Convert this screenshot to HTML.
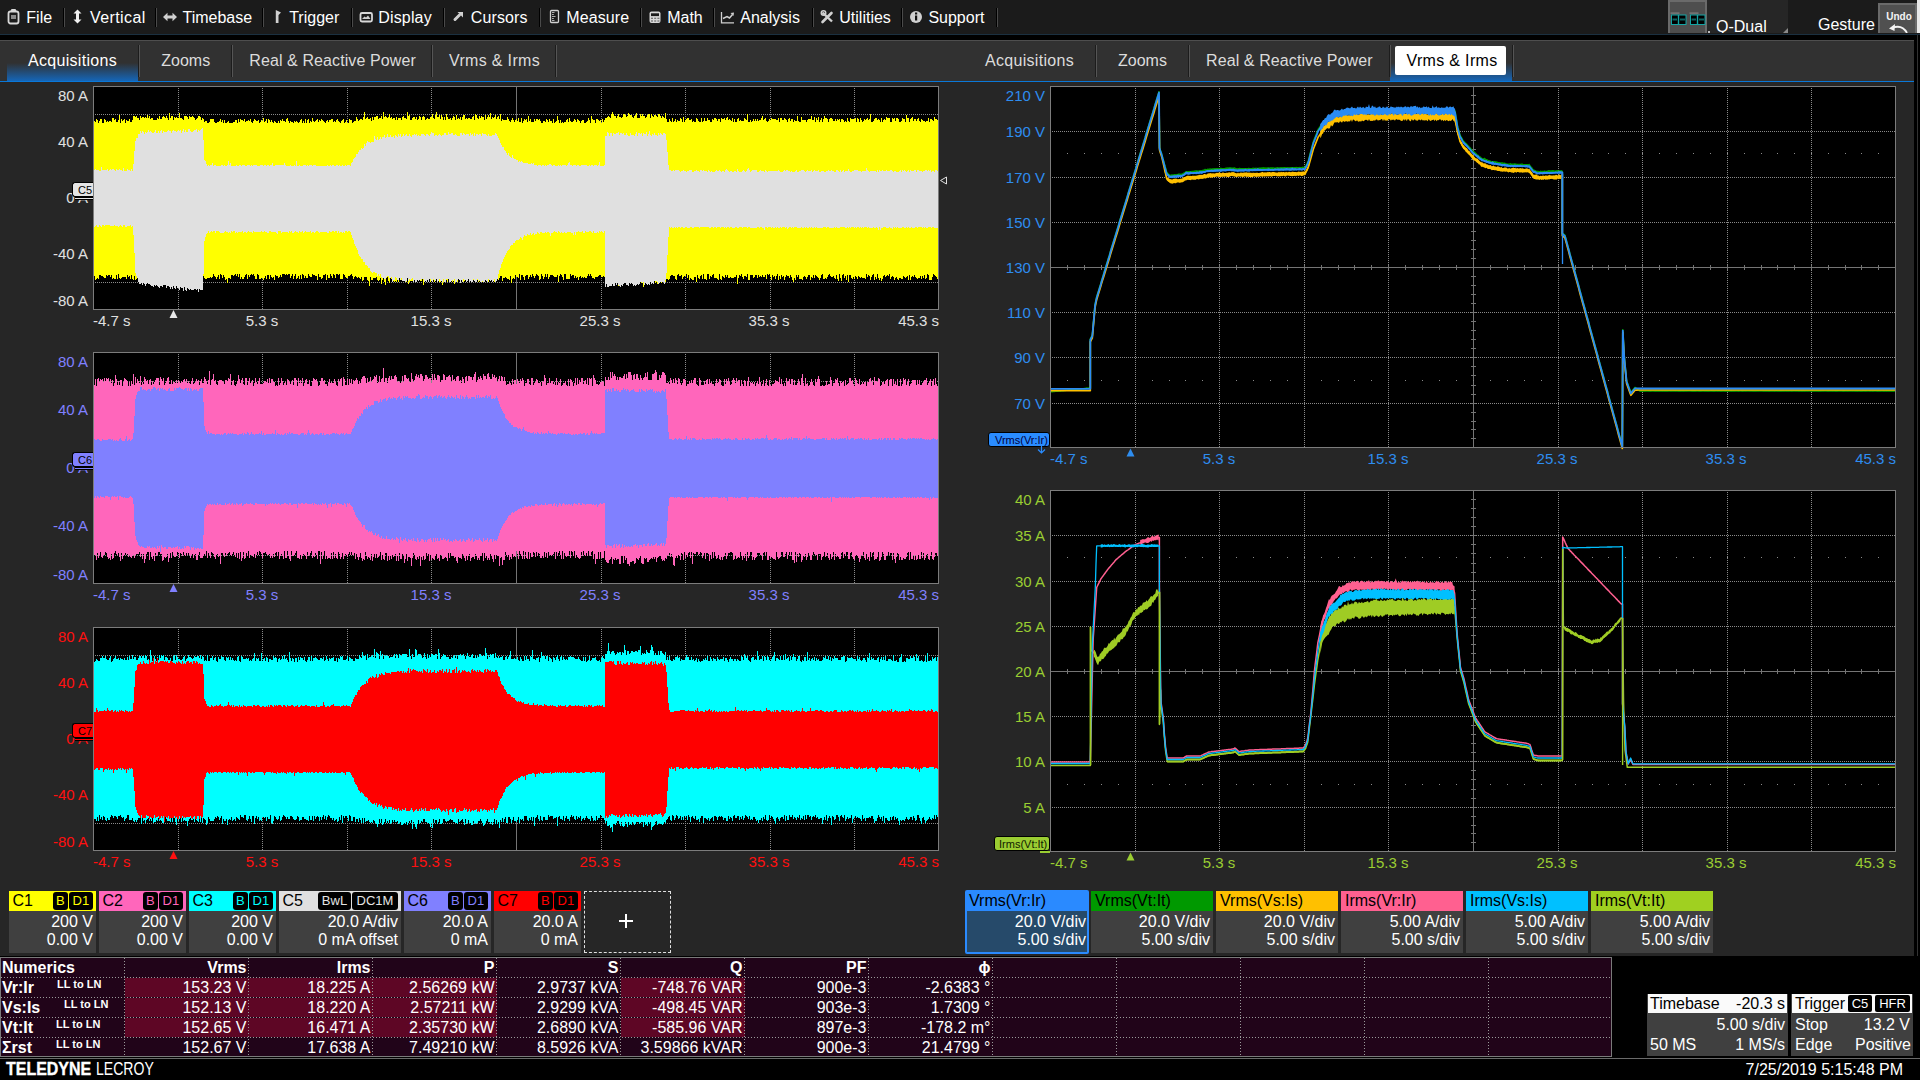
<!DOCTYPE html><html><head><meta charset="utf-8"><style>
html,body{margin:0;padding:0;width:1920px;height:1080px;overflow:hidden;background:#262626;}
body{position:relative;font-family:"Liberation Sans", sans-serif;}
.t{position:absolute;white-space:nowrap;}
</style></head><body>
<div style="position:absolute;left:0px;top:0px;width:1920px;height:34px;background:#1b1b1b;"></div><div style="position:absolute;left:0px;top:34px;width:1920px;height:1px;background:#1b3040;"></div><div style="position:absolute;left:0px;top:35px;width:1920px;height:5px;background:#000;"></div><div class="t" style="left:26.3px;top:9px;font-size:16px;line-height:18px;color:#fff;">File</div><div class="t" style="left:90px;top:9px;font-size:16px;line-height:18px;color:#fff;letter-spacing:0.4px;">Vertical</div><div class="t" style="left:182.5px;top:9px;font-size:16px;line-height:18px;color:#fff;">Timebase</div><div class="t" style="left:289.2px;top:9px;font-size:16px;line-height:18px;color:#fff;">Trigger</div><div class="t" style="left:378.3px;top:9px;font-size:16px;line-height:18px;color:#fff;letter-spacing:0.15px;">Display</div><div class="t" style="left:470.8px;top:9px;font-size:16px;line-height:18px;color:#fff;letter-spacing:0.1px;">Cursors</div><div class="t" style="left:566.3px;top:9px;font-size:16px;line-height:18px;color:#fff;letter-spacing:0.1px;">Measure</div><div class="t" style="left:667.2px;top:9px;font-size:16px;line-height:18px;color:#fff;">Math</div><div class="t" style="left:740.3px;top:9px;font-size:16px;line-height:18px;color:#fff;">Analysis</div><div class="t" style="left:839.3px;top:9px;font-size:16px;line-height:18px;color:#fff;">Utilities</div><div class="t" style="left:928.4px;top:9px;font-size:16px;line-height:18px;color:#fff;">Support</div><div style="position:absolute;left:63px;top:8px;width:1px;height:19px;background:#000;"></div><div style="position:absolute;left:64px;top:8px;width:1px;height:19px;background:#4a4a4a;"></div><div style="position:absolute;left:155px;top:8px;width:1px;height:19px;background:#000;"></div><div style="position:absolute;left:156px;top:8px;width:1px;height:19px;background:#4a4a4a;"></div><div style="position:absolute;left:262px;top:8px;width:1px;height:19px;background:#000;"></div><div style="position:absolute;left:263px;top:8px;width:1px;height:19px;background:#4a4a4a;"></div><div style="position:absolute;left:351px;top:8px;width:1px;height:19px;background:#000;"></div><div style="position:absolute;left:352px;top:8px;width:1px;height:19px;background:#4a4a4a;"></div><div style="position:absolute;left:443px;top:8px;width:1px;height:19px;background:#000;"></div><div style="position:absolute;left:444px;top:8px;width:1px;height:19px;background:#4a4a4a;"></div><div style="position:absolute;left:539px;top:8px;width:1px;height:19px;background:#000;"></div><div style="position:absolute;left:540px;top:8px;width:1px;height:19px;background:#4a4a4a;"></div><div style="position:absolute;left:640px;top:8px;width:1px;height:19px;background:#000;"></div><div style="position:absolute;left:641px;top:8px;width:1px;height:19px;background:#4a4a4a;"></div><div style="position:absolute;left:713px;top:8px;width:1px;height:19px;background:#000;"></div><div style="position:absolute;left:714px;top:8px;width:1px;height:19px;background:#4a4a4a;"></div><div style="position:absolute;left:812px;top:8px;width:1px;height:19px;background:#000;"></div><div style="position:absolute;left:813px;top:8px;width:1px;height:19px;background:#4a4a4a;"></div><div style="position:absolute;left:901px;top:8px;width:1px;height:19px;background:#000;"></div><div style="position:absolute;left:902px;top:8px;width:1px;height:19px;background:#4a4a4a;"></div><div style="position:absolute;left:996px;top:8px;width:1px;height:19px;background:#000;"></div><div style="position:absolute;left:997px;top:8px;width:1px;height:19px;background:#4a4a4a;"></div><svg style="position:absolute;left:0;top:0" width="1000" height="33">
<rect x="8.5" y="11.5" width="10" height="12" rx="2" fill="none" stroke="#d8d8d8" stroke-width="1.8"/>
<path d="M10 12 L11.5 9 L15.5 9 L17 12 Z" fill="#d8d8d8"/>
<rect x="11" y="15" width="5" height="4" fill="#8a8a8a"/>
<path d="M77.5 9.5 L81.5 13.5 L79 13.5 L79 19.5 L81.5 19.5 L77.5 23.5 L73.5 19.5 L76 19.5 L76 13.5 L73.5 13.5 Z" fill="#f2f2f2"/>
<path d="M163 17 L167.5 12.8 L167.5 15.5 L172.5 15.5 L172.5 12.8 L177 17 L172.5 21.2 L172.5 18.5 L167.5 18.5 L167.5 21.2 Z" fill="#d0d0d0"/>
<path d="M275.8 10 L281 12.5 L278.5 15 L278.5 23 L275.8 23 Z" fill="#d0d0d0"/>
<rect x="360.5" y="13" width="11.5" height="8.5" rx="1.5" fill="none" stroke="#d8d8d8" stroke-width="1.8"/>
<path d="M362 19 L364.5 16.5 L366 17.5 L368 15.5 L370.5 19 Z" fill="#d0d0d0"/>
<path d="M455 19.5 L459.5 15" stroke="#d0d0d0" stroke-width="3" stroke-linecap="round"/>
<path d="M457.5 12 L463 12 L463 17.5 Z" fill="#d0d0d0"/>
<rect x="550.5" y="10.5" width="8" height="12" rx="1" fill="none" stroke="#d0d0d0" stroke-width="1.3"/>
<path d="M552 12.5h2.5M552 14.5h1.8M552 16.5h3.5M552 18.5h1.8M552 20.5h2.5" stroke="#c0c0c0" stroke-width="0.9"/>
<rect x="649.5" y="11.5" width="11" height="11.5" rx="2" fill="#d8d8d8"/>
<rect x="651" y="13.3" width="8" height="2.8" fill="#1b1b1b"/>
<path d="M651 18.2h2M654.2 18.2h2M657.4 18.2h2M651 21h2M654.2 21h2M657.4 21h2" stroke="#555" stroke-width="1.1"/>
<path d="M721.5 12 V22.8 H734" fill="none" stroke="#d0d0d0" stroke-width="1.3"/>
<path d="M723 18.5 L727 16.5 L729.5 18 L732.5 14.5" fill="none" stroke="#d0d0d0" stroke-width="1.5"/>
<path d="M730.5 13 L734 12.5 L733.5 16 Z" fill="#d0d0d0"/>
<path d="M822.5 22 L831.5 13" stroke="#d0d0d0" stroke-width="2.6" stroke-linecap="round"/>
<path d="M822.5 12.5 L832 21.5" stroke="#d0d0d0" stroke-width="2.4"/>
<circle cx="823.5" cy="13" r="2.2" fill="none" stroke="#d0d0d0" stroke-width="1.6"/>
<circle cx="916" cy="17" r="6" fill="#d0d0d0"/><rect x="915" y="15.5" width="2.2" height="5" fill="#111"/><rect x="915" y="12.5" width="2.2" height="2" fill="#111"/>
</svg><div style="position:absolute;left:1668px;top:0px;width:39px;height:33px;background:#6a6a6a;"></div><div style="position:absolute;left:1670px;top:2px;width:35px;height:31px;background:#4e4e4e;"></div><div style="position:absolute;left:1707px;top:0px;width:81px;height:33px;background:#262626;"></div><svg style="position:absolute;left:1668px;top:0" width="40" height="33">
<g><rect x="3.5" y="15" width="14.5" height="9.5" fill="#000" stroke="#13a5a5" stroke-width="1"/>
<rect x="9.8" y="15" width="1.4" height="9.5" fill="#13a5a5"/><rect x="4.5" y="18.5" width="4.5" height="2" fill="#13a5a5" opacity=".6"/><rect x="12" y="18.5" width="5" height="2" fill="#13a5a5" opacity=".6"/>
<rect x="2.5" y="12.5" width="9" height="1.2" fill="#9a9a9a" opacity=".7"/></g>
<g transform="translate(19,0)"><rect x="3.5" y="15" width="14.5" height="9.5" fill="#000" stroke="#13a5a5" stroke-width="1"/>
<rect x="9.8" y="15" width="1.4" height="9.5" fill="#13a5a5"/><rect x="4.5" y="18.5" width="4.5" height="2" fill="#13a5a5" opacity=".6"/><rect x="12" y="18.5" width="5" height="2" fill="#13a5a5" opacity=".6"/>
<rect x="2.5" y="12.5" width="9" height="1.2" fill="#9a9a9a" opacity=".7"/></g>
</svg><div style="position:absolute;left:1707px;top:0;width:81px;height:33px;overflow:hidden;"><div class="t" style="left:9px;top:18px;font-size:16px;line-height:18px;color:#fff;">Q-Dual</div></div><svg style="position:absolute;left:1780px;top:27px" width="10" height="7"><path d="M8 1 L8 6 L3 6 Z" fill="#8a8a8a"/></svg><div style="position:absolute;left:1708px;top:31px;width:2px;height:2px;background:#bbb;"></div><div class="t" style="left:1818px;top:16px;font-size:16px;line-height:18px;color:#fff;">Gesture</div><div style="position:absolute;left:1878px;top:3px;width:39px;height:30px;background:#6a6a6a;"></div><div style="position:absolute;left:1880px;top:5px;width:35px;height:28px;background:#505050;"></div><div class="t" style="left:1599px;width:600px;text-align:center;top:11px;font-size:10px;line-height:12px;color:#f4f4f4;font-weight:bold;">Undo</div><svg style="position:absolute;left:1878px;top:20px" width="39" height="13"><path d="M14 8 Q24 4 29 13" fill="none" stroke="#f4f4f4" stroke-width="1.8"/><path d="M11 8.5 L17 4 L16.5 11 Z" fill="#f4f4f4"/></svg><div style="position:absolute;left:1917px;top:0px;width:3px;height:33px;background:#e8e8e8;"></div><div style="position:absolute;left:0px;top:40px;width:1914px;height:1px;background:#4e4e4e;"></div><div style="position:absolute;left:0px;top:41px;width:1914px;height:40px;background:#313131;"></div><div style="position:absolute;left:0px;top:81px;width:1914px;height:1px;background:#0a78d8;"></div><div style="position:absolute;left:0px;top:82px;width:1914px;height:1px;background:#2a2522;"></div><div style="position:absolute;left:1914px;top:35px;width:6px;height:1045px;background:#000;"></div><div style="position:absolute;left:1917px;top:35px;width:1px;height:1022px;background:#333;"></div><div style="position:absolute;left:7px;top:63px;width:131px;height:18px;background:linear-gradient(#313131,#1566b8);"></div><div class="t" style="left:28px;top:52px;font-size:16px;line-height:18px;color:#fff;letter-spacing:0.3px;">Acquisitions</div><div class="t" style="left:161.25px;top:52px;font-size:16px;line-height:18px;color:#dcdcdc;">Zooms</div><div class="t" style="left:249.25px;top:52px;font-size:16px;line-height:18px;color:#dcdcdc;letter-spacing:0.1px;">Real &amp; Reactive Power</div><div class="t" style="left:449px;top:52px;font-size:16px;line-height:18px;color:#dcdcdc;letter-spacing:0.33px;">Vrms &amp; Irms</div><div style="position:absolute;left:138px;top:45px;width:1px;height:32px;background:#1c1c1c;"></div><div style="position:absolute;left:139px;top:45px;width:1px;height:32px;background:#555;"></div><div style="position:absolute;left:231px;top:45px;width:1px;height:32px;background:#1c1c1c;"></div><div style="position:absolute;left:232px;top:45px;width:1px;height:32px;background:#555;"></div><div style="position:absolute;left:431px;top:45px;width:1px;height:32px;background:#1c1c1c;"></div><div style="position:absolute;left:432px;top:45px;width:1px;height:32px;background:#555;"></div><div style="position:absolute;left:555px;top:45px;width:1px;height:32px;background:#1c1c1c;"></div><div style="position:absolute;left:556px;top:45px;width:1px;height:32px;background:#555;"></div><div style="position:absolute;left:1390px;top:63px;width:122px;height:18px;background:linear-gradient(#313131,#1566b8);"></div><div style="position:absolute;left:1395px;top:46px;width:111px;height:29px;background:#ffffff;border-radius:2px;"></div><div class="t" style="left:985px;top:52px;font-size:16px;line-height:18px;color:#dcdcdc;letter-spacing:0.3px;">Acquisitions</div><div class="t" style="left:1118px;top:52px;font-size:16px;line-height:18px;color:#dcdcdc;">Zooms</div><div class="t" style="left:1206px;top:52px;font-size:16px;line-height:18px;color:#dcdcdc;letter-spacing:0.1px;">Real &amp; Reactive Power</div><div class="t" style="left:1406.5px;top:52px;font-size:16px;line-height:18px;color:#000;letter-spacing:0.33px;">Vrms &amp; Irms</div><div style="position:absolute;left:1095px;top:45px;width:1px;height:32px;background:#1c1c1c;"></div><div style="position:absolute;left:1096px;top:45px;width:1px;height:32px;background:#555;"></div><div style="position:absolute;left:1188px;top:45px;width:1px;height:32px;background:#1c1c1c;"></div><div style="position:absolute;left:1189px;top:45px;width:1px;height:32px;background:#555;"></div><div style="position:absolute;left:1389px;top:45px;width:1px;height:32px;background:#1c1c1c;"></div><div style="position:absolute;left:1390px;top:45px;width:1px;height:32px;background:#555;"></div><div style="position:absolute;left:1512px;top:45px;width:1px;height:32px;background:#1c1c1c;"></div><div style="position:absolute;left:1513px;top:45px;width:1px;height:32px;background:#555;"></div>
<svg style="position:absolute;left:0;top:0" width="1920" height="1080"><rect x="93" y="86" width="846" height="224" fill="#000"/><path d="M178.5 88V309M262.5 88V309M347.5 88V309M431.5 88V309M601.5 88V309M685.5 88V309M770.5 88V309M854.5 88V309M95 114.5H938M95 142.5H938M95 170.5H938M95 226.5H938M95 254.5H938M95 282.5H938" stroke="#8a8a8a" stroke-width="1" stroke-dasharray="1 1" fill="none" shape-rendering="crispEdges"/><path d="M516.5 87V309M94 198.5H938" stroke="#747474" stroke-width="1" fill="none" shape-rendering="crispEdges"/><rect x="93" y="352" width="846" height="232" fill="#000"/><path d="M178.5 354V583M262.5 354V583M347.5 354V583M431.5 354V583M601.5 354V583M685.5 354V583M770.5 354V583M854.5 354V583M95 381.5H938M95 410.5H938M95 439.5H938M95 497.5H938M95 526.5H938M95 555.5H938" stroke="#8a8a8a" stroke-width="1" stroke-dasharray="1 1" fill="none" shape-rendering="crispEdges"/><path d="M516.5 353V583M94 468.5H938" stroke="#747474" stroke-width="1" fill="none" shape-rendering="crispEdges"/><rect x="93" y="627" width="846" height="224" fill="#000"/><path d="M178.5 629V850M262.5 629V850M347.5 629V850M431.5 629V850M601.5 629V850M685.5 629V850M770.5 629V850M854.5 629V850M95 655.5H938M95 683.5H938M95 711.5H938M95 767.5H938M95 795.5H938M95 823.5H938" stroke="#8a8a8a" stroke-width="1" stroke-dasharray="1 1" fill="none" shape-rendering="crispEdges"/><path d="M516.5 628V850M94 739.5H938" stroke="#747474" stroke-width="1" fill="none" shape-rendering="crispEdges"/><path d="M94 121V121h1V122h1V119h1V120h1V123h1V121h1V119h1V119h1V123h1V123h1V119h1V120h1V122h1V121h1V122h1V121h1V121h1V122h1V118h1V118h1V120h1V119h1V122h1V122h1V120h1V115h1V123h1V119h1V121h1V120h1V119h1V123h1V120h1V121h1V121h1V119h1V122h1V122h1V120h1V116h1V116h1V117h1V116h1V118h1V118h1V120h1V116h1V118h1V117h1V117h1V118h1V117h1V118h1V115h1V118h1V116h1V119h1V118h1V118h1V120h1V120h1V120h1V120h1V118h1V119h1V116h1V119h1V119h1V117h1V116h1V117h1V118h1V116h1V118h1V120h1V113h1V118h1V116h1V116h1V120h1V117h1V118h1V117h1V118h1V118h1V113h1V118h1V118h1V119h1V120h1V116h1V116h1V116h1V117h1V119h1V116h1V117h1V117h1V116h1V117h1V118h1V120h1V119h1V118h1V116h1V116h1V117h1V120h1V118h1V119h1V122h1V121h1V121h1V123h1V123h1V122h1V119h1V119h1V119h1V119h1V122h1V123h1V123h1V122h1V122h1V121h1V119h1V122h1V120h1V123h1V120h1V123h1V123h1V122h1V121h1V123h1V123h1V123h1V123h1V122h1V122h1V120h1V120h1V123h1V119h1V122h1V119h1V120h1V120h1V121h1V119h1V122h1V121h1V121h1V120h1V121h1V119h1V122h1V123h1V121h1V119h1V120h1V121h1V121h1V120h1V123h1V122h1V120h1V121h1V118h1V122h1V121h1V119h1V123h1V119h1V120h1V122h1V120h1V122h1V123h1V121h1V122h1V123h1V123h1V121h1V123h1V120h1V121h1V119h1V121h1V121h1V122h1V119h1V118h1V121h1V123h1V121h1V122h1V122h1V123h1V121h1V122h1V121h1V122h1V123h1V122h1V120h1V119h1V123h1V121h1V123h1V119h1V123h1V120h1V119h1V123h1V121h1V122h1V118h1V121h1V122h1V121h1V120h1V119h1V122h1V120h1V121h1V119h1V120h1V121h1V122h1V123h1V121h1V120h1V122h1V120h1V120h1V119h1V119h1V122h1V121h1V122h1V120h1V119h1V121h1V122h1V123h1V121h1V120h1V119h1V123h1V122h1V120h1V123h1V123h1V119h1V120h1V120h1V123h1V122h1V121h1V121h1V117h1V119h1V121h1V120h1V119h1V119h1V120h1V117h1V112h1V119h1V118h1V117h1V119h1V119h1V118h1V121h1V117h1V120h1V117h1V117h1V116h1V116h1V119h1V118h1V118h1V116h1V119h1V112h1V117h1V116h1V117h1V118h1V117h1V114h1V118h1V117h1V119h1V118h1V118h1V120h1V117h1V120h1V118h1V118h1V118h1V120h1V117h1V116h1V118h1V118h1V119h1V112h1V116h1V115h1V120h1V120h1V118h1V117h1V117h1V119h1V117h1V120h1V119h1V116h1V117h1V120h1V117h1V116h1V117h1V120h1V119h1V118h1V119h1V119h1V117h1V117h1V114h1V118h1V119h1V115h1V112h1V117h1V117h1V115h1V119h1V115h1V117h1V120h1V117h1V120h1V114h1V117h1V119h1V119h1V118h1V120h1V118h1V116h1V117h1V120h1V115h1V119h1V118h1V119h1V117h1V120h1V117h1V115h1V115h1V119h1V118h1V119h1V118h1V118h1V119h1V119h1V117h1V116h1V120h1V114h1V115h1V118h1V119h1V116h1V118h1V116h1V117h1V117h1V120h1V115h1V119h1V117h1V115h1V117h1V113h1V119h1V117h1V118h1V117h1V115h1V119h1V117h1V116h1V119h1V114h1V121h1V119h1V120h1V120h1V120h1V120h1V117h1V119h1V121h1V122h1V120h1V118h1V120h1V122h1V120h1V119h1V121h1V118h1V122h1V122h1V118h1V123h1V121h1V119h1V120h1V119h1V122h1V116h1V121h1V119h1V122h1V122h1V122h1V119h1V121h1V119h1V119h1V120h1V119h1V121h1V123h1V123h1V121h1V121h1V122h1V119h1V120h1V122h1V119h1V121h1V121h1V123h1V119h1V123h1V122h1V121h1V116h1V120h1V123h1V120h1V123h1V122h1V123h1V122h1V122h1V120h1V119h1V122h1V118h1V121h1V122h1V122h1V121h1V119h1V120h1V122h1V119h1V120h1V121h1V123h1V121h1V120h1V120h1V123h1V123h1V122h1V121h1V118h1V120h1V123h1V116h1V119h1V120h1V120h1V123h1V119h1V119h1V120h1V121h1V120h1V123h1V119h1V122h1V120h1V118h1V118h1V117h1V116h1V117h1V118h1V114h1V112h1V114h1V116h1V116h1V118h1V116h1V114h1V117h1V117h1V118h1V117h1V114h1V114h1V115h1V117h1V116h1V113h1V114h1V115h1V115h1V117h1V118h1V116h1V115h1V113h1V118h1V118h1V118h1V114h1V116h1V114h1V116h1V116h1V118h1V117h1V115h1V114h1V114h1V118h1V114h1V116h1V117h1V115h1V115h1V116h1V117h1V114h1V114h1V116h1V118h1V116h1V117h1V118h1V113h1V119h1V122h1V122h1V119h1V121h1V122h1V118h1V122h1V121h1V119h1V122h1V120h1V121h1V121h1V118h1V119h1V122h1V117h1V122h1V120h1V119h1V118h1V118h1V120h1V120h1V119h1V122h1V121h1V122h1V122h1V118h1V119h1V121h1V122h1V122h1V118h1V122h1V121h1V118h1V121h1V121h1V118h1V120h1V120h1V122h1V122h1V119h1V120h1V118h1V118h1V119h1V121h1V119h1V119h1V122h1V118h1V119h1V119h1V118h1V120h1V118h1V117h1V120h1V119h1V120h1V121h1V118h1V122h1V119h1V122h1V122h1V119h1V118h1V121h1V120h1V121h1V121h1V121h1V118h1V119h1V120h1V114h1V122h1V122h1V120h1V122h1V121h1V119h1V121h1V119h1V121h1V119h1V121h1V120h1V120h1V118h1V116h1V120h1V119h1V118h1V121h1V122h1V121h1V119h1V120h1V118h1V119h1V119h1V119h1V119h1V120h1V120h1V118h1V122h1V118h1V118h1V120h1V120h1V118h1V119h1V120h1V122h1V119h1V118h1V121h1V119h1V119h1V122h1V120h1V121h1V121h1V116h1V121h1V122h1V122h1V117h1V120h1V120h1V120h1V120h1V122h1V120h1V119h1V119h1V119h1V116h1V120h1V120h1V117h1V122h1V118h1V120h1V117h1V122h1V120h1V118h1V122h1V119h1V116h1V118h1V118h1V119h1V122h1V119h1V118h1V118h1V119h1V121h1V121h1V119h1V121h1V119h1V120h1V119h1V122h1V119h1V119h1V120h1V122h1V121h1V122h1V118h1V121h1V122h1V118h1V119h1V119h1V119h1V119h1V118h1V122h1V118h1V119h1V122h1V118h1V120h1V122h1V121h1V119h1V120h1V119h1V118h1V120h1V119h1V114h1V122h1V122h1V121h1V119h1V118h1V118h1V120h1V119h1V120h1V122h1V118h1V122h1V120h1V119h1V120h1V117h1V118h1V118h1V118h1V122h1V122h1V118h1V119h1V118h1V121h1V118h1V118h1V119h1V122h1V122h1V121h1V118h1V119h1V119h1V122h1V115h1V118h1V118h1V122h1V119h1V118h1V117h1V121h1V119h1V119h1V121h1V119h1V118h1V121h1V122h1V119h1V120h1V121h1V121h1V122h1V121h1V121h1V118h1V122h1V119h1V119h1V120h1V121h1V117h1V119h1V119h1V120h1V279h-1V277h-1V276h-1V275h-1V274h-1V277h-1V280h-1V280h-1V280h-1V275h-1V274h-1V278h-1V279h-1V275h-1V278h-1V276h-1V279h-1V276h-1V278h-1V278h-1V279h-1V278h-1V277h-1V275h-1V277h-1V276h-1V277h-1V280h-1V275h-1V280h-1V276h-1V277h-1V278h-1V277h-1V276h-1V279h-1V279h-1V278h-1V278h-1V280h-1V279h-1V277h-1V278h-1V280h-1V277h-1V276h-1V277h-1V279h-1V274h-1V276h-1V275h-1V276h-1V277h-1V275h-1V276h-1V279h-1V281h-1V278h-1V280h-1V278h-1V274h-1V279h-1V277h-1V280h-1V274h-1V275h-1V277h-1V280h-1V276h-1V275h-1V277h-1V274h-1V279h-1V278h-1V278h-1V278h-1V277h-1V278h-1V277h-1V276h-1V279h-1V277h-1V276h-1V279h-1V277h-1V279h-1V278h-1V275h-1V275h-1V282h-1V275h-1V280h-1V276h-1V278h-1V274h-1V275h-1V281h-1V278h-1V274h-1V281h-1V279h-1V275h-1V279h-1V278h-1V276h-1V277h-1V277h-1V276h-1V274h-1V275h-1V277h-1V279h-1V278h-1V279h-1V279h-1V274h-1V275h-1V278h-1V280h-1V278h-1V277h-1V276h-1V275h-1V278h-1V275h-1V278h-1V277h-1V280h-1V275h-1V275h-1V277h-1V279h-1V277h-1V276h-1V277h-1V280h-1V279h-1V279h-1V279h-1V275h-1V277h-1V275h-1V280h-1V278h-1V282h-1V280h-1V277h-1V275h-1V278h-1V276h-1V276h-1V275h-1V277h-1V280h-1V276h-1V277h-1V275h-1V279h-1V276h-1V280h-1V274h-1V276h-1V279h-1V276h-1V277h-1V275h-1V280h-1V277h-1V274h-1V275h-1V274h-1V279h-1V275h-1V277h-1V277h-1V275h-1V277h-1V276h-1V277h-1V275h-1V278h-1V275h-1V275h-1V277h-1V278h-1V275h-1V275h-1V275h-1V280h-1V280h-1V274h-1V277h-1V276h-1V276h-1V279h-1V277h-1V274h-1V276h-1V275h-1V278h-1V284h-1V275h-1V277h-1V277h-1V278h-1V278h-1V278h-1V277h-1V278h-1V278h-1V275h-1V277h-1V275h-1V278h-1V277h-1V276h-1V280h-1V279h-1V274h-1V280h-1V279h-1V278h-1V278h-1V278h-1V274h-1V275h-1V277h-1V276h-1V279h-1V274h-1V274h-1V280h-1V279h-1V279h-1V274h-1V279h-1V275h-1V276h-1V279h-1V278h-1V275h-1V282h-1V277h-1V277h-1V280h-1V280h-1V279h-1V278h-1V280h-1V275h-1V278h-1V274h-1V276h-1V276h-1V277h-1V279h-1V275h-1V276h-1V276h-1V274h-1V275h-1V280h-1V279h-1V276h-1V276h-1V275h-1V275h-1V276h-1V279h-1V280h-1V279h-1V279h-1V282h-1V282h-1V282h-1V281h-1V283h-1V282h-1V281h-1V278h-1V284h-1V282h-1V283h-1V279h-1V284h-1V280h-1V283h-1V281h-1V281h-1V281h-1V282h-1V279h-1V283h-1V281h-1V287h-1V282h-1V283h-1V282h-1V281h-1V281h-1V280h-1V280h-1V281h-1V279h-1V283h-1V282h-1V280h-1V279h-1V282h-1V280h-1V280h-1V282h-1V281h-1V279h-1V279h-1V284h-1V278h-1V282h-1V282h-1V286h-1V280h-1V279h-1V281h-1V279h-1V284h-1V279h-1V283h-1V282h-1V278h-1V278h-1V281h-1V279h-1V280h-1V277h-1V276h-1V277h-1V277h-1V275h-1V275h-1V276h-1V277h-1V277h-1V277h-1V279h-1V278h-1V278h-1V276h-1V274h-1V276h-1V274h-1V276h-1V278h-1V278h-1V277h-1V278h-1V277h-1V278h-1V276h-1V277h-1V280h-1V277h-1V278h-1V276h-1V278h-1V275h-1V275h-1V276h-1V274h-1V279h-1V279h-1V279h-1V279h-1V274h-1V274h-1V280h-1V277h-1V275h-1V274h-1V276h-1V282h-1V275h-1V277h-1V277h-1V277h-1V276h-1V275h-1V275h-1V275h-1V277h-1V279h-1V274h-1V277h-1V274h-1V277h-1V279h-1V276h-1V274h-1V279h-1V280h-1V276h-1V275h-1V274h-1V276h-1V278h-1V276h-1V274h-1V277h-1V275h-1V277h-1V279h-1V275h-1V275h-1V276h-1V280h-1V277h-1V275h-1V275h-1V280h-1V274h-1V278h-1V277h-1V277h-1V275h-1V279h-1V278h-1V279h-1V283h-1V276h-1V280h-1V279h-1V279h-1V278h-1V277h-1V278h-1V278h-1V281h-1V276h-1V276h-1V278h-1V280h-1V277h-1V278h-1V282h-1V282h-1V279h-1V279h-1V279h-1V279h-1V278h-1V282h-1V278h-1V280h-1V279h-1V281h-1V280h-1V282h-1V282h-1V277h-1V281h-1V282h-1V280h-1V280h-1V281h-1V280h-1V280h-1V279h-1V282h-1V278h-1V282h-1V279h-1V279h-1V279h-1V279h-1V281h-1V282h-1V280h-1V278h-1V281h-1V278h-1V278h-1V282h-1V277h-1V278h-1V284h-1V281h-1V282h-1V278h-1V281h-1V282h-1V278h-1V282h-1V280h-1V281h-1V281h-1V282h-1V285h-1V277h-1V282h-1V282h-1V278h-1V282h-1V277h-1V277h-1V282h-1V280h-1V281h-1V280h-1V282h-1V278h-1V280h-1V278h-1V282h-1V278h-1V282h-1V285h-1V279h-1V281h-1V281h-1V279h-1V280h-1V280h-1V281h-1V277h-1V279h-1V277h-1V281h-1V281h-1V281h-1V282h-1V284h-1V278h-1V282h-1V281h-1V278h-1V276h-1V279h-1V280h-1V279h-1V278h-1V282h-1V278h-1V282h-1V281h-1V282h-1V281h-1V278h-1V279h-1V278h-1V283h-1V281h-1V277h-1V278h-1V285h-1V282h-1V278h-1V280h-1V284h-1V278h-1V280h-1V281h-1V280h-1V277h-1V278h-1V278h-1V278h-1V280h-1V280h-1V277h-1V286h-1V281h-1V280h-1V277h-1V277h-1V277h-1V280h-1V281h-1V277h-1V279h-1V278h-1V277h-1V278h-1V277h-1V276h-1V277h-1V279h-1V276h-1V274h-1V275h-1V276h-1V276h-1V278h-1V278h-1V277h-1V275h-1V274h-1V279h-1V279h-1V279h-1V274h-1V275h-1V274h-1V274h-1V278h-1V275h-1V274h-1V278h-1V276h-1V274h-1V278h-1V278h-1V275h-1V280h-1V274h-1V275h-1V275h-1V278h-1V279h-1V277h-1V277h-1V274h-1V280h-1V276h-1V276h-1V275h-1V275h-1V274h-1V277h-1V277h-1V276h-1V274h-1V278h-1V278h-1V276h-1V278h-1V275h-1V274h-1V279h-1V275h-1V279h-1V276h-1V278h-1V279h-1V274h-1V276h-1V279h-1V274h-1V276h-1V278h-1V274h-1V274h-1V275h-1V274h-1V275h-1V274h-1V274h-1V274h-1V277h-1V275h-1V277h-1V278h-1V276h-1V276h-1V275h-1V280h-1V277h-1V278h-1V277h-1V275h-1V279h-1V275h-1V275h-1V279h-1V276h-1V278h-1V280h-1V278h-1V278h-1V279h-1V279h-1V275h-1V274h-1V279h-1V279h-1V276h-1V274h-1V275h-1V274h-1V275h-1V277h-1V275h-1V279h-1V274h-1V275h-1V277h-1V279h-1V279h-1V277h-1V279h-1V274h-1V277h-1V274h-1V276h-1V274h-1V275h-1V276h-1V275h-1V275h-1V279h-1V278h-1V278h-1V283h-1V279h-1V280h-1V277h-1V275h-1V278h-1V275h-1V274h-1V279h-1V275h-1V277h-1V279h-1V277h-1V276h-1V274h-1V277h-1V278h-1V277h-1V278h-1V278h-1V278h-1V279h-1V279h-1V278h-1V276h-1V278h-1V282h-1V278h-1V276h-1V279h-1V279h-1V280h-1V281h-1V280h-1V279h-1V279h-1V277h-1V280h-1V277h-1V281h-1V279h-1V277h-1V282h-1V281h-1V281h-1V276h-1V278h-1V284h-1V276h-1V279h-1V277h-1V280h-1V282h-1V280h-1V276h-1V281h-1V281h-1V282h-1V280h-1V278h-1V283h-1V279h-1V277h-1V279h-1V279h-1V281h-1V277h-1V282h-1V281h-1V279h-1V278h-1V279h-1V278h-1V277h-1V281h-1V282h-1V279h-1V284h-1V282h-1V278h-1V278h-1V280h-1V281h-1V283h-1V281h-1V282h-1V280h-1V281h-1V277h-1V278h-1V278h-1V279h-1V280h-1V276h-1V280h-1V279h-1V275h-1V279h-1V276h-1V277h-1V275h-1V279h-1V277h-1V277h-1V277h-1V277h-1V278h-1V279h-1V278h-1V274h-1V279h-1V275h-1V279h-1V279h-1V278h-1V279h-1V275h-1V277h-1V275h-1V275h-1V276h-1V275h-1V278h-1V278h-1V277h-1V276h-1V276h-1V275h-1V275h-1V279h-1V278h-1V279h-1V280h-1V276h-1Z" fill="#ffff00" shape-rendering="crispEdges"/><path d="M94 170V170h1V169h1V170h1V170h1V170h1V171h1V171h1V167h1V170h1V170h1V170h1V170h1V170h1V169h1V171h1V170h1V169h1V170h1V169h1V169h1V170h1V171h1V169h1V170h1V170h1V169h1V170h1V170h1V171h1V168h1V171h1V171h1V171h1V169h1V170h1V170h1V171h1V169h1V171h1V164h1V151h1V141h1V138h1V138h1V134h1V134h1V131h1V133h1V131h1V132h1V134h1V132h1V133h1V132h1V130h1V132h1V131h1V132h1V133h1V133h1V132h1V130h1V133h1V133h1V131h1V133h1V131h1V130h1V133h1V131h1V132h1V132h1V132h1V131h1V130h1V131h1V131h1V133h1V131h1V130h1V131h1V131h1V132h1V131h1V130h1V131h1V130h1V133h1V131h1V129h1V132h1V130h1V132h1V132h1V129h1V129h1V131h1V132h1V132h1V131h1V130h1V130h1V129h1V132h1V130h1V131h1V130h1V129h1V128h1V140h1V160h1V161h1V164h1V166h1V165h1V166h1V165h1V165h1V163h1V166h1V165h1V165h1V166h1V166h1V166h1V166h1V166h1V165h1V165h1V166h1V165h1V166h1V166h1V165h1V161h1V165h1V163h1V166h1V166h1V166h1V166h1V166h1V165h1V166h1V166h1V165h1V165h1V166h1V165h1V165h1V165h1V166h1V166h1V165h1V165h1V165h1V166h1V165h1V166h1V165h1V165h1V165h1V165h1V166h1V166h1V166h1V165h1V165h1V165h1V166h1V165h1V165h1V166h1V165h1V165h1V166h1V165h1V165h1V163h1V166h1V166h1V165h1V165h1V165h1V165h1V165h1V165h1V165h1V165h1V165h1V163h1V165h1V166h1V166h1V166h1V166h1V165h1V166h1V166h1V166h1V165h1V166h1V161h1V166h1V166h1V165h1V166h1V166h1V166h1V165h1V165h1V165h1V166h1V165h1V166h1V165h1V165h1V165h1V166h1V165h1V165h1V165h1V166h1V166h1V166h1V166h1V166h1V166h1V166h1V166h1V166h1V166h1V166h1V165h1V166h1V166h1V165h1V166h1V165h1V165h1V166h1V166h1V165h1V165h1V166h1V165h1V166h1V166h1V165h1V166h1V166h1V165h1V166h1V165h1V165h1V165h1V166h1V163h1V162h1V159h1V158h1V157h1V154h1V154h1V152h1V150h1V150h1V148h1V149h1V148h1V144h1V146h1V143h1V141h1V142h1V142h1V143h1V142h1V142h1V142h1V136h1V139h1V140h1V137h1V140h1V139h1V137h1V139h1V137h1V137h1V135h1V138h1V137h1V134h1V137h1V137h1V135h1V137h1V137h1V136h1V138h1V135h1V136h1V137h1V134h1V136h1V134h1V137h1V136h1V134h1V136h1V135h1V134h1V136h1V136h1V134h1V136h1V137h1V135h1V135h1V134h1V135h1V134h1V136h1V135h1V136h1V136h1V134h1V134h1V134h1V135h1V136h1V134h1V134h1V135h1V136h1V134h1V132h1V133h1V133h1V136h1V135h1V135h1V136h1V135h1V134h1V135h1V136h1V135h1V135h1V133h1V133h1V135h1V135h1V132h1V134h1V134h1V133h1V133h1V135h1V135h1V134h1V135h1V136h1V136h1V136h1V133h1V133h1V135h1V133h1V134h1V135h1V134h1V134h1V134h1V136h1V133h1V135h1V134h1V136h1V133h1V136h1V134h1V134h1V135h1V134h1V134h1V136h1V133h1V134h1V134h1V134h1V135h1V136h1V134h1V136h1V136h1V136h1V135h1V135h1V135h1V133h1V134h1V136h1V138h1V140h1V143h1V145h1V147h1V147h1V150h1V151h1V153h1V155h1V153h1V156h1V157h1V158h1V155h1V158h1V159h1V159h1V160h1V160h1V162h1V161h1V162h1V161h1V162h1V163h1V163h1V163h1V163h1V163h1V164h1V164h1V164h1V163h1V164h1V163h1V165h1V165h1V165h1V166h1V165h1V165h1V165h1V166h1V165h1V165h1V166h1V165h1V166h1V165h1V165h1V164h1V164h1V165h1V166h1V165h1V165h1V166h1V166h1V166h1V165h1V166h1V165h1V166h1V165h1V165h1V165h1V165h1V166h1V165h1V163h1V162h1V165h1V165h1V166h1V165h1V165h1V165h1V166h1V165h1V165h1V166h1V166h1V165h1V165h1V165h1V165h1V165h1V165h1V166h1V166h1V165h1V166h1V165h1V165h1V166h1V165h1V165h1V165h1V166h1V165h1V162h1V166h1V166h1V166h1V166h1V165h1V136h1V136h1V132h1V133h1V136h1V133h1V133h1V136h1V133h1V134h1V134h1V133h1V133h1V132h1V135h1V133h1V133h1V134h1V133h1V135h1V135h1V133h1V135h1V136h1V136h1V133h1V135h1V135h1V135h1V136h1V134h1V132h1V136h1V133h1V133h1V134h1V133h1V136h1V133h1V134h1V134h1V132h1V136h1V134h1V131h1V135h1V136h1V134h1V135h1V133h1V135h1V135h1V136h1V133h1V135h1V133h1V134h1V135h1V133h1V133h1V134h1V140h1V152h1V165h1V170h1V170h1V171h1V171h1V170h1V171h1V170h1V170h1V170h1V170h1V171h1V172h1V171h1V171h1V170h1V171h1V171h1V172h1V171h1V171h1V170h1V170h1V170h1V172h1V172h1V171h1V171h1V170h1V171h1V171h1V172h1V170h1V170h1V171h1V170h1V171h1V171h1V171h1V172h1V170h1V171h1V172h1V171h1V172h1V172h1V172h1V171h1V170h1V171h1V171h1V170h1V171h1V172h1V171h1V171h1V172h1V170h1V169h1V170h1V171h1V172h1V171h1V171h1V172h1V172h1V171h1V171h1V172h1V169h1V171h1V172h1V172h1V172h1V171h1V170h1V171h1V172h1V171h1V169h1V168h1V170h1V172h1V171h1V170h1V170h1V170h1V170h1V170h1V172h1V172h1V171h1V170h1V171h1V171h1V171h1V172h1V170h1V171h1V172h1V171h1V171h1V171h1V171h1V171h1V171h1V171h1V171h1V171h1V171h1V170h1V171h1V172h1V172h1V172h1V171h1V170h1V171h1V170h1V170h1V171h1V171h1V172h1V171h1V172h1V172h1V172h1V171h1V170h1V172h1V172h1V171h1V171h1V170h1V170h1V170h1V171h1V172h1V171h1V170h1V171h1V171h1V171h1V170h1V172h1V171h1V170h1V171h1V171h1V171h1V170h1V172h1V172h1V171h1V171h1V171h1V172h1V172h1V171h1V171h1V170h1V171h1V171h1V170h1V171h1V171h1V172h1V172h1V170h1V170h1V171h1V172h1V170h1V172h1V171h1V170h1V172h1V171h1V171h1V171h1V169h1V171h1V172h1V172h1V171h1V171h1V170h1V170h1V170h1V170h1V171h1V171h1V171h1V172h1V171h1V171h1V171h1V171h1V168h1V170h1V171h1V172h1V171h1V171h1V171h1V171h1V171h1V171h1V172h1V170h1V172h1V170h1V171h1V171h1V170h1V171h1V171h1V171h1V170h1V171h1V171h1V171h1V170h1V170h1V171h1V172h1V171h1V171h1V172h1V172h1V172h1V171h1V170h1V172h1V170h1V171h1V170h1V171h1V172h1V171h1V170h1V172h1V170h1V171h1V171h1V171h1V170h1V170h1V172h1V170h1V170h1V171h1V171h1V171h1V172h1V171h1V171h1V170h1V170h1V171h1V170h1V171h1V170h1V172h1V171h1V171h1V172h1V170h1V170h1V171h1V228h-1V228h-1V228h-1V228h-1V227h-1V227h-1V228h-1V227h-1V227h-1V227h-1V228h-1V228h-1V227h-1V228h-1V227h-1V228h-1V227h-1V227h-1V227h-1V227h-1V228h-1V227h-1V227h-1V228h-1V228h-1V228h-1V227h-1V228h-1V228h-1V227h-1V228h-1V227h-1V228h-1V228h-1V227h-1V227h-1V228h-1V228h-1V228h-1V228h-1V227h-1V228h-1V227h-1V228h-1V227h-1V229h-1V228h-1V228h-1V227h-1V228h-1V228h-1V228h-1V227h-1V227h-1V227h-1V228h-1V228h-1V230h-1V227h-1V230h-1V228h-1V227h-1V228h-1V228h-1V227h-1V228h-1V228h-1V228h-1V228h-1V227h-1V228h-1V227h-1V227h-1V227h-1V228h-1V227h-1V228h-1V227h-1V228h-1V227h-1V227h-1V228h-1V227h-1V228h-1V227h-1V227h-1V227h-1V228h-1V227h-1V228h-1V227h-1V228h-1V228h-1V227h-1V227h-1V227h-1V227h-1V227h-1V228h-1V228h-1V228h-1V227h-1V228h-1V227h-1V228h-1V228h-1V228h-1V228h-1V228h-1V227h-1V227h-1V228h-1V227h-1V227h-1V227h-1V228h-1V228h-1V228h-1V228h-1V228h-1V228h-1V227h-1V228h-1V227h-1V228h-1V228h-1V227h-1V228h-1V227h-1V228h-1V228h-1V227h-1V228h-1V227h-1V228h-1V228h-1V227h-1V228h-1V228h-1V228h-1V228h-1V227h-1V227h-1V227h-1V228h-1V227h-1V228h-1V227h-1V227h-1V228h-1V229h-1V227h-1V228h-1V227h-1V227h-1V227h-1V228h-1V227h-1V228h-1V228h-1V227h-1V228h-1V227h-1V228h-1V228h-1V227h-1V228h-1V227h-1V227h-1V227h-1V228h-1V227h-1V227h-1V230h-1V228h-1V228h-1V227h-1V227h-1V228h-1V227h-1V227h-1V228h-1V228h-1V228h-1V228h-1V228h-1V228h-1V228h-1V227h-1V227h-1V228h-1V227h-1V227h-1V227h-1V227h-1V228h-1V227h-1V227h-1V227h-1V228h-1V228h-1V227h-1V227h-1V228h-1V228h-1V228h-1V227h-1V227h-1V228h-1V227h-1V227h-1V228h-1V227h-1V228h-1V227h-1V227h-1V227h-1V228h-1V227h-1V227h-1V227h-1V228h-1V227h-1V227h-1V228h-1V227h-1V227h-1V228h-1V228h-1V227h-1V227h-1V227h-1V227h-1V227h-1V227h-1V227h-1V227h-1V227h-1V228h-1V227h-1V227h-1V227h-1V227h-1V227h-1V228h-1V228h-1V227h-1V227h-1V228h-1V228h-1V228h-1V227h-1V227h-1V228h-1V228h-1V227h-1V227h-1V228h-1V227h-1V227h-1V228h-1V227h-1V228h-1V227h-1V228h-1V228h-1V227h-1V228h-1V227h-1V237h-1V255h-1V273h-1V280h-1V284h-1V282h-1V282h-1V282h-1V282h-1V283h-1V284h-1V282h-1V281h-1V281h-1V281h-1V284h-1V283h-1V284h-1V282h-1V285h-1V284h-1V285h-1V284h-1V283h-1V285h-1V282h-1V283h-1V282h-1V282h-1V284h-1V285h-1V284h-1V285h-1V286h-1V285h-1V286h-1V284h-1V283h-1V284h-1V283h-1V286h-1V285h-1V285h-1V283h-1V283h-1V284h-1V286h-1V285h-1V287h-1V286h-1V285h-1V283h-1V285h-1V283h-1V286h-1V286h-1V284h-1V286h-1V286h-1V286h-1V287h-1V287h-1V284h-1V287h-1V231h-1V233h-1V232h-1V231h-1V232h-1V231h-1V233h-1V232h-1V233h-1V233h-1V233h-1V231h-1V233h-1V232h-1V231h-1V231h-1V232h-1V232h-1V232h-1V231h-1V233h-1V233h-1V231h-1V232h-1V232h-1V232h-1V231h-1V232h-1V232h-1V235h-1V232h-1V235h-1V233h-1V233h-1V232h-1V232h-1V232h-1V232h-1V233h-1V233h-1V232h-1V233h-1V233h-1V232h-1V233h-1V232h-1V231h-1V233h-1V232h-1V232h-1V231h-1V232h-1V233h-1V233h-1V236h-1V233h-1V232h-1V232h-1V233h-1V232h-1V233h-1V233h-1V233h-1V232h-1V232h-1V234h-1V233h-1V232h-1V234h-1V234h-1V235h-1V233h-1V234h-1V235h-1V233h-1V235h-1V235h-1V234h-1V236h-1V236h-1V235h-1V237h-1V240h-1V238h-1V237h-1V239h-1V240h-1V240h-1V240h-1V241h-1V243h-1V243h-1V245h-1V245h-1V246h-1V249h-1V250h-1V251h-1V253h-1V255h-1V257h-1V259h-1V262h-1V264h-1V268h-1V270h-1V274h-1V279h-1V281h-1V282h-1V279h-1V281h-1V282h-1V280h-1V281h-1V280h-1V279h-1V282h-1V281h-1V280h-1V282h-1V282h-1V281h-1V282h-1V282h-1V280h-1V281h-1V279h-1V282h-1V282h-1V281h-1V279h-1V282h-1V282h-1V281h-1V282h-1V279h-1V281h-1V282h-1V280h-1V280h-1V279h-1V282h-1V280h-1V283h-1V280h-1V279h-1V280h-1V282h-1V282h-1V279h-1V281h-1V280h-1V281h-1V282h-1V282h-1V279h-1V279h-1V279h-1V282h-1V282h-1V279h-1V282h-1V281h-1V281h-1V279h-1V281h-1V282h-1V279h-1V281h-1V280h-1V279h-1V282h-1V281h-1V279h-1V279h-1V282h-1V280h-1V282h-1V281h-1V282h-1V279h-1V279h-1V279h-1V280h-1V280h-1V281h-1V280h-1V282h-1V282h-1V280h-1V282h-1V278h-1V279h-1V280h-1V279h-1V281h-1V278h-1V281h-1V282h-1V281h-1V281h-1V281h-1V278h-1V280h-1V278h-1V280h-1V280h-1V278h-1V277h-1V280h-1V280h-1V282h-1V277h-1V278h-1V278h-1V276h-1V276h-1V277h-1V279h-1V279h-1V278h-1V278h-1V277h-1V274h-1V276h-1V274h-1V276h-1V273h-1V273h-1V272h-1V272h-1V273h-1V272h-1V271h-1V268h-1V268h-1V266h-1V265h-1V265h-1V262h-1V262h-1V259h-1V259h-1V257h-1V256h-1V254h-1V250h-1V248h-1V246h-1V244h-1V240h-1V238h-1V235h-1V232h-1V231h-1V231h-1V232h-1V231h-1V231h-1V233h-1V232h-1V233h-1V232h-1V232h-1V233h-1V231h-1V233h-1V231h-1V231h-1V232h-1V231h-1V231h-1V232h-1V232h-1V231h-1V233h-1V233h-1V232h-1V232h-1V232h-1V232h-1V232h-1V232h-1V232h-1V233h-1V232h-1V231h-1V231h-1V232h-1V233h-1V232h-1V232h-1V233h-1V231h-1V232h-1V232h-1V232h-1V232h-1V231h-1V232h-1V233h-1V231h-1V232h-1V232h-1V231h-1V233h-1V232h-1V232h-1V231h-1V232h-1V233h-1V233h-1V231h-1V232h-1V231h-1V233h-1V232h-1V232h-1V232h-1V232h-1V232h-1V232h-1V233h-1V231h-1V231h-1V231h-1V234h-1V233h-1V232h-1V232h-1V232h-1V232h-1V232h-1V231h-1V231h-1V233h-1V233h-1V232h-1V232h-1V231h-1V232h-1V232h-1V231h-1V232h-1V232h-1V232h-1V232h-1V232h-1V232h-1V232h-1V231h-1V233h-1V232h-1V232h-1V232h-1V231h-1V232h-1V233h-1V232h-1V232h-1V233h-1V231h-1V232h-1V232h-1V232h-1V232h-1V233h-1V232h-1V233h-1V231h-1V231h-1V232h-1V231h-1V233h-1V232h-1V233h-1V232h-1V232h-1V231h-1V232h-1V233h-1V233h-1V233h-1V233h-1V232h-1V231h-1V231h-1V231h-1V233h-1V231h-1V231h-1V232h-1V231h-1V232h-1V233h-1V231h-1V233h-1V234h-1V237h-1V241h-1V274h-1V290h-1V290h-1V290h-1V289h-1V292h-1V289h-1V290h-1V289h-1V289h-1V290h-1V290h-1V290h-1V289h-1V290h-1V289h-1V288h-1V291h-1V290h-1V287h-1V291h-1V288h-1V288h-1V287h-1V290h-1V288h-1V288h-1V286h-1V289h-1V288h-1V286h-1V289h-1V287h-1V289h-1V287h-1V286h-1V286h-1V288h-1V285h-1V285h-1V285h-1V287h-1V286h-1V286h-1V288h-1V287h-1V286h-1V285h-1V286h-1V285h-1V287h-1V286h-1V286h-1V285h-1V284h-1V284h-1V283h-1V284h-1V286h-1V284h-1V283h-1V285h-1V283h-1V284h-1V284h-1V282h-1V278h-1V276h-1V273h-1V253h-1V235h-1V226h-1V227h-1V225h-1V226h-1V226h-1V226h-1V227h-1V227h-1V225h-1V225h-1V227h-1V226h-1V225h-1V226h-1V227h-1V226h-1V226h-1V226h-1V225h-1V226h-1V226h-1V226h-1V226h-1V225h-1V225h-1V225h-1V225h-1V225h-1V226h-1V225h-1V225h-1V227h-1V226h-1V225h-1V227h-1V227h-1V225h-1V226h-1V227h-1Z" fill="#e0e0e0" shape-rendering="crispEdges"/><path d="M94 385V385h1V379h1V386h1V379h1V378h1V382h1V379h1V380h1V379h1V382h1V378h1V381h1V378h1V379h1V378h1V382h1V379h1V383h1V380h1V386h1V383h1V375h1V379h1V385h1V381h1V385h1V380h1V380h1V386h1V382h1V378h1V379h1V380h1V381h1V386h1V382h1V386h1V381h1V384h1V374h1V385h1V377h1V383h1V379h1V381h1V383h1V376h1V385h1V382h1V384h1V377h1V379h1V381h1V380h1V384h1V380h1V379h1V385h1V381h1V384h1V382h1V380h1V378h1V378h1V378h1V385h1V377h1V379h1V381h1V378h1V385h1V383h1V381h1V378h1V377h1V384h1V384h1V380h1V384h1V382h1V382h1V383h1V380h1V383h1V380h1V382h1V383h1V381h1V382h1V380h1V379h1V382h1V379h1V383h1V381h1V383h1V384h1V381h1V378h1V384h1V383h1V382h1V379h1V381h1V380h1V385h1V381h1V379h1V383h1V383h1V377h1V379h1V381h1V384h1V380h1V371h1V385h1V380h1V379h1V374h1V381h1V380h1V384h1V385h1V381h1V380h1V380h1V380h1V381h1V382h1V384h1V380h1V380h1V381h1V378h1V379h1V374h1V385h1V381h1V380h1V385h1V386h1V384h1V381h1V375h1V379h1V383h1V380h1V378h1V384h1V385h1V378h1V378h1V385h1V381h1V378h1V383h1V382h1V380h1V386h1V383h1V378h1V382h1V384h1V381h1V378h1V384h1V384h1V384h1V383h1V381h1V381h1V382h1V379h1V383h1V378h1V383h1V379h1V379h1V382h1V382h1V386h1V385h1V386h1V378h1V385h1V383h1V378h1V381h1V385h1V383h1V382h1V385h1V379h1V380h1V382h1V384h1V382h1V380h1V385h1V378h1V378h1V380h1V386h1V378h1V383h1V380h1V383h1V378h1V386h1V383h1V380h1V379h1V384h1V384h1V380h1V386h1V386h1V381h1V378h1V379h1V380h1V379h1V382h1V386h1V385h1V381h1V378h1V378h1V381h1V380h1V384h1V384h1V386h1V382h1V379h1V383h1V382h1V383h1V383h1V379h1V382h1V385h1V386h1V379h1V382h1V379h1V378h1V386h1V377h1V379h1V385h1V385h1V379h1V385h1V379h1V383h1V379h1V384h1V380h1V381h1V380h1V378h1V380h1V384h1V381h1V383h1V379h1V377h1V376h1V376h1V378h1V383h1V378h1V382h1V382h1V377h1V382h1V380h1V379h1V376h1V377h1V375h1V383h1V382h1V376h1V382h1V379h1V378h1V368h1V382h1V378h1V378h1V383h1V378h1V376h1V380h1V376h1V379h1V379h1V376h1V375h1V377h1V382h1V381h1V382h1V383h1V382h1V376h1V382h1V375h1V375h1V378h1V379h1V378h1V382h1V382h1V373h1V379h1V382h1V380h1V376h1V374h1V377h1V375h1V378h1V374h1V374h1V376h1V381h1V379h1V375h1V375h1V377h1V379h1V378h1V378h1V383h1V374h1V380h1V374h1V378h1V380h1V375h1V375h1V376h1V382h1V380h1V380h1V374h1V375h1V380h1V377h1V377h1V376h1V375h1V377h1V382h1V375h1V380h1V379h1V381h1V377h1V376h1V376h1V381h1V380h1V383h1V377h1V379h1V383h1V377h1V376h1V381h1V376h1V376h1V377h1V377h1V380h1V377h1V374h1V372h1V382h1V380h1V377h1V379h1V376h1V378h1V380h1V374h1V376h1V376h1V379h1V374h1V373h1V377h1V379h1V379h1V374h1V377h1V375h1V378h1V377h1V382h1V379h1V376h1V381h1V376h1V377h1V381h1V377h1V381h1V385h1V384h1V384h1V382h1V383h1V385h1V379h1V384h1V380h1V380h1V384h1V379h1V381h1V383h1V379h1V381h1V378h1V380h1V386h1V383h1V383h1V379h1V379h1V384h1V385h1V378h1V378h1V385h1V383h1V382h1V379h1V380h1V383h1V383h1V382h1V386h1V381h1V382h1V375h1V378h1V385h1V383h1V383h1V378h1V383h1V381h1V381h1V384h1V382h1V385h1V378h1V385h1V382h1V383h1V379h1V386h1V385h1V383h1V383h1V381h1V385h1V386h1V379h1V386h1V379h1V380h1V382h1V386h1V383h1V378h1V385h1V378h1V384h1V380h1V382h1V378h1V378h1V384h1V381h1V380h1V384h1V378h1V385h1V378h1V379h1V378h1V386h1V375h1V378h1V380h1V384h1V384h1V385h1V384h1V382h1V382h1V381h1V382h1V386h1V377h1V380h1V380h1V377h1V380h1V372h1V378h1V372h1V376h1V374h1V376h1V380h1V377h1V380h1V377h1V377h1V378h1V378h1V376h1V374h1V379h1V374h1V378h1V372h1V372h1V372h1V375h1V380h1V375h1V374h1V379h1V374h1V374h1V378h1V380h1V375h1V378h1V380h1V378h1V377h1V373h1V377h1V372h1V380h1V380h1V380h1V380h1V374h1V374h1V373h1V370h1V372h1V380h1V380h1V375h1V378h1V375h1V372h1V372h1V373h1V375h1V383h1V383h1V382h1V384h1V378h1V380h1V383h1V379h1V383h1V378h1V380h1V384h1V378h1V379h1V383h1V385h1V383h1V379h1V379h1V380h1V386h1V384h1V384h1V381h1V383h1V380h1V383h1V380h1V378h1V378h1V384h1V385h1V386h1V378h1V380h1V385h1V385h1V385h1V381h1V384h1V380h1V379h1V384h1V379h1V383h1V382h1V384h1V384h1V386h1V383h1V379h1V383h1V382h1V379h1V380h1V385h1V386h1V386h1V379h1V384h1V379h1V381h1V378h1V382h1V385h1V384h1V380h1V378h1V380h1V383h1V378h1V382h1V380h1V380h1V386h1V380h1V384h1V386h1V380h1V381h1V386h1V381h1V377h1V386h1V382h1V383h1V382h1V384h1V382h1V386h1V383h1V381h1V384h1V377h1V382h1V386h1V384h1V380h1V386h1V383h1V379h1V385h1V386h1V380h1V385h1V386h1V384h1V384h1V383h1V380h1V381h1V381h1V382h1V377h1V384h1V379h1V384h1V386h1V383h1V386h1V378h1V382h1V381h1V379h1V384h1V379h1V379h1V385h1V380h1V385h1V385h1V383h1V379h1V382h1V385h1V378h1V374h1V383h1V386h1V378h1V384h1V383h1V386h1V385h1V382h1V379h1V382h1V385h1V386h1V379h1V382h1V379h1V376h1V379h1V386h1V386h1V385h1V386h1V386h1V385h1V381h1V385h1V384h1V384h1V377h1V380h1V386h1V383h1V383h1V379h1V380h1V378h1V383h1V386h1V381h1V383h1V382h1V381h1V386h1V380h1V385h1V384h1V383h1V378h1V378h1V381h1V380h1V384h1V386h1V378h1V380h1V383h1V384h1V379h1V385h1V384h1V382h1V384h1V382h1V382h1V386h1V382h1V382h1V379h1V378h1V382h1V380h1V385h1V377h1V381h1V381h1V382h1V378h1V379h1V386h1V385h1V382h1V382h1V384h1V381h1V380h1V379h1V386h1V380h1V379h1V379h1V386h1V379h1V384h1V382h1V385h1V379h1V386h1V386h1V379h1V386h1V384h1V378h1V380h1V379h1V385h1V382h1V379h1V386h1V384h1V383h1V380h1V380h1V380h1V380h1V385h1V380h1V384h1V380h1V385h1V385h1V383h1V382h1V380h1V380h1V378h1V385h1V383h1V381h1V379h1V386h1V381h1V379h1V385h1V378h1V384h1V386h1V556h-1V553h-1V553h-1V557h-1V560h-1V559h-1V552h-1V556h-1V560h-1V559h-1V554h-1V555h-1V558h-1V560h-1V553h-1V558h-1V552h-1V559h-1V559h-1V555h-1V559h-1V560h-1V555h-1V560h-1V555h-1V559h-1V559h-1V552h-1V560h-1V552h-1V553h-1V557h-1V559h-1V559h-1V558h-1V560h-1V560h-1V557h-1V560h-1V554h-1V553h-1V557h-1V563h-1V559h-1V553h-1V560h-1V553h-1V553h-1V555h-1V552h-1V555h-1V556h-1V560h-1V560h-1V554h-1V552h-1V557h-1V560h-1V561h-1V552h-1V557h-1V559h-1V559h-1V560h-1V552h-1V553h-1V557h-1V552h-1V561h-1V557h-1V559h-1V554h-1V560h-1V558h-1V552h-1V556h-1V555h-1V559h-1V562h-1V558h-1V556h-1V555h-1V556h-1V560h-1V559h-1V557h-1V552h-1V553h-1V559h-1V559h-1V552h-1V552h-1V556h-1V554h-1V558h-1V552h-1V553h-1V559h-1V559h-1V557h-1V556h-1V557h-1V554h-1V560h-1V552h-1V557h-1V559h-1V554h-1V560h-1V558h-1V553h-1V556h-1V557h-1V552h-1V556h-1V557h-1V560h-1V554h-1V554h-1V554h-1V560h-1V555h-1V555h-1V554h-1V552h-1V555h-1V560h-1V560h-1V555h-1V553h-1V557h-1V560h-1V554h-1V557h-1V556h-1V560h-1V562h-1V554h-1V553h-1V557h-1V554h-1V562h-1V552h-1V563h-1V560h-1V560h-1V552h-1V556h-1V552h-1V555h-1V559h-1V552h-1V554h-1V557h-1V557h-1V552h-1V552h-1V557h-1V558h-1V559h-1V557h-1V552h-1V560h-1V559h-1V559h-1V558h-1V557h-1V558h-1V556h-1V560h-1V560h-1V552h-1V555h-1V552h-1V553h-1V560h-1V555h-1V555h-1V553h-1V553h-1V553h-1V557h-1V558h-1V560h-1V557h-1V560h-1V552h-1V552h-1V556h-1V558h-1V552h-1V561h-1V554h-1V558h-1V556h-1V560h-1V556h-1V552h-1V558h-1V557h-1V558h-1V559h-1V555h-1V559h-1V560h-1V553h-1V552h-1V552h-1V553h-1V553h-1V556h-1V559h-1V553h-1V556h-1V557h-1V560h-1V557h-1V560h-1V559h-1V555h-1V558h-1V559h-1V556h-1V552h-1V558h-1V552h-1V559h-1V555h-1V561h-1V554h-1V553h-1V553h-1V559h-1V553h-1V555h-1V558h-1V553h-1V552h-1V554h-1V555h-1V552h-1V552h-1V554h-1V554h-1V553h-1V564h-1V552h-1V558h-1V552h-1V553h-1V557h-1V555h-1V558h-1V552h-1V560h-1V554h-1V553h-1V560h-1V556h-1V555h-1V558h-1V556h-1V558h-1V566h-1V565h-1V557h-1V554h-1V557h-1V553h-1V556h-1V555h-1V559h-1V558h-1V561h-1V560h-1V561h-1V559h-1V556h-1V556h-1V557h-1V558h-1V562h-1V557h-1V559h-1V557h-1V559h-1V558h-1V559h-1V560h-1V562h-1V562h-1V558h-1V559h-1V558h-1V564h-1V564h-1V563h-1V556h-1V558h-1V560h-1V559h-1V558h-1V563h-1V564h-1V561h-1V561h-1V562h-1V562h-1V566h-1V564h-1V564h-1V558h-1V560h-1V556h-1V563h-1V556h-1V556h-1V564h-1V564h-1V559h-1V559h-1V560h-1V558h-1V560h-1V559h-1V564h-1V557h-1V559h-1V560h-1V563h-1V563h-1V562h-1V560h-1V551h-1V558h-1V558h-1V558h-1V552h-1V559h-1V552h-1V559h-1V559h-1V564h-1V554h-1V559h-1V551h-1V552h-1V556h-1V555h-1V551h-1V556h-1V553h-1V556h-1V555h-1V551h-1V556h-1V552h-1V558h-1V559h-1V558h-1V557h-1V555h-1V558h-1V551h-1V556h-1V552h-1V551h-1V558h-1V551h-1V556h-1V556h-1V557h-1V556h-1V553h-1V559h-1V551h-1V559h-1V555h-1V551h-1V553h-1V556h-1V552h-1V559h-1V552h-1V554h-1V555h-1V556h-1V555h-1V555h-1V552h-1V558h-1V553h-1V557h-1V552h-1V558h-1V556h-1V558h-1V558h-1V554h-1V553h-1V556h-1V552h-1V557h-1V553h-1V552h-1V557h-1V557h-1V553h-1V559h-1V552h-1V559h-1V558h-1V552h-1V559h-1V551h-1V559h-1V556h-1V554h-1V551h-1V559h-1V554h-1V551h-1V557h-1V556h-1V557h-1V554h-1V559h-1V557h-1V560h-1V555h-1V557h-1V555h-1V552h-1V560h-1V560h-1V565h-1V557h-1V558h-1V566h-1V556h-1V556h-1V555h-1V559h-1V555h-1V562h-1V559h-1V556h-1V554h-1V560h-1V558h-1V560h-1V556h-1V558h-1V553h-1V561h-1V553h-1V556h-1V556h-1V560h-1V558h-1V560h-1V556h-1V554h-1V559h-1V557h-1V557h-1V558h-1V561h-1V554h-1V556h-1V560h-1V556h-1V561h-1V558h-1V555h-1V554h-1V559h-1V558h-1V558h-1V557h-1V563h-1V561h-1V557h-1V558h-1V556h-1V556h-1V556h-1V553h-1V558h-1V553h-1V561h-1V558h-1V557h-1V558h-1V559h-1V559h-1V555h-1V555h-1V561h-1V558h-1V559h-1V554h-1V556h-1V560h-1V559h-1V558h-1V560h-1V555h-1V561h-1V554h-1V556h-1V553h-1V559h-1V560h-1V556h-1V560h-1V557h-1V566h-1V556h-1V559h-1V557h-1V560h-1V559h-1V555h-1V553h-1V558h-1V566h-1V558h-1V557h-1V557h-1V561h-1V554h-1V559h-1V563h-1V555h-1V554h-1V559h-1V559h-1V553h-1V561h-1V556h-1V561h-1V554h-1V556h-1V557h-1V555h-1V559h-1V556h-1V560h-1V556h-1V561h-1V553h-1V553h-1V560h-1V559h-1V555h-1V560h-1V552h-1V555h-1V557h-1V558h-1V554h-1V558h-1V554h-1V557h-1V561h-1V554h-1V560h-1V558h-1V557h-1V559h-1V556h-1V552h-1V560h-1V559h-1V561h-1V558h-1V553h-1V557h-1V560h-1V557h-1V554h-1V559h-1V553h-1V555h-1V555h-1V552h-1V555h-1V552h-1V554h-1V557h-1V555h-1V554h-1V556h-1V559h-1V553h-1V557h-1V559h-1V554h-1V552h-1V559h-1V558h-1V554h-1V558h-1V552h-1V559h-1V553h-1V559h-1V558h-1V558h-1V559h-1V556h-1V559h-1V551h-1V555h-1V559h-1V552h-1V564h-1V551h-1V551h-1V559h-1V555h-1V553h-1V557h-1V556h-1V558h-1V551h-1V553h-1V555h-1V556h-1V552h-1V559h-1V556h-1V555h-1V554h-1V556h-1V559h-1V555h-1V559h-1V558h-1V558h-1V551h-1V553h-1V555h-1V556h-1V556h-1V551h-1V561h-1V559h-1V556h-1V551h-1V558h-1V558h-1V551h-1V559h-1V556h-1V554h-1V556h-1V559h-1V552h-1V556h-1V552h-1V553h-1V557h-1V554h-1V558h-1V556h-1V558h-1V554h-1V555h-1V555h-1V554h-1V552h-1V553h-1V553h-1V558h-1V554h-1V552h-1V551h-1V555h-1V552h-1V555h-1V558h-1V554h-1V557h-1V556h-1V555h-1V555h-1V558h-1V551h-1V556h-1V553h-1V558h-1V559h-1V552h-1V558h-1V561h-1V552h-1V559h-1V553h-1V558h-1V553h-1V557h-1V555h-1V552h-1V554h-1V556h-1V555h-1V552h-1V553h-1V554h-1V556h-1V553h-1V557h-1V555h-1V553h-1V553h-1V564h-1V556h-1V557h-1V554h-1V555h-1V559h-1V557h-1V554h-1V553h-1V552h-1V558h-1V555h-1V553h-1V558h-1V551h-1V555h-1V554h-1V556h-1V558h-1V558h-1V558h-1V552h-1V555h-1V560h-1V560h-1V554h-1V555h-1V558h-1V554h-1V555h-1V558h-1V555h-1V553h-1V555h-1V553h-1V556h-1V555h-1V552h-1V556h-1V554h-1V553h-1V558h-1V553h-1V552h-1V556h-1V557h-1V557h-1V555h-1V552h-1V558h-1V553h-1V558h-1V562h-1V554h-1V557h-1V558h-1V557h-1V560h-1V561h-1V554h-1V554h-1V552h-1V552h-1V555h-1V556h-1V553h-1V561h-1V556h-1V559h-1V557h-1V552h-1V560h-1V552h-1V552h-1V554h-1V559h-1V563h-1V554h-1V559h-1V554h-1V557h-1V552h-1V554h-1V554h-1V554h-1V555h-1V558h-1V555h-1V556h-1V558h-1V557h-1V555h-1V557h-1V554h-1V555h-1V553h-1V555h-1V556h-1V559h-1V553h-1V561h-1V557h-1V553h-1V555h-1V554h-1V551h-1V553h-1V558h-1V559h-1V554h-1V560h-1V558h-1V559h-1V557h-1V553h-1V552h-1V555h-1V555h-1V558h-1V557h-1V552h-1V555h-1V558h-1V553h-1V560h-1V555h-1V555h-1Z" fill="#ff66bb" shape-rendering="crispEdges"/><path d="M94 439V439h1V440h1V440h1V439h1V439h1V440h1V441h1V441h1V439h1V440h1V440h1V440h1V440h1V440h1V439h1V439h1V439h1V440h1V439h1V441h1V440h1V441h1V440h1V441h1V441h1V439h1V438h1V440h1V441h1V441h1V441h1V439h1V436h1V441h1V440h1V439h1V441h1V440h1V439h1V433h1V416h1V399h1V395h1V392h1V391h1V391h1V387h1V387h1V390h1V389h1V390h1V390h1V391h1V390h1V389h1V389h1V391h1V389h1V389h1V387h1V387h1V388h1V390h1V389h1V388h1V391h1V388h1V389h1V388h1V390h1V389h1V390h1V391h1V391h1V389h1V388h1V391h1V391h1V391h1V391h1V388h1V390h1V388h1V388h1V388h1V387h1V388h1V389h1V389h1V390h1V389h1V388h1V388h1V391h1V388h1V391h1V388h1V389h1V391h1V390h1V389h1V390h1V389h1V391h1V391h1V389h1V388h1V388h1V388h1V402h1V426h1V430h1V432h1V434h1V431h1V434h1V433h1V433h1V434h1V434h1V434h1V435h1V434h1V434h1V434h1V434h1V435h1V434h1V435h1V434h1V433h1V433h1V435h1V434h1V433h1V434h1V433h1V434h1V433h1V434h1V434h1V434h1V434h1V435h1V435h1V434h1V434h1V434h1V433h1V435h1V433h1V434h1V434h1V432h1V433h1V435h1V434h1V432h1V434h1V434h1V435h1V434h1V434h1V434h1V434h1V433h1V434h1V431h1V435h1V433h1V435h1V435h1V434h1V434h1V434h1V434h1V434h1V434h1V433h1V434h1V434h1V430h1V435h1V433h1V434h1V434h1V435h1V434h1V435h1V435h1V434h1V433h1V435h1V433h1V434h1V432h1V434h1V433h1V433h1V434h1V434h1V434h1V434h1V434h1V435h1V435h1V434h1V433h1V433h1V433h1V435h1V434h1V435h1V433h1V430h1V433h1V435h1V434h1V433h1V434h1V435h1V434h1V434h1V434h1V435h1V434h1V433h1V433h1V435h1V433h1V435h1V435h1V434h1V434h1V434h1V435h1V434h1V434h1V433h1V433h1V433h1V434h1V433h1V434h1V434h1V435h1V434h1V433h1V434h1V433h1V435h1V434h1V433h1V434h1V434h1V434h1V434h1V432h1V429h1V428h1V426h1V423h1V421h1V418h1V419h1V416h1V416h1V413h1V414h1V410h1V409h1V409h1V407h1V409h1V405h1V407h1V406h1V405h1V405h1V405h1V401h1V401h1V401h1V401h1V403h1V402h1V399h1V402h1V400h1V399h1V399h1V398h1V401h1V400h1V398h1V397h1V399h1V398h1V399h1V397h1V398h1V398h1V400h1V398h1V397h1V396h1V399h1V398h1V400h1V396h1V398h1V396h1V397h1V396h1V398h1V398h1V398h1V399h1V398h1V398h1V399h1V398h1V396h1V396h1V394h1V395h1V399h1V399h1V398h1V397h1V398h1V395h1V396h1V396h1V399h1V397h1V396h1V397h1V399h1V397h1V396h1V396h1V395h1V398h1V396h1V395h1V397h1V396h1V398h1V397h1V396h1V398h1V399h1V397h1V395h1V397h1V398h1V396h1V397h1V398h1V397h1V399h1V395h1V398h1V398h1V399h1V395h1V399h1V396h1V397h1V399h1V397h1V395h1V397h1V399h1V398h1V399h1V397h1V397h1V397h1V397h1V399h1V395h1V398h1V395h1V398h1V397h1V398h1V397h1V397h1V398h1V396h1V395h1V398h1V396h1V397h1V395h1V399h1V399h1V398h1V399h1V398h1V396h1V398h1V401h1V404h1V407h1V409h1V411h1V413h1V414h1V418h1V419h1V420h1V421h1V423h1V423h1V425h1V425h1V427h1V427h1V427h1V427h1V428h1V429h1V428h1V429h1V431h1V429h1V427h1V430h1V431h1V431h1V432h1V432h1V432h1V433h1V433h1V433h1V432h1V434h1V433h1V434h1V432h1V433h1V434h1V434h1V432h1V434h1V433h1V434h1V433h1V433h1V434h1V431h1V433h1V433h1V434h1V433h1V434h1V434h1V434h1V435h1V434h1V433h1V434h1V433h1V433h1V433h1V434h1V433h1V434h1V434h1V434h1V433h1V434h1V434h1V435h1V435h1V434h1V435h1V434h1V434h1V435h1V434h1V434h1V433h1V434h1V434h1V433h1V433h1V435h1V434h1V433h1V435h1V435h1V433h1V431h1V433h1V434h1V433h1V434h1V433h1V434h1V434h1V434h1V434h1V433h1V433h1V433h1V433h1V390h1V389h1V392h1V389h1V391h1V389h1V392h1V388h1V388h1V391h1V391h1V389h1V391h1V390h1V392h1V392h1V390h1V390h1V388h1V390h1V389h1V391h1V389h1V390h1V392h1V391h1V390h1V390h1V389h1V391h1V392h1V392h1V392h1V392h1V389h1V392h1V389h1V390h1V391h1V391h1V392h1V389h1V391h1V390h1V390h1V389h1V390h1V389h1V392h1V391h1V393h1V391h1V392h1V391h1V392h1V393h1V391h1V390h1V391h1V392h1V389h1V399h1V415h1V432h1V439h1V439h1V439h1V440h1V440h1V439h1V438h1V439h1V440h1V439h1V438h1V439h1V439h1V440h1V440h1V439h1V439h1V436h1V440h1V439h1V440h1V438h1V440h1V438h1V438h1V438h1V439h1V440h1V440h1V440h1V439h1V440h1V440h1V438h1V439h1V439h1V440h1V439h1V439h1V439h1V439h1V439h1V440h1V438h1V439h1V438h1V439h1V438h1V438h1V439h1V438h1V439h1V440h1V440h1V439h1V439h1V438h1V439h1V439h1V438h1V439h1V439h1V440h1V440h1V439h1V440h1V438h1V438h1V439h1V440h1V440h1V440h1V440h1V438h1V440h1V440h1V438h1V439h1V439h1V438h1V439h1V440h1V440h1V439h1V439h1V440h1V438h1V439h1V438h1V439h1V439h1V439h1V438h1V438h1V438h1V439h1V438h1V435h1V438h1V440h1V440h1V439h1V440h1V440h1V439h1V438h1V438h1V438h1V440h1V439h1V439h1V440h1V440h1V439h1V440h1V439h1V439h1V438h1V440h1V439h1V438h1V439h1V437h1V440h1V438h1V438h1V438h1V438h1V438h1V440h1V438h1V440h1V440h1V439h1V438h1V438h1V439h1V436h1V439h1V438h1V438h1V439h1V439h1V439h1V439h1V440h1V440h1V439h1V439h1V439h1V439h1V439h1V439h1V438h1V438h1V438h1V440h1V438h1V440h1V440h1V440h1V440h1V438h1V439h1V438h1V439h1V440h1V438h1V440h1V439h1V439h1V438h1V439h1V438h1V439h1V438h1V438h1V440h1V436h1V439h1V440h1V439h1V438h1V438h1V438h1V440h1V439h1V439h1V439h1V438h1V439h1V438h1V438h1V439h1V440h1V438h1V440h1V439h1V440h1V438h1V440h1V440h1V440h1V439h1V439h1V439h1V439h1V439h1V440h1V439h1V438h1V440h1V438h1V440h1V439h1V438h1V438h1V440h1V438h1V438h1V440h1V438h1V440h1V440h1V438h1V438h1V440h1V440h1V440h1V440h1V438h1V439h1V438h1V438h1V439h1V439h1V439h1V440h1V439h1V438h1V439h1V438h1V439h1V438h1V438h1V438h1V439h1V438h1V439h1V438h1V439h1V438h1V438h1V439h1V439h1V439h1V440h1V439h1V440h1V439h1V440h1V440h1V439h1V439h1V438h1V439h1V439h1V440h1V439h1V498h-1V498h-1V498h-1V498h-1V497h-1V498h-1V499h-1V497h-1V500h-1V498h-1V498h-1V498h-1V497h-1V498h-1V498h-1V498h-1V497h-1V497h-1V498h-1V497h-1V497h-1V498h-1V498h-1V497h-1V498h-1V497h-1V498h-1V498h-1V497h-1V498h-1V497h-1V498h-1V497h-1V497h-1V497h-1V498h-1V498h-1V498h-1V497h-1V498h-1V497h-1V498h-1V498h-1V497h-1V497h-1V498h-1V498h-1V498h-1V498h-1V497h-1V498h-1V498h-1V497h-1V497h-1V498h-1V498h-1V497h-1V498h-1V497h-1V498h-1V497h-1V498h-1V497h-1V497h-1V497h-1V497h-1V498h-1V498h-1V497h-1V497h-1V497h-1V497h-1V497h-1V497h-1V497h-1V497h-1V497h-1V498h-1V497h-1V497h-1V497h-1V497h-1V497h-1V498h-1V498h-1V497h-1V498h-1V498h-1V498h-1V497h-1V498h-1V497h-1V498h-1V497h-1V498h-1V497h-1V498h-1V497h-1V497h-1V498h-1V498h-1V498h-1V498h-1V497h-1V497h-1V497h-1V502h-1V497h-1V498h-1V498h-1V497h-1V498h-1V498h-1V498h-1V498h-1V497h-1V498h-1V498h-1V497h-1V497h-1V498h-1V497h-1V497h-1V497h-1V498h-1V498h-1V498h-1V497h-1V498h-1V497h-1V497h-1V497h-1V498h-1V497h-1V497h-1V497h-1V498h-1V497h-1V497h-1V498h-1V498h-1V497h-1V497h-1V497h-1V498h-1V497h-1V498h-1V497h-1V497h-1V497h-1V498h-1V497h-1V498h-1V497h-1V497h-1V498h-1V497h-1V497h-1V497h-1V498h-1V498h-1V497h-1V498h-1V498h-1V498h-1V498h-1V498h-1V497h-1V498h-1V498h-1V497h-1V498h-1V498h-1V498h-1V498h-1V497h-1V498h-1V497h-1V498h-1V498h-1V497h-1V497h-1V497h-1V498h-1V497h-1V497h-1V497h-1V497h-1V497h-1V498h-1V500h-1V498h-1V497h-1V497h-1V497h-1V497h-1V497h-1V498h-1V498h-1V498h-1V497h-1V498h-1V498h-1V497h-1V498h-1V497h-1V497h-1V497h-1V497h-1V497h-1V501h-1V498h-1V498h-1V497h-1V497h-1V498h-1V497h-1V498h-1V498h-1V498h-1V497h-1V497h-1V497h-1V497h-1V497h-1V497h-1V498h-1V497h-1V497h-1V498h-1V497h-1V497h-1V497h-1V498h-1V498h-1V497h-1V497h-1V497h-1V497h-1V497h-1V498h-1V498h-1V498h-1V498h-1V498h-1V497h-1V498h-1V498h-1V497h-1V498h-1V497h-1V497h-1V498h-1V498h-1V498h-1V498h-1V497h-1V498h-1V497h-1V497h-1V497h-1V498h-1V497h-1V498h-1V497h-1V497h-1V497h-1V497h-1V498h-1V506h-1V521h-1V538h-1V544h-1V546h-1V543h-1V546h-1V543h-1V544h-1V546h-1V545h-1V546h-1V543h-1V544h-1V545h-1V545h-1V546h-1V544h-1V546h-1V546h-1V543h-1V544h-1V546h-1V546h-1V544h-1V544h-1V547h-1V545h-1V545h-1V545h-1V548h-1V545h-1V546h-1V544h-1V545h-1V545h-1V547h-1V546h-1V547h-1V547h-1V546h-1V547h-1V546h-1V547h-1V545h-1V548h-1V544h-1V547h-1V548h-1V544h-1V545h-1V546h-1V544h-1V548h-1V544h-1V545h-1V548h-1V546h-1V546h-1V546h-1V545h-1V545h-1V548h-1V545h-1V503h-1V503h-1V504h-1V504h-1V503h-1V504h-1V505h-1V507h-1V504h-1V505h-1V505h-1V504h-1V505h-1V504h-1V504h-1V504h-1V504h-1V504h-1V504h-1V505h-1V504h-1V504h-1V503h-1V505h-1V505h-1V503h-1V503h-1V505h-1V504h-1V504h-1V503h-1V504h-1V506h-1V504h-1V505h-1V504h-1V504h-1V505h-1V504h-1V505h-1V504h-1V503h-1V504h-1V506h-1V504h-1V503h-1V505h-1V507h-1V504h-1V506h-1V503h-1V504h-1V506h-1V504h-1V504h-1V504h-1V504h-1V505h-1V505h-1V503h-1V505h-1V505h-1V505h-1V504h-1V505h-1V505h-1V506h-1V505h-1V504h-1V504h-1V506h-1V506h-1V506h-1V505h-1V507h-1V506h-1V506h-1V507h-1V507h-1V506h-1V506h-1V508h-1V507h-1V509h-1V508h-1V509h-1V509h-1V510h-1V511h-1V511h-1V512h-1V513h-1V512h-1V513h-1V515h-1V515h-1V516h-1V518h-1V520h-1V521h-1V523h-1V524h-1V526h-1V528h-1V530h-1V533h-1V536h-1V539h-1V541h-1V540h-1V541h-1V539h-1V542h-1V539h-1V539h-1V540h-1V542h-1V538h-1V540h-1V540h-1V541h-1V538h-1V542h-1V541h-1V540h-1V538h-1V540h-1V540h-1V540h-1V539h-1V541h-1V542h-1V538h-1V540h-1V541h-1V539h-1V538h-1V540h-1V540h-1V542h-1V541h-1V539h-1V541h-1V542h-1V539h-1V540h-1V541h-1V541h-1V540h-1V539h-1V541h-1V540h-1V542h-1V541h-1V541h-1V542h-1V539h-1V540h-1V541h-1V539h-1V540h-1V538h-1V540h-1V540h-1V538h-1V541h-1V541h-1V538h-1V541h-1V538h-1V542h-1V538h-1V542h-1V540h-1V538h-1V539h-1V539h-1V540h-1V542h-1V540h-1V542h-1V540h-1V539h-1V539h-1V541h-1V542h-1V540h-1V538h-1V542h-1V541h-1V541h-1V538h-1V541h-1V539h-1V540h-1V540h-1V539h-1V542h-1V541h-1V538h-1V540h-1V539h-1V541h-1V540h-1V537h-1V543h-1V539h-1V538h-1V537h-1V540h-1V539h-1V540h-1V538h-1V539h-1V540h-1V539h-1V539h-1V539h-1V536h-1V539h-1V539h-1V538h-1V539h-1V536h-1V538h-1V537h-1V534h-1V535h-1V536h-1V533h-1V535h-1V535h-1V533h-1V531h-1V532h-1V531h-1V532h-1V530h-1V530h-1V529h-1V525h-1V525h-1V527h-1V524h-1V522h-1V521h-1V520h-1V518h-1V517h-1V515h-1V512h-1V510h-1V507h-1V506h-1V505h-1V503h-1V504h-1V503h-1V507h-1V504h-1V503h-1V505h-1V505h-1V504h-1V504h-1V504h-1V503h-1V503h-1V505h-1V503h-1V504h-1V504h-1V504h-1V507h-1V503h-1V504h-1V504h-1V508h-1V505h-1V503h-1V504h-1V504h-1V503h-1V505h-1V504h-1V505h-1V504h-1V505h-1V504h-1V504h-1V503h-1V505h-1V503h-1V504h-1V504h-1V504h-1V504h-1V504h-1V503h-1V503h-1V504h-1V504h-1V503h-1V503h-1V504h-1V504h-1V503h-1V508h-1V504h-1V504h-1V504h-1V504h-1V505h-1V505h-1V503h-1V503h-1V505h-1V504h-1V504h-1V503h-1V503h-1V504h-1V504h-1V504h-1V505h-1V504h-1V503h-1V504h-1V504h-1V503h-1V504h-1V504h-1V503h-1V504h-1V503h-1V504h-1V504h-1V505h-1V504h-1V506h-1V504h-1V504h-1V504h-1V504h-1V504h-1V504h-1V504h-1V504h-1V503h-1V503h-1V505h-1V505h-1V504h-1V504h-1V503h-1V504h-1V504h-1V504h-1V503h-1V504h-1V504h-1V505h-1V506h-1V503h-1V504h-1V504h-1V505h-1V504h-1V503h-1V505h-1V504h-1V505h-1V503h-1V504h-1V505h-1V503h-1V504h-1V504h-1V505h-1V503h-1V505h-1V505h-1V505h-1V505h-1V504h-1V504h-1V505h-1V503h-1V505h-1V505h-1V504h-1V505h-1V504h-1V505h-1V504h-1V504h-1V505h-1V504h-1V506h-1V508h-1V511h-1V535h-1V549h-1V549h-1V548h-1V549h-1V548h-1V548h-1V549h-1V548h-1V550h-1V547h-1V548h-1V547h-1V550h-1V547h-1V546h-1V546h-1V546h-1V548h-1V546h-1V549h-1V548h-1V549h-1V549h-1V547h-1V549h-1V546h-1V547h-1V547h-1V548h-1V547h-1V548h-1V548h-1V547h-1V547h-1V547h-1V549h-1V549h-1V547h-1V547h-1V548h-1V547h-1V545h-1V552h-1V546h-1V548h-1V546h-1V549h-1V548h-1V547h-1V548h-1V547h-1V548h-1V548h-1V546h-1V547h-1V546h-1V548h-1V548h-1V548h-1V547h-1V547h-1V546h-1V547h-1V546h-1V545h-1V542h-1V540h-1V536h-1V522h-1V504h-1V498h-1V497h-1V496h-1V497h-1V498h-1V498h-1V498h-1V498h-1V497h-1V498h-1V497h-1V497h-1V496h-1V496h-1V500h-1V496h-1V497h-1V497h-1V496h-1V497h-1V496h-1V497h-1V500h-1V497h-1V497h-1V496h-1V496h-1V496h-1V498h-1V497h-1V497h-1V497h-1V496h-1V498h-1V497h-1V496h-1V498h-1V496h-1V498h-1Z" fill="#8080ff" shape-rendering="crispEdges"/><path d="M94 662V662h1V661h1V659h1V660h1V661h1V661h1V658h1V658h1V656h1V658h1V658h1V656h1V659h1V660h1V660h1V658h1V656h1V662h1V661h1V659h1V658h1V656h1V659h1V659h1V658h1V660h1V658h1V659h1V659h1V660h1V658h1V660h1V660h1V657h1V660h1V656h1V659h1V659h1V655h1V659h1V657h1V657h1V660h1V660h1V658h1V656h1V656h1V658h1V656h1V656h1V658h1V655h1V656h1V660h1V659h1V660h1V650h1V656h1V661h1V660h1V656h1V659h1V661h1V657h1V660h1V655h1V658h1V655h1V656h1V655h1V660h1V657h1V657h1V658h1V660h1V660h1V658h1V661h1V661h1V656h1V655h1V660h1V655h1V657h1V659h1V659h1V660h1V660h1V659h1V657h1V656h1V661h1V659h1V658h1V655h1V657h1V657h1V658h1V659h1V658h1V656h1V657h1V657h1V656h1V656h1V658h1V655h1V659h1V656h1V657h1V661h1V660h1V661h1V655h1V661h1V661h1V658h1V658h1V656h1V660h1V658h1V657h1V661h1V662h1V657h1V659h1V659h1V656h1V657h1V657h1V660h1V661h1V657h1V658h1V657h1V660h1V657h1V660h1V658h1V660h1V661h1V660h1V661h1V657h1V656h1V661h1V662h1V656h1V657h1V659h1V659h1V659h1V658h1V659h1V658h1V661h1V660h1V661h1V659h1V658h1V653h1V661h1V658h1V659h1V658h1V661h1V661h1V653h1V661h1V659h1V658h1V661h1V657h1V658h1V662h1V659h1V659h1V660h1V660h1V656h1V658h1V657h1V658h1V662h1V659h1V658h1V660h1V659h1V656h1V659h1V655h1V659h1V658h1V660h1V662h1V652h1V658h1V661h1V658h1V659h1V662h1V658h1V658h1V662h1V657h1V660h1V657h1V658h1V658h1V660h1V657h1V661h1V662h1V660h1V657h1V657h1V661h1V656h1V661h1V658h1V658h1V657h1V658h1V659h1V660h1V660h1V658h1V658h1V659h1V657h1V661h1V660h1V656h1V659h1V661h1V658h1V659h1V658h1V658h1V657h1V661h1V661h1V658h1V662h1V658h1V659h1V656h1V657h1V656h1V660h1V660h1V660h1V659h1V656h1V661h1V657h1V658h1V659h1V659h1V661h1V661h1V658h1V659h1V659h1V659h1V655h1V657h1V658h1V652h1V656h1V656h1V655h1V660h1V654h1V658h1V657h1V657h1V656h1V655h1V657h1V649h1V658h1V652h1V653h1V654h1V659h1V651h1V656h1V654h1V659h1V655h1V656h1V655h1V656h1V656h1V658h1V657h1V657h1V657h1V656h1V654h1V658h1V654h1V655h1V658h1V654h1V655h1V656h1V654h1V654h1V654h1V654h1V654h1V657h1V657h1V649h1V656h1V659h1V654h1V657h1V657h1V649h1V650h1V656h1V654h1V654h1V654h1V656h1V658h1V657h1V653h1V657h1V659h1V654h1V658h1V655h1V657h1V654h1V654h1V655h1V655h1V654h1V654h1V659h1V649h1V653h1V659h1V657h1V656h1V654h1V655h1V655h1V657h1V657h1V657h1V659h1V659h1V657h1V658h1V656h1V655h1V658h1V655h1V659h1V655h1V655h1V654h1V656h1V655h1V654h1V656h1V659h1V656h1V653h1V656h1V657h1V657h1V655h1V654h1V658h1V658h1V655h1V658h1V656h1V657h1V654h1V654h1V656h1V656h1V655h1V656h1V648h1V653h1V659h1V655h1V657h1V654h1V655h1V654h1V654h1V658h1V653h1V657h1V658h1V656h1V658h1V657h1V657h1V656h1V660h1V660h1V657h1V656h1V659h1V657h1V655h1V651h1V659h1V659h1V659h1V658h1V659h1V659h1V657h1V660h1V661h1V657h1V659h1V661h1V661h1V656h1V660h1V656h1V659h1V659h1V661h1V656h1V657h1V650h1V659h1V659h1V660h1V658h1V658h1V657h1V662h1V658h1V652h1V656h1V656h1V656h1V659h1V656h1V656h1V661h1V657h1V658h1V659h1V662h1V657h1V658h1V660h1V657h1V655h1V659h1V661h1V657h1V656h1V660h1V657h1V659h1V660h1V659h1V660h1V657h1V657h1V656h1V657h1V657h1V657h1V658h1V659h1V659h1V659h1V657h1V659h1V660h1V661h1V661h1V657h1V661h1V657h1V662h1V661h1V660h1V656h1V661h1V660h1V658h1V658h1V658h1V657h1V660h1V661h1V661h1V660h1V662h1V658h1V656h1V658h1V659h1V654h1V654h1V651h1V643h1V651h1V654h1V652h1V651h1V651h1V653h1V655h1V654h1V652h1V653h1V652h1V652h1V655h1V652h1V653h1V645h1V650h1V655h1V651h1V651h1V654h1V653h1V651h1V651h1V652h1V652h1V651h1V651h1V652h1V650h1V650h1V646h1V655h1V653h1V654h1V653h1V654h1V650h1V652h1V653h1V653h1V650h1V645h1V647h1V651h1V655h1V653h1V655h1V655h1V651h1V655h1V651h1V651h1V653h1V654h1V655h1V652h1V660h1V657h1V660h1V656h1V660h1V661h1V661h1V659h1V660h1V657h1V657h1V656h1V658h1V657h1V661h1V659h1V660h1V660h1V660h1V658h1V655h1V657h1V657h1V660h1V660h1V657h1V660h1V659h1V661h1V660h1V658h1V662h1V659h1V661h1V662h1V661h1V661h1V659h1V660h1V658h1V660h1V656h1V661h1V661h1V657h1V659h1V661h1V658h1V659h1V659h1V661h1V657h1V659h1V660h1V659h1V659h1V659h1V657h1V661h1V658h1V658h1V660h1V662h1V659h1V657h1V659h1V659h1V661h1V659h1V659h1V661h1V659h1V660h1V661h1V661h1V656h1V657h1V660h1V654h1V656h1V658h1V656h1V660h1V661h1V662h1V658h1V657h1V657h1V660h1V659h1V660h1V651h1V656h1V660h1V659h1V659h1V656h1V661h1V656h1V657h1V660h1V656h1V657h1V660h1V661h1V659h1V657h1V656h1V652h1V661h1V658h1V658h1V659h1V660h1V656h1V660h1V660h1V655h1V660h1V654h1V659h1V658h1V657h1V661h1V656h1V660h1V657h1V654h1V657h1V657h1V661h1V659h1V656h1V656h1V661h1V662h1V660h1V661h1V657h1V657h1V661h1V652h1V660h1V658h1V661h1V659h1V658h1V660h1V657h1V661h1V658h1V660h1V659h1V661h1V661h1V661h1V660h1V657h1V658h1V656h1V659h1V659h1V656h1V660h1V657h1V661h1V658h1V659h1V656h1V658h1V658h1V658h1V660h1V660h1V660h1V657h1V657h1V656h1V656h1V662h1V661h1V657h1V658h1V658h1V658h1V657h1V658h1V659h1V659h1V659h1V661h1V656h1V659h1V657h1V660h1V661h1V660h1V658h1V658h1V660h1V662h1V657h1V658h1V653h1V660h1V657h1V659h1V658h1V660h1V660h1V660h1V658h1V657h1V662h1V659h1V657h1V660h1V657h1V660h1V656h1V661h1V661h1V659h1V659h1V659h1V660h1V661h1V655h1V661h1V661h1V660h1V662h1V662h1V658h1V657h1V654h1V662h1V662h1V661h1V662h1V658h1V658h1V659h1V659h1V656h1V658h1V658h1V656h1V657h1V661h1V654h1V658h1V656h1V661h1V661h1V660h1V661h1V662h1V661h1V656h1V662h1V653h1V661h1V661h1V660h1V661h1V657h1V659h1V658h1V657h1V661h1V657h1V817h-1V815h-1V819h-1V815h-1V819h-1V818h-1V820h-1V819h-1V817h-1V819h-1V820h-1V821h-1V823h-1V820h-1V817h-1V818h-1V824h-1V821h-1V818h-1V815h-1V815h-1V820h-1V821h-1V818h-1V816h-1V820h-1V817h-1V817h-1V819h-1V820h-1V819h-1V817h-1V819h-1V821h-1V820h-1V820h-1V821h-1V820h-1V825h-1V821h-1V818h-1V819h-1V817h-1V820h-1V816h-1V817h-1V820h-1V817h-1V821h-1V821h-1V820h-1V818h-1V818h-1V823h-1V816h-1V821h-1V817h-1V819h-1V817h-1V815h-1V818h-1V821h-1V821h-1V823h-1V819h-1V816h-1V816h-1V818h-1V817h-1V818h-1V818h-1V818h-1V821h-1V818h-1V819h-1V815h-1V821h-1V819h-1V818h-1V818h-1V817h-1V818h-1V816h-1V817h-1V819h-1V823h-1V815h-1V818h-1V818h-1V819h-1V817h-1V819h-1V821h-1V815h-1V818h-1V817h-1V815h-1V816h-1V821h-1V817h-1V815h-1V815h-1V819h-1V820h-1V817h-1V816h-1V825h-1V818h-1V816h-1V818h-1V821h-1V815h-1V820h-1V817h-1V820h-1V824h-1V818h-1V818h-1V819h-1V819h-1V817h-1V818h-1V815h-1V817h-1V816h-1V817h-1V820h-1V816h-1V817h-1V815h-1V815h-1V819h-1V815h-1V820h-1V816h-1V819h-1V818h-1V820h-1V815h-1V818h-1V817h-1V820h-1V818h-1V817h-1V819h-1V815h-1V817h-1V817h-1V815h-1V820h-1V820h-1V816h-1V821h-1V815h-1V819h-1V817h-1V817h-1V818h-1V821h-1V819h-1V817h-1V818h-1V824h-1V821h-1V819h-1V817h-1V816h-1V818h-1V815h-1V820h-1V821h-1V820h-1V815h-1V819h-1V817h-1V821h-1V818h-1V820h-1V820h-1V823h-1V820h-1V821h-1V819h-1V817h-1V817h-1V820h-1V819h-1V820h-1V816h-1V819h-1V817h-1V816h-1V815h-1V818h-1V820h-1V816h-1V819h-1V817h-1V820h-1V816h-1V816h-1V818h-1V818h-1V815h-1V816h-1V821h-1V818h-1V817h-1V819h-1V816h-1V821h-1V821h-1V818h-1V818h-1V820h-1V817h-1V816h-1V817h-1V816h-1V817h-1V820h-1V817h-1V816h-1V816h-1V821h-1V817h-1V818h-1V819h-1V821h-1V818h-1V820h-1V819h-1V818h-1V818h-1V823h-1V816h-1V816h-1V818h-1V822h-1V819h-1V820h-1V820h-1V816h-1V819h-1V818h-1V816h-1V817h-1V822h-1V817h-1V815h-1V820h-1V816h-1V817h-1V816h-1V820h-1V817h-1V820h-1V816h-1V818h-1V819h-1V816h-1V815h-1V818h-1V820h-1V816h-1V815h-1V821h-1V820h-1V816h-1V817h-1V819h-1V820h-1V823h-1V822h-1V824h-1V825h-1V824h-1V824h-1V823h-1V824h-1V825h-1V821h-1V822h-1V825h-1V826h-1V827h-1V830h-1V822h-1V824h-1V822h-1V826h-1V824h-1V825h-1V822h-1V827h-1V822h-1V822h-1V823h-1V824h-1V822h-1V822h-1V822h-1V824h-1V825h-1V823h-1V822h-1V825h-1V824h-1V825h-1V822h-1V827h-1V824h-1V822h-1V826h-1V827h-1V826h-1V822h-1V826h-1V824h-1V821h-1V821h-1V823h-1V825h-1V824h-1V824h-1V832h-1V827h-1V828h-1V825h-1V826h-1V826h-1V821h-1V823h-1V820h-1V818h-1V818h-1V816h-1V815h-1V818h-1V818h-1V820h-1V816h-1V821h-1V820h-1V821h-1V818h-1V816h-1V821h-1V819h-1V819h-1V818h-1V816h-1V818h-1V820h-1V818h-1V819h-1V821h-1V816h-1V818h-1V817h-1V819h-1V816h-1V820h-1V819h-1V816h-1V817h-1V815h-1V817h-1V821h-1V819h-1V819h-1V816h-1V818h-1V821h-1V816h-1V820h-1V819h-1V819h-1V816h-1V817h-1V826h-1V817h-1V818h-1V818h-1V819h-1V816h-1V816h-1V816h-1V817h-1V815h-1V820h-1V820h-1V820h-1V817h-1V817h-1V821h-1V820h-1V816h-1V821h-1V819h-1V815h-1V817h-1V818h-1V826h-1V817h-1V821h-1V817h-1V820h-1V818h-1V821h-1V820h-1V816h-1V816h-1V816h-1V821h-1V819h-1V820h-1V819h-1V823h-1V817h-1V820h-1V822h-1V821h-1V821h-1V817h-1V820h-1V823h-1V819h-1V817h-1V817h-1V823h-1V823h-1V817h-1V819h-1V822h-1V818h-1V822h-1V820h-1V828h-1V822h-1V824h-1V820h-1V824h-1V819h-1V822h-1V825h-1V822h-1V824h-1V822h-1V822h-1V819h-1V821h-1V823h-1V825h-1V826h-1V823h-1V821h-1V819h-1V821h-1V821h-1V823h-1V824h-1V823h-1V824h-1V821h-1V825h-1V825h-1V823h-1V823h-1V820h-1V823h-1V824h-1V819h-1V825h-1V822h-1V819h-1V820h-1V821h-1V822h-1V819h-1V824h-1V823h-1V823h-1V822h-1V822h-1V820h-1V820h-1V819h-1V820h-1V821h-1V821h-1V822h-1V821h-1V819h-1V819h-1V823h-1V824h-1V824h-1V819h-1V822h-1V824h-1V820h-1V820h-1V823h-1V819h-1V828h-1V823h-1V827h-1V824h-1V823h-1V823h-1V822h-1V822h-1V819h-1V819h-1V822h-1V821h-1V823h-1V824h-1V820h-1V824h-1V829h-1V827h-1V824h-1V822h-1V829h-1V820h-1V823h-1V821h-1V823h-1V825h-1V822h-1V824h-1V823h-1V824h-1V825h-1V825h-1V822h-1V823h-1V824h-1V821h-1V822h-1V822h-1V820h-1V822h-1V820h-1V823h-1V824h-1V820h-1V823h-1V821h-1V823h-1V819h-1V822h-1V824h-1V825h-1V819h-1V823h-1V819h-1V824h-1V827h-1V824h-1V823h-1V821h-1V820h-1V823h-1V822h-1V823h-1V822h-1V820h-1V821h-1V821h-1V822h-1V818h-1V823h-1V818h-1V823h-1V820h-1V818h-1V822h-1V819h-1V819h-1V822h-1V817h-1V817h-1V821h-1V821h-1V816h-1V815h-1V821h-1V818h-1V816h-1V816h-1V818h-1V816h-1V823h-1V815h-1V820h-1V817h-1V821h-1V822h-1V819h-1V820h-1V821h-1V818h-1V820h-1V818h-1V818h-1V816h-1V815h-1V817h-1V820h-1V816h-1V819h-1V815h-1V817h-1V820h-1V817h-1V821h-1V817h-1V816h-1V817h-1V819h-1V816h-1V821h-1V816h-1V820h-1V820h-1V816h-1V821h-1V820h-1V820h-1V819h-1V819h-1V817h-1V817h-1V820h-1V820h-1V821h-1V817h-1V816h-1V819h-1V820h-1V820h-1V819h-1V817h-1V816h-1V816h-1V819h-1V819h-1V817h-1V819h-1V817h-1V816h-1V815h-1V817h-1V820h-1V821h-1V816h-1V819h-1V820h-1V819h-1V817h-1V816h-1V821h-1V824h-1V823h-1V815h-1V819h-1V819h-1V817h-1V821h-1V817h-1V818h-1V817h-1V817h-1V821h-1V820h-1V821h-1V817h-1V819h-1V816h-1V818h-1V824h-1V816h-1V816h-1V822h-1V819h-1V816h-1V819h-1V821h-1V820h-1V815h-1V815h-1V818h-1V817h-1V817h-1V815h-1V820h-1V819h-1V818h-1V817h-1V821h-1V819h-1V820h-1V821h-1V817h-1V820h-1V819h-1V820h-1V825h-1V819h-1V821h-1V821h-1V819h-1V824h-1V816h-1V818h-1V820h-1V817h-1V816h-1V818h-1V817h-1V819h-1V821h-1V821h-1V821h-1V821h-1V819h-1V817h-1V823h-1V825h-1V820h-1V819h-1V818h-1V823h-1V817h-1V822h-1V817h-1V822h-1V821h-1V820h-1V818h-1V822h-1V819h-1V820h-1V820h-1V818h-1V819h-1V821h-1V826h-1V821h-1V821h-1V820h-1V821h-1V818h-1V822h-1V818h-1V819h-1V821h-1V819h-1V825h-1V822h-1V818h-1V817h-1V822h-1V818h-1V822h-1V821h-1V821h-1V821h-1V819h-1V817h-1V821h-1V823h-1V823h-1V821h-1V820h-1V821h-1V818h-1V821h-1V820h-1V822h-1V822h-1V823h-1V817h-1V821h-1V819h-1V821h-1V818h-1V819h-1V820h-1V823h-1V820h-1V821h-1V818h-1V824h-1V818h-1V818h-1V818h-1V820h-1V822h-1V820h-1V822h-1V821h-1V818h-1V820h-1V820h-1V820h-1V815h-1V815h-1V818h-1V819h-1V821h-1V817h-1V818h-1V817h-1V815h-1V816h-1V816h-1V819h-1V817h-1V816h-1V816h-1V818h-1V816h-1V815h-1V817h-1V820h-1V820h-1V818h-1V821h-1V820h-1V817h-1V816h-1V820h-1V817h-1V819h-1V815h-1V821h-1V817h-1V821h-1V819h-1V819h-1Z" fill="#00ffff" shape-rendering="crispEdges"/><path d="M94 712V712h1V712h1V708h1V710h1V712h1V711h1V711h1V711h1V711h1V711h1V710h1V711h1V711h1V708h1V710h1V711h1V711h1V710h1V710h1V712h1V711h1V710h1V712h1V711h1V712h1V710h1V711h1V710h1V711h1V711h1V712h1V710h1V711h1V711h1V712h1V711h1V712h1V711h1V711h1V703h1V687h1V671h1V670h1V665h1V664h1V664h1V662h1V664h1V664h1V661h1V663h1V664h1V663h1V664h1V664h1V660h1V663h1V662h1V662h1V658h1V664h1V661h1V662h1V658h1V663h1V662h1V661h1V661h1V661h1V661h1V662h1V661h1V662h1V661h1V663h1V663h1V661h1V661h1V662h1V663h1V663h1V664h1V662h1V663h1V661h1V662h1V663h1V664h1V661h1V664h1V663h1V664h1V662h1V661h1V661h1V663h1V662h1V662h1V664h1V661h1V661h1V663h1V661h1V662h1V664h1V663h1V664h1V664h1V664h1V674h1V699h1V701h1V704h1V706h1V706h1V707h1V707h1V705h1V706h1V707h1V706h1V706h1V705h1V706h1V706h1V705h1V704h1V706h1V706h1V707h1V706h1V706h1V706h1V705h1V702h1V705h1V706h1V705h1V707h1V705h1V707h1V706h1V706h1V706h1V707h1V705h1V707h1V706h1V707h1V705h1V706h1V706h1V707h1V706h1V706h1V706h1V706h1V706h1V707h1V705h1V705h1V706h1V706h1V705h1V705h1V706h1V707h1V707h1V706h1V706h1V707h1V707h1V706h1V707h1V705h1V707h1V705h1V705h1V706h1V707h1V705h1V706h1V705h1V706h1V705h1V705h1V705h1V706h1V707h1V705h1V705h1V706h1V707h1V705h1V706h1V706h1V706h1V705h1V705h1V706h1V707h1V706h1V706h1V705h1V707h1V707h1V706h1V705h1V706h1V706h1V706h1V705h1V705h1V706h1V706h1V706h1V707h1V706h1V706h1V706h1V706h1V707h1V705h1V707h1V707h1V707h1V706h1V706h1V706h1V702h1V705h1V707h1V707h1V706h1V706h1V707h1V706h1V705h1V705h1V704h1V706h1V706h1V706h1V706h1V706h1V706h1V707h1V706h1V706h1V705h1V706h1V706h1V705h1V706h1V706h1V706h1V707h1V704h1V702h1V699h1V697h1V695h1V695h1V692h1V690h1V690h1V687h1V686h1V685h1V685h1V684h1V684h1V681h1V683h1V679h1V678h1V677h1V678h1V676h1V677h1V678h1V677h1V674h1V678h1V677h1V674h1V675h1V673h1V674h1V675h1V675h1V672h1V673h1V673h1V673h1V673h1V674h1V672h1V672h1V672h1V672h1V672h1V672h1V671h1V671h1V672h1V671h1V671h1V673h1V671h1V673h1V672h1V673h1V671h1V668h1V673h1V669h1V671h1V670h1V669h1V670h1V670h1V671h1V671h1V672h1V671h1V672h1V671h1V673h1V669h1V670h1V671h1V672h1V669h1V673h1V672h1V670h1V673h1V672h1V672h1V670h1V673h1V673h1V671h1V672h1V670h1V670h1V671h1V669h1V673h1V671h1V672h1V669h1V673h1V672h1V669h1V673h1V673h1V670h1V670h1V669h1V673h1V667h1V673h1V671h1V670h1V673h1V672h1V670h1V671h1V670h1V671h1V672h1V672h1V671h1V672h1V673h1V670h1V669h1V671h1V670h1V671h1V672h1V670h1V672h1V670h1V671h1V672h1V672h1V673h1V670h1V669h1V672h1V669h1V670h1V671h1V670h1V672h1V671h1V672h1V672h1V670h1V670h1V672h1V676h1V677h1V681h1V684h1V685h1V686h1V689h1V690h1V692h1V694h1V694h1V694h1V695h1V697h1V697h1V698h1V698h1V700h1V701h1V702h1V701h1V702h1V701h1V702h1V703h1V702h1V704h1V704h1V704h1V704h1V703h1V705h1V705h1V705h1V705h1V703h1V705h1V705h1V705h1V704h1V706h1V705h1V705h1V705h1V706h1V706h1V704h1V705h1V705h1V706h1V706h1V706h1V705h1V706h1V705h1V706h1V706h1V706h1V707h1V707h1V705h1V706h1V705h1V706h1V706h1V706h1V706h1V705h1V707h1V707h1V706h1V705h1V705h1V706h1V706h1V706h1V706h1V705h1V706h1V706h1V705h1V706h1V706h1V706h1V706h1V707h1V705h1V707h1V706h1V707h1V705h1V705h1V706h1V705h1V707h1V707h1V706h1V706h1V706h1V705h1V706h1V705h1V706h1V706h1V705h1V707h1V707h1V662h1V662h1V662h1V662h1V661h1V661h1V661h1V662h1V661h1V664h1V665h1V665h1V661h1V661h1V664h1V661h1V664h1V665h1V663h1V664h1V664h1V663h1V662h1V665h1V665h1V662h1V663h1V662h1V664h1V663h1V664h1V663h1V663h1V664h1V664h1V664h1V664h1V662h1V663h1V662h1V665h1V664h1V665h1V663h1V664h1V662h1V661h1V665h1V662h1V664h1V661h1V664h1V665h1V663h1V664h1V663h1V662h1V664h1V666h1V663h1V665h1V672h1V687h1V703h1V710h1V712h1V712h1V712h1V712h1V711h1V711h1V711h1V711h1V711h1V711h1V710h1V710h1V710h1V710h1V710h1V711h1V711h1V711h1V710h1V711h1V711h1V711h1V711h1V711h1V712h1V710h1V711h1V708h1V711h1V712h1V711h1V711h1V711h1V712h1V712h1V710h1V711h1V711h1V710h1V709h1V711h1V710h1V712h1V711h1V710h1V712h1V711h1V712h1V712h1V711h1V712h1V711h1V712h1V711h1V711h1V712h1V711h1V712h1V712h1V711h1V711h1V711h1V711h1V711h1V711h1V707h1V711h1V710h1V710h1V711h1V711h1V710h1V711h1V711h1V710h1V711h1V710h1V712h1V711h1V711h1V711h1V711h1V711h1V710h1V710h1V711h1V711h1V711h1V711h1V711h1V710h1V711h1V712h1V711h1V711h1V711h1V708h1V710h1V710h1V710h1V711h1V712h1V711h1V712h1V710h1V712h1V710h1V710h1V711h1V712h1V712h1V710h1V710h1V710h1V711h1V711h1V710h1V711h1V710h1V711h1V712h1V710h1V712h1V712h1V711h1V711h1V710h1V711h1V711h1V711h1V712h1V711h1V708h1V711h1V711h1V712h1V712h1V711h1V711h1V711h1V708h1V711h1V711h1V711h1V711h1V710h1V710h1V710h1V711h1V711h1V710h1V710h1V711h1V711h1V712h1V712h1V711h1V711h1V712h1V712h1V711h1V711h1V712h1V711h1V710h1V710h1V710h1V712h1V712h1V712h1V712h1V710h1V711h1V712h1V711h1V711h1V712h1V711h1V711h1V710h1V710h1V711h1V710h1V711h1V712h1V711h1V712h1V710h1V712h1V711h1V711h1V712h1V712h1V711h1V711h1V711h1V712h1V710h1V712h1V710h1V712h1V711h1V709h1V711h1V711h1V711h1V710h1V711h1V711h1V712h1V712h1V711h1V710h1V711h1V711h1V711h1V712h1V710h1V711h1V710h1V711h1V709h1V712h1V712h1V711h1V710h1V711h1V711h1V712h1V711h1V712h1V711h1V711h1V711h1V712h1V711h1V711h1V711h1V711h1V709h1V710h1V710h1V711h1V711h1V710h1V711h1V711h1V711h1V710h1V711h1V711h1V711h1V711h1V710h1V710h1V711h1V712h1V711h1V710h1V711h1V711h1V709h1V710h1V712h1V712h1V711h1V711h1V712h1V769h-1V768h-1V768h-1V769h-1V767h-1V767h-1V767h-1V767h-1V767h-1V768h-1V768h-1V768h-1V767h-1V767h-1V767h-1V768h-1V769h-1V768h-1V772h-1V769h-1V770h-1V768h-1V769h-1V767h-1V768h-1V769h-1V769h-1V768h-1V768h-1V767h-1V767h-1V767h-1V767h-1V769h-1V767h-1V767h-1V769h-1V768h-1V768h-1V769h-1V768h-1V767h-1V768h-1V767h-1V767h-1V768h-1V769h-1V769h-1V768h-1V768h-1V768h-1V768h-1V768h-1V768h-1V768h-1V767h-1V768h-1V768h-1V767h-1V768h-1V769h-1V772h-1V770h-1V768h-1V768h-1V768h-1V767h-1V768h-1V768h-1V769h-1V769h-1V767h-1V768h-1V768h-1V768h-1V769h-1V768h-1V769h-1V767h-1V768h-1V769h-1V769h-1V768h-1V769h-1V768h-1V767h-1V767h-1V767h-1V769h-1V768h-1V769h-1V769h-1V768h-1V768h-1V769h-1V768h-1V768h-1V767h-1V769h-1V768h-1V769h-1V769h-1V767h-1V769h-1V767h-1V767h-1V767h-1V768h-1V768h-1V767h-1V768h-1V768h-1V768h-1V769h-1V767h-1V768h-1V768h-1V769h-1V768h-1V769h-1V769h-1V768h-1V768h-1V769h-1V768h-1V768h-1V769h-1V767h-1V767h-1V769h-1V769h-1V768h-1V768h-1V768h-1V769h-1V768h-1V768h-1V768h-1V767h-1V768h-1V768h-1V769h-1V768h-1V767h-1V768h-1V768h-1V767h-1V769h-1V769h-1V768h-1V768h-1V768h-1V768h-1V768h-1V767h-1V768h-1V768h-1V767h-1V767h-1V769h-1V769h-1V768h-1V768h-1V768h-1V769h-1V768h-1V767h-1V769h-1V767h-1V768h-1V768h-1V768h-1V768h-1V768h-1V767h-1V769h-1V768h-1V771h-1V769h-1V768h-1V767h-1V769h-1V768h-1V767h-1V769h-1V768h-1V768h-1V768h-1V768h-1V769h-1V769h-1V768h-1V771h-1V769h-1V768h-1V768h-1V768h-1V769h-1V767h-1V767h-1V769h-1V768h-1V768h-1V768h-1V768h-1V767h-1V768h-1V768h-1V768h-1V768h-1V767h-1V767h-1V768h-1V769h-1V768h-1V768h-1V768h-1V768h-1V767h-1V769h-1V767h-1V767h-1V768h-1V768h-1V770h-1V768h-1V769h-1V767h-1V769h-1V769h-1V769h-1V767h-1V768h-1V768h-1V768h-1V767h-1V768h-1V768h-1V768h-1V769h-1V769h-1V768h-1V768h-1V768h-1V769h-1V768h-1V767h-1V768h-1V769h-1V769h-1V768h-1V767h-1V768h-1V768h-1V769h-1V769h-1V768h-1V768h-1V769h-1V767h-1V767h-1V767h-1V771h-1V768h-1V769h-1V769h-1V767h-1V769h-1V768h-1V777h-1V791h-1V807h-1V813h-1V814h-1V816h-1V817h-1V815h-1V813h-1V814h-1V814h-1V815h-1V814h-1V814h-1V815h-1V815h-1V817h-1V816h-1V814h-1V815h-1V815h-1V817h-1V814h-1V816h-1V815h-1V816h-1V815h-1V815h-1V817h-1V815h-1V817h-1V817h-1V816h-1V815h-1V815h-1V817h-1V814h-1V817h-1V816h-1V814h-1V817h-1V816h-1V814h-1V814h-1V817h-1V815h-1V816h-1V817h-1V818h-1V815h-1V817h-1V817h-1V815h-1V816h-1V815h-1V815h-1V814h-1V814h-1V816h-1V815h-1V817h-1V818h-1V816h-1V818h-1V772h-1V773h-1V773h-1V772h-1V773h-1V772h-1V772h-1V772h-1V772h-1V773h-1V772h-1V772h-1V772h-1V773h-1V773h-1V772h-1V772h-1V772h-1V772h-1V772h-1V773h-1V773h-1V773h-1V772h-1V772h-1V773h-1V773h-1V773h-1V773h-1V772h-1V772h-1V773h-1V772h-1V773h-1V773h-1V773h-1V773h-1V772h-1V773h-1V773h-1V772h-1V773h-1V772h-1V773h-1V773h-1V772h-1V773h-1V772h-1V773h-1V772h-1V773h-1V773h-1V773h-1V774h-1V772h-1V773h-1V773h-1V773h-1V773h-1V773h-1V773h-1V774h-1V773h-1V773h-1V772h-1V774h-1V773h-1V774h-1V774h-1V777h-1V774h-1V773h-1V773h-1V774h-1V774h-1V774h-1V774h-1V775h-1V775h-1V780h-1V776h-1V777h-1V776h-1V776h-1V777h-1V778h-1V778h-1V781h-1V779h-1V780h-1V780h-1V781h-1V782h-1V783h-1V784h-1V785h-1V786h-1V787h-1V787h-1V789h-1V792h-1V793h-1V796h-1V798h-1V799h-1V801h-1V805h-1V808h-1V810h-1V810h-1V813h-1V808h-1V810h-1V810h-1V809h-1V811h-1V810h-1V812h-1V810h-1V810h-1V809h-1V810h-1V811h-1V809h-1V809h-1V812h-1V811h-1V812h-1V809h-1V810h-1V810h-1V811h-1V810h-1V811h-1V812h-1V809h-1V811h-1V812h-1V809h-1V810h-1V808h-1V810h-1V811h-1V811h-1V811h-1V810h-1V812h-1V812h-1V813h-1V808h-1V809h-1V812h-1V812h-1V809h-1V809h-1V810h-1V815h-1V811h-1V809h-1V812h-1V811h-1V810h-1V811h-1V812h-1V810h-1V809h-1V808h-1V810h-1V808h-1V809h-1V810h-1V809h-1V810h-1V809h-1V809h-1V811h-1V811h-1V811h-1V811h-1V808h-1V811h-1V809h-1V810h-1V808h-1V811h-1V809h-1V811h-1V811h-1V809h-1V810h-1V811h-1V812h-1V810h-1V808h-1V810h-1V811h-1V811h-1V811h-1V811h-1V808h-1V810h-1V810h-1V809h-1V811h-1V810h-1V811h-1V808h-1V811h-1V809h-1V809h-1V810h-1V808h-1V810h-1V807h-1V807h-1V807h-1V807h-1V809h-1V807h-1V806h-1V808h-1V809h-1V807h-1V805h-1V806h-1V804h-1V805h-1V807h-1V803h-1V805h-1V803h-1V804h-1V804h-1V803h-1V802h-1V800h-1V801h-1V798h-1V797h-1V797h-1V796h-1V794h-1V793h-1V792h-1V793h-1V791h-1V790h-1V787h-1V785h-1V784h-1V782h-1V778h-1V777h-1V775h-1V773h-1V772h-1V772h-1V772h-1V772h-1V775h-1V773h-1V773h-1V772h-1V772h-1V773h-1V773h-1V773h-1V773h-1V773h-1V772h-1V773h-1V773h-1V772h-1V773h-1V773h-1V772h-1V773h-1V773h-1V773h-1V772h-1V773h-1V773h-1V773h-1V772h-1V772h-1V772h-1V773h-1V773h-1V772h-1V772h-1V773h-1V773h-1V772h-1V772h-1V773h-1V772h-1V773h-1V772h-1V773h-1V772h-1V772h-1V772h-1V773h-1V773h-1V773h-1V773h-1V772h-1V772h-1V773h-1V773h-1V776h-1V772h-1V773h-1V773h-1V772h-1V772h-1V773h-1V772h-1V774h-1V773h-1V773h-1V772h-1V773h-1V772h-1V773h-1V773h-1V773h-1V772h-1V774h-1V773h-1V773h-1V773h-1V772h-1V773h-1V772h-1V772h-1V772h-1V772h-1V772h-1V773h-1V775h-1V773h-1V772h-1V772h-1V772h-1V772h-1V772h-1V772h-1V772h-1V772h-1V773h-1V773h-1V772h-1V773h-1V773h-1V772h-1V772h-1V776h-1V773h-1V772h-1V773h-1V772h-1V773h-1V772h-1V773h-1V772h-1V775h-1V772h-1V772h-1V773h-1V773h-1V772h-1V772h-1V773h-1V772h-1V773h-1V772h-1V772h-1V773h-1V772h-1V772h-1V772h-1V773h-1V773h-1V772h-1V772h-1V772h-1V773h-1V772h-1V772h-1V772h-1V773h-1V772h-1V773h-1V772h-1V774h-1V773h-1V772h-1V773h-1V777h-1V779h-1V805h-1V817h-1V818h-1V816h-1V819h-1V816h-1V816h-1V819h-1V819h-1V816h-1V817h-1V819h-1V818h-1V816h-1V817h-1V817h-1V817h-1V817h-1V818h-1V817h-1V818h-1V816h-1V818h-1V818h-1V816h-1V819h-1V819h-1V817h-1V818h-1V816h-1V818h-1V818h-1V818h-1V818h-1V819h-1V816h-1V818h-1V817h-1V817h-1V822h-1V816h-1V818h-1V816h-1V818h-1V819h-1V816h-1V817h-1V817h-1V818h-1V815h-1V818h-1V818h-1V818h-1V817h-1V819h-1V816h-1V816h-1V815h-1V818h-1V818h-1V818h-1V818h-1V815h-1V818h-1V816h-1V815h-1V813h-1V810h-1V807h-1V791h-1V777h-1V769h-1V768h-1V769h-1V768h-1V770h-1V769h-1V773h-1V769h-1V770h-1V769h-1V768h-1V770h-1V768h-1V769h-1V768h-1V770h-1V770h-1V769h-1V770h-1V773h-1V769h-1V770h-1V769h-1V770h-1V768h-1V770h-1V769h-1V769h-1V770h-1V772h-1V768h-1V768h-1V768h-1V770h-1V770h-1V768h-1V768h-1V769h-1V770h-1Z" fill="#ff0000" shape-rendering="crispEdges"/><rect x="93.5" y="86.5" width="845" height="223" fill="none" stroke="#7c7c7c" stroke-width="1"/><rect x="93.5" y="352.5" width="845" height="231" fill="none" stroke="#7c7c7c" stroke-width="1"/><rect x="93.5" y="627.5" width="845" height="223" fill="none" stroke="#7c7c7c" stroke-width="1"/><rect x="1050" y="86" width="846" height="362" fill="#000"/><path d="M1135.5 88V447M1219.5 88V447M1304.5 88V447M1388.5 88V447M1558.5 88V447M1642.5 88V447M1727.5 88V447M1811.5 88V447M1052 131.5H1895M1052 177.5H1895M1052 222.5H1895M1052 312.5H1895M1052 357.5H1895M1052 403.5H1895" stroke="#8a8a8a" stroke-width="1" stroke-dasharray="1 1" fill="none" shape-rendering="crispEdges"/><path d="M1473.5 87V447M1051 267.5H1895M1067.5 265V270M1084.5 265V270M1101.5 265V270M1118.5 265V270M1152.5 265V270M1169.5 265V270M1185.5 265V270M1202.5 265V270M1135.5 265V270M1236.5 265V270M1253.5 265V270M1270.5 265V270M1287.5 265V270M1219.5 265V270M1321.5 265V270M1338.5 265V270M1354.5 265V270M1371.5 265V270M1304.5 265V270M1405.5 265V270M1422.5 265V270M1439.5 265V270M1456.5 265V270M1388.5 265V270M1490.5 265V270M1507.5 265V270M1524.5 265V270M1541.5 265V270M1473.5 265V270M1575.5 265V270M1592.5 265V270M1608.5 265V270M1625.5 265V270M1558.5 265V270M1659.5 265V270M1676.5 265V270M1693.5 265V270M1710.5 265V270M1642.5 265V270M1744.5 265V270M1761.5 265V270M1777.5 265V270M1794.5 265V270M1727.5 265V270M1828.5 265V270M1845.5 265V270M1861.5 265V270M1878.5 265V270M1811.5 265V270M1471 95.5H1476M1471 104.5H1476M1471 113.5H1476M1471 122.5H1476M1471 140.5H1476M1471 149.5H1476M1471 159.5H1476M1471 168.5H1476M1471 131.5H1476M1471 186.5H1476M1471 195.5H1476M1471 204.5H1476M1471 213.5H1476M1471 177.5H1476M1471 231.5H1476M1471 240.5H1476M1471 249.5H1476M1471 258.5H1476M1471 222.5H1476M1471 276.5H1476M1471 285.5H1476M1471 294.5H1476M1471 303.5H1476M1471 267.5H1476M1471 321.5H1476M1471 330.5H1476M1471 339.5H1476M1471 348.5H1476M1471 312.5H1476M1471 366.5H1476M1471 375.5H1476M1471 385.5H1476M1471 394.5H1476M1471 357.5H1476M1471 412.5H1476M1471 421.5H1476M1471 429.5H1476M1471 438.5H1476M1471 403.5H1476" stroke="#747474" stroke-width="1" fill="none" shape-rendering="crispEdges"/><path d="M1067 153h1v1h-1zM1084 153h1v1h-1zM1101 153h1v1h-1zM1118 153h1v1h-1zM1135 153h1v1h-1zM1152 153h1v1h-1zM1169 153h1v1h-1zM1185 153h1v1h-1zM1202 153h1v1h-1zM1219 153h1v1h-1zM1236 153h1v1h-1zM1253 153h1v1h-1zM1270 153h1v1h-1zM1287 153h1v1h-1zM1304 153h1v1h-1zM1321 153h1v1h-1zM1338 153h1v1h-1zM1354 153h1v1h-1zM1371 153h1v1h-1zM1388 153h1v1h-1zM1405 153h1v1h-1zM1422 153h1v1h-1zM1439 153h1v1h-1zM1456 153h1v1h-1zM1473 153h1v1h-1zM1490 153h1v1h-1zM1507 153h1v1h-1zM1524 153h1v1h-1zM1541 153h1v1h-1zM1558 153h1v1h-1zM1575 153h1v1h-1zM1592 153h1v1h-1zM1608 153h1v1h-1zM1625 153h1v1h-1zM1642 153h1v1h-1zM1659 153h1v1h-1zM1676 153h1v1h-1zM1693 153h1v1h-1zM1710 153h1v1h-1zM1727 153h1v1h-1zM1744 153h1v1h-1zM1761 153h1v1h-1zM1777 153h1v1h-1zM1794 153h1v1h-1zM1811 153h1v1h-1zM1828 153h1v1h-1zM1845 153h1v1h-1zM1861 153h1v1h-1zM1878 153h1v1h-1zM1067 380h1v1h-1zM1084 380h1v1h-1zM1101 380h1v1h-1zM1118 380h1v1h-1zM1135 380h1v1h-1zM1152 380h1v1h-1zM1169 380h1v1h-1zM1185 380h1v1h-1zM1202 380h1v1h-1zM1219 380h1v1h-1zM1236 380h1v1h-1zM1253 380h1v1h-1zM1270 380h1v1h-1zM1287 380h1v1h-1zM1304 380h1v1h-1zM1321 380h1v1h-1zM1338 380h1v1h-1zM1354 380h1v1h-1zM1371 380h1v1h-1zM1388 380h1v1h-1zM1405 380h1v1h-1zM1422 380h1v1h-1zM1439 380h1v1h-1zM1456 380h1v1h-1zM1473 380h1v1h-1zM1490 380h1v1h-1zM1507 380h1v1h-1zM1524 380h1v1h-1zM1541 380h1v1h-1zM1558 380h1v1h-1zM1575 380h1v1h-1zM1592 380h1v1h-1zM1608 380h1v1h-1zM1625 380h1v1h-1zM1642 380h1v1h-1zM1659 380h1v1h-1zM1676 380h1v1h-1zM1693 380h1v1h-1zM1710 380h1v1h-1zM1727 380h1v1h-1zM1744 380h1v1h-1zM1761 380h1v1h-1zM1777 380h1v1h-1zM1794 380h1v1h-1zM1811 380h1v1h-1zM1828 380h1v1h-1zM1845 380h1v1h-1zM1861 380h1v1h-1zM1878 380h1v1h-1z" fill="#8a8a8a" shape-rendering="crispEdges"/><rect x="1050" y="490" width="846" height="362" fill="#000"/><path d="M1135.5 492V851M1219.5 492V851M1304.5 492V851M1388.5 492V851M1558.5 492V851M1642.5 492V851M1727.5 492V851M1811.5 492V851M1052 535.5H1895M1052 581.5H1895M1052 626.5H1895M1052 716.5H1895M1052 761.5H1895M1052 807.5H1895" stroke="#8a8a8a" stroke-width="1" stroke-dasharray="1 1" fill="none" shape-rendering="crispEdges"/><path d="M1473.5 491V851M1051 671.5H1895M1067.5 669V674M1084.5 669V674M1101.5 669V674M1118.5 669V674M1152.5 669V674M1169.5 669V674M1185.5 669V674M1202.5 669V674M1135.5 669V674M1236.5 669V674M1253.5 669V674M1270.5 669V674M1287.5 669V674M1219.5 669V674M1321.5 669V674M1338.5 669V674M1354.5 669V674M1371.5 669V674M1304.5 669V674M1405.5 669V674M1422.5 669V674M1439.5 669V674M1456.5 669V674M1388.5 669V674M1490.5 669V674M1507.5 669V674M1524.5 669V674M1541.5 669V674M1473.5 669V674M1575.5 669V674M1592.5 669V674M1608.5 669V674M1625.5 669V674M1558.5 669V674M1659.5 669V674M1676.5 669V674M1693.5 669V674M1710.5 669V674M1642.5 669V674M1744.5 669V674M1761.5 669V674M1777.5 669V674M1794.5 669V674M1727.5 669V674M1828.5 669V674M1845.5 669V674M1861.5 669V674M1878.5 669V674M1811.5 669V674M1471 499.5H1476M1471 508.5H1476M1471 517.5H1476M1471 526.5H1476M1471 544.5H1476M1471 553.5H1476M1471 563.5H1476M1471 572.5H1476M1471 535.5H1476M1471 590.5H1476M1471 599.5H1476M1471 608.5H1476M1471 617.5H1476M1471 581.5H1476M1471 635.5H1476M1471 644.5H1476M1471 653.5H1476M1471 662.5H1476M1471 626.5H1476M1471 680.5H1476M1471 689.5H1476M1471 698.5H1476M1471 707.5H1476M1471 671.5H1476M1471 725.5H1476M1471 734.5H1476M1471 743.5H1476M1471 752.5H1476M1471 716.5H1476M1471 770.5H1476M1471 779.5H1476M1471 789.5H1476M1471 798.5H1476M1471 761.5H1476M1471 816.5H1476M1471 825.5H1476M1471 833.5H1476M1471 842.5H1476M1471 807.5H1476" stroke="#747474" stroke-width="1" fill="none" shape-rendering="crispEdges"/><path d="M1067 557h1v1h-1zM1084 557h1v1h-1zM1101 557h1v1h-1zM1118 557h1v1h-1zM1135 557h1v1h-1zM1152 557h1v1h-1zM1169 557h1v1h-1zM1185 557h1v1h-1zM1202 557h1v1h-1zM1219 557h1v1h-1zM1236 557h1v1h-1zM1253 557h1v1h-1zM1270 557h1v1h-1zM1287 557h1v1h-1zM1304 557h1v1h-1zM1321 557h1v1h-1zM1338 557h1v1h-1zM1354 557h1v1h-1zM1371 557h1v1h-1zM1388 557h1v1h-1zM1405 557h1v1h-1zM1422 557h1v1h-1zM1439 557h1v1h-1zM1456 557h1v1h-1zM1473 557h1v1h-1zM1490 557h1v1h-1zM1507 557h1v1h-1zM1524 557h1v1h-1zM1541 557h1v1h-1zM1558 557h1v1h-1zM1575 557h1v1h-1zM1592 557h1v1h-1zM1608 557h1v1h-1zM1625 557h1v1h-1zM1642 557h1v1h-1zM1659 557h1v1h-1zM1676 557h1v1h-1zM1693 557h1v1h-1zM1710 557h1v1h-1zM1727 557h1v1h-1zM1744 557h1v1h-1zM1761 557h1v1h-1zM1777 557h1v1h-1zM1794 557h1v1h-1zM1811 557h1v1h-1zM1828 557h1v1h-1zM1845 557h1v1h-1zM1861 557h1v1h-1zM1878 557h1v1h-1zM1067 784h1v1h-1zM1084 784h1v1h-1zM1101 784h1v1h-1zM1118 784h1v1h-1zM1135 784h1v1h-1zM1152 784h1v1h-1zM1169 784h1v1h-1zM1185 784h1v1h-1zM1202 784h1v1h-1zM1219 784h1v1h-1zM1236 784h1v1h-1zM1253 784h1v1h-1zM1270 784h1v1h-1zM1287 784h1v1h-1zM1304 784h1v1h-1zM1321 784h1v1h-1zM1338 784h1v1h-1zM1354 784h1v1h-1zM1371 784h1v1h-1zM1388 784h1v1h-1zM1405 784h1v1h-1zM1422 784h1v1h-1zM1439 784h1v1h-1zM1456 784h1v1h-1zM1473 784h1v1h-1zM1490 784h1v1h-1zM1507 784h1v1h-1zM1524 784h1v1h-1zM1541 784h1v1h-1zM1558 784h1v1h-1zM1575 784h1v1h-1zM1592 784h1v1h-1zM1608 784h1v1h-1zM1625 784h1v1h-1zM1642 784h1v1h-1zM1659 784h1v1h-1zM1676 784h1v1h-1zM1693 784h1v1h-1zM1710 784h1v1h-1zM1727 784h1v1h-1zM1744 784h1v1h-1zM1761 784h1v1h-1zM1777 784h1v1h-1zM1794 784h1v1h-1zM1811 784h1v1h-1zM1828 784h1v1h-1zM1845 784h1v1h-1zM1861 784h1v1h-1zM1878 784h1v1h-1z" fill="#8a8a8a" shape-rendering="crispEdges"/></svg>
<svg style="position:absolute;left:0;top:0" width="1920" height="1080"><polyline points="1050.5,391.8 1051.5,391.7 1052.5,391.6 1053.5,391.5 1054.5,391.4 1055.5,391.3 1056.5,391.2 1057.5,391.1 1058.5,391 1059.5,390.9 1060.5,390.9 1061.4,390.8 1062.4,390.7 1063.4,390.6 1064.4,390.5 1065.4,390.4 1066.4,390.3 1067.4,390.2 1068.4,390.1 1069.4,390 1070.4,389.9 1071.4,389.8 1072.4,389.7 1073.4,389.6 1074.4,389.5 1075.4,389.4 1076.4,389.3 1077.4,389.2 1078.4,389.1 1079.4,389 1080.3,388.9 1081.3,388.9 1082.3,388.8 1083.3,388.7 1084.3,388.6 1085.3,388.5 1086.3,388.4 1087.3,388.3 1088.3,388.2 1089.3,388.1 1090.3,388 1090.3,339.2 1091.3,337.2 1092.3,335.2 1093.2,325.2 1094.1,315.2 1095,305.2 1095.8,301 1096.7,296.9 1097.7,293.6 1098.7,290.4 1099.7,287.1 1100.7,283.9 1101.6,280.6 1102.6,277.4 1103.6,274.1 1104.6,270.8 1105.6,267.6 1106.6,264.3 1107.6,261.1 1108.6,257.8 1109.6,254.6 1110.5,251.3 1111.5,248 1112.5,244.8 1113.5,241.5 1114.5,238.3 1115.5,235 1116.5,231.8 1117.5,228.5 1118.5,225.2 1119.4,222 1120.4,218.7 1121.4,215.5 1122.4,212.2 1123.4,209 1124.4,205.7 1125.4,202.4 1126.4,199.2 1127.4,195.9 1128.3,192.7 1129.3,189.4 1130.3,186.2 1131.3,182.9 1132.3,179.6 1133.3,176.4 1134.3,173.1 1135.3,169.9 1136.3,166.6 1137.2,163.4 1138.2,160.1 1139.2,156.8 1140.2,153.6 1141.2,150.3 1142.2,147.1 1143.2,143.8 1144.2,140.6 1145.2,137.3 1146.1,134 1147.1,130.8 1148.1,127.5 1149.1,124.3 1150.1,121 1151.1,117.8 1152.1,114.5 1153.1,111.2 1154.1,108 1155,104.7 1156,101.5 1157,98.2 1158,95 1159,91.7 1159.5,147.2 1160.3,149.9 1161.2,152.5 1162,155.2 1162.9,158.7 1163.9,162.1 1164.8,165.6 1165.8,169 1166.7,172.5 1167.5,173.2 1168.3,174 1169.2,174.8 1170,175.5 1171,175.4 1172,175.3 1173,175.2 1174,175.2 1175,175.1 1176,175 1177,174.9 1178,174.8 1179,174.8 1180,174.7 1181,174.6 1182,174.5 1183,173.9 1184,173.2 1185,172.6 1186,172 1187,171.9 1188,171.9 1189,171.8 1190,171.8 1191,171.7 1192,171.6 1193,171.6 1194,171.5 1195,171.4 1196,171.4 1197,171.3 1198,171.2 1199,171.2 1200,171.1 1201,171.1 1202,171 1203,170.8 1204,170.5 1205,170.2 1206,170 1207,169.8 1208,169.5 1209,169.5 1210,169.4 1211,169.4 1212,169.3 1213,169.3 1214,169.2 1215,169.2 1216,169.1 1217,169.1 1218,169 1219,169 1220,168.9 1221,168.9 1222,168.8 1223,168.8 1224,168.7 1225,168.7 1226,168.6 1227,168.6 1228,168.5 1229,168.5 1230,168.4 1231,168.4 1232,168.3 1233,168.3 1234,168.5 1235,168.8 1236,169 1237,169 1238,169 1239,168.9 1240,168.9 1241,168.9 1242,168.9 1243,168.9 1244,168.8 1245,168.8 1246,168.8 1247,168.8 1248,168.8 1249,168.7 1250,168.7 1251,168.7 1252,168.7 1253,168.6 1254,168.6 1255,168.6 1256,168.6 1257,168.6 1258,168.5 1259,168.5 1260,168.5 1261,168.5 1262,168.5 1263,168.4 1264,168.4 1265,168.4 1266,168.4 1267,168.4 1268,168.4 1269,168.3 1270,168.3 1271,168.3 1272,168.3 1273,168.3 1274,168.3 1275,168.2 1276,168.2 1277,168.2 1278,168.2 1279,168.2 1280,168.1 1281,168.1 1282,168.1 1283,168.1 1284,168.1 1285,168.1 1286,168 1287,168 1288,168 1289,168 1290,168 1291,167.9 1292,167.9 1293,167.9 1294,167.9 1295,167.9 1296,167.9 1297,167.8 1298,167.8 1299,167.8 1300,167.8 1301,167.8 1302,167.8 1303,167.7 1304,167.7 1305,167.7 1305.8,166 1306.7,164.3 1307.5,162.7 1308.3,161 1309.3,157.2 1310.3,153.3 1311.3,149.5 1312.3,145.6 1313.3,141.8 1314.3,139.3 1315.3,136.8 1316.3,134.3 1317.3,131.8 1318.3,129.3 1319.3,128 1320.2,126.6 1321.2,125.3 1322.1,124 1323.1,122.7 1324,121.3 1325,120 1326,119.2 1327,118.5 1328,117.8 1329,117 1330,116.2 1331,115.5 1332,114.8 1333,114 1334,113.2 1335,112.5 1336,112.3 1337,112.2 1338,112 1339,111.8 1340,111.7 1341,111.5 1342,111.3 1343,111.2 1344,111 1345,110.8 1346,110.7 1347,110.5 1348,110.3 1349,110.2 1350,110 1351,110 1352,110 1353,109.9 1354,109.9 1355,109.9 1356,109.9 1357,109.9 1358,109.8 1359,109.8 1360,109.8 1361,109.8 1362,109.7 1363,109.7 1364,109.7 1365,109.7 1366,109.7 1367,109.6 1368,109.6 1369,109.6 1370,109.6 1371,109.6 1372,109.5 1373,109.5 1374,109.5 1375,109.5 1376,109.4 1377,109.4 1378,109.4 1379,109.4 1380,109.4 1381,109.3 1382,109.3 1383,109.3 1384,109.3 1385,109.3 1386,109.3 1387,109.3 1388,109.3 1389,109.3 1390,109.3 1390.9,109.3 1391.9,109.3 1392.9,109.3 1393.9,109.3 1394.9,109.3 1395.9,109.3 1396.9,109.3 1397.9,109.3 1398.9,109.3 1399.9,109.3 1400.9,109.3 1401.9,109.3 1402.9,109.3 1403.9,109.3 1404.8,109.3 1405.8,109.3 1406.8,109.3 1407.8,109.3 1408.8,109.3 1409.8,109.3 1410.8,109.3 1411.8,109.3 1412.8,109.3 1413.8,109.3 1414.8,109.3 1415.8,109.3 1416.8,109.3 1417.8,109.3 1418.7,109.3 1419.7,109.3 1420.7,109.3 1421.7,109.3 1422.7,109.3 1423.7,109.3 1424.7,109.3 1425.7,109.3 1426.7,109.3 1427.7,109.3 1428.7,109.3 1429.7,109.3 1430.7,109.3 1431.7,109.3 1432.6,109.3 1433.6,109.3 1434.6,109.3 1435.6,109.3 1436.6,109.3 1437.6,109.3 1438.6,109.3 1439.6,109.3 1440.6,109.3 1441.6,109.3 1442.6,109.3 1443.6,109.3 1444.6,109.3 1445.6,109.3 1446.5,109.3 1447.5,109.3 1448.5,109.3 1449.5,109.3 1450.5,109.3 1451.5,109.3 1452.5,109.3 1453.5,109.3 1454.2,110.2 1455,111 1455.8,116 1456.7,121 1457.5,126 1458.3,129.1 1459.2,132.1 1460,135.2 1460.8,136.6 1461.7,138.1 1462.5,139.6 1463.3,141 1464.1,141.8 1465,142.7 1465.8,143.5 1466.7,144.4 1467.5,145.2 1468.5,146.3 1469.4,147.4 1470.4,148.5 1471.4,149.6 1472.3,150.7 1473.3,151.8 1474.2,152.5 1475.2,153.3 1476.1,154 1477,154.8 1478,155.5 1478.9,156.3 1479.8,157 1480.8,157.8 1481.7,158.5 1482.7,158.8 1483.7,159.2 1484.7,159.5 1485.7,159.8 1486.7,160.2 1487.7,160.5 1488.7,160.8 1489.7,161.1 1490.7,161.5 1491.7,161.8 1492.7,161.9 1493.7,162.1 1494.6,162.2 1495.6,162.4 1496.6,162.5 1497.6,162.7 1498.5,162.8 1499.5,163 1500.5,163.1 1501.5,163.3 1502.4,163.4 1503.4,163.6 1504.4,163.7 1505.4,163.9 1506.3,164 1507.3,164.2 1508.3,164.3 1509.3,164.3 1510.3,164.3 1511.3,164.4 1512.3,164.4 1513.3,164.4 1514.3,164.4 1515.3,164.5 1516.3,164.5 1517.3,164.5 1518.3,164.5 1519.2,164.6 1520.2,164.6 1521.2,164.6 1522.2,164.6 1523.2,164.7 1524.2,164.7 1525.2,164.7 1526.2,164.7 1527.2,164.8 1528.2,164.8 1529.2,164.8 1530,165.9 1530.8,167 1531.7,168 1532.5,169.1 1533.3,170.2 1534.1,170.5 1535,170.8 1535.8,171.2 1536.7,171.5 1537.5,171.8 1538.5,171.8 1539.4,171.7 1540.4,171.7 1541.4,171.7 1542.3,171.6 1543.3,171.6 1544.3,171.6 1545.2,171.5 1546.2,171.5 1547.2,171.5 1548.1,171.4 1549.1,171.4 1550.1,171.4 1551.1,171.4 1552,171.3 1553,171.3 1554,171.3 1554.9,171.2 1555.9,171.2 1556.9,171.2 1557.8,171.1 1558.8,171.1 1559.8,171.1 1560.7,171 1561.7,171 1562.3,171.7 1562.3,233 1563.2,233.7 1564,234.5 1564.9,235.2 1565.9,238.8 1566.9,242.5 1567.9,246.1 1568.9,249.7 1569.8,253.4 1570.8,257 1571.8,260.6 1572.8,264.2 1573.8,267.9 1574.8,271.5 1575.8,275.1 1576.8,278.8 1577.8,282.4 1578.8,286 1579.7,289.7 1580.7,293.3 1581.7,296.9 1582.7,300.6 1583.7,304.2 1584.7,307.8 1585.7,311.5 1586.7,315.1 1587.7,318.7 1588.7,322.3 1589.6,326 1590.6,329.6 1591.6,333.2 1592.6,336.9 1593.6,340.5 1594.6,344.1 1595.6,347.8 1596.6,351.4 1597.6,355 1598.5,358.7 1599.5,362.3 1600.5,365.9 1601.5,369.5 1602.5,373.2 1603.5,376.8 1604.5,380.4 1605.5,384.1 1606.5,387.7 1607.5,391.3 1608.4,395 1609.4,398.6 1610.4,402.2 1611.4,405.9 1612.4,409.5 1613.4,413.1 1614.4,416.8 1615.4,420.4 1616.4,424 1617.4,427.6 1618.3,431.3 1619.3,434.9 1620.3,438.5 1621.3,442.2 1622.3,445.8 1622.8,329.8 1623.4,341.5 1624,353.2 1624.9,363.9 1625.8,372.4 1626.6,380.9 1627.5,383.3 1628.3,385.6 1629.2,388 1630,390.3 1630.9,392.7 1631.7,391.7 1632.5,390.6 1633.4,389.6 1634.2,388.5 1635,387.5 1636,388.2 1637,388.9 1638,389.6 1639,390.3 1640,391 1641,391 1642,391 1643,391 1644,391 1645,391 1646,391 1647,391 1648,391 1649,391 1650,391 1651,391 1652,391 1653,391 1654,391 1655,391 1656,391 1657,391 1658,391 1659,391 1660,391 1661,391 1662,391 1663,391 1664,391 1665,391 1666,391 1667,391 1668,391 1669,391 1670,391 1671,391 1672,391 1673,391 1674,391 1675,391 1676,391 1677,391 1678,391 1679,391 1680,391 1681,391 1682,391 1683,391 1684,391 1685,391 1686,391 1687,391 1688,391 1689,391 1690,391 1691,391 1692,391 1693,391 1694,391 1695,391 1696,391 1697,391 1698,391 1699,391 1700,391 1701,391 1702,391 1703,391 1704,391 1705,391 1706,391 1707,391 1708,391 1709,391 1710,391 1711,391 1712,391 1713,391 1714,391 1715,391 1716,391 1717,391 1718,391 1719,391 1720,391 1721,391 1722,391 1723,391 1724,391 1725,391 1726,391 1727,391 1728,391 1729,391 1730,391 1731,391 1732,391 1733,391 1734,391 1735,391 1736,391 1737,391 1738,391 1739,391 1740,391 1741,391 1742,391 1743,391 1744,391 1745,391 1746,391 1747,391 1748,391 1749,391 1750,391 1751,391 1752,391 1753,391 1754,391 1755,391 1756,391 1757,391 1758,391 1759,391 1760,391 1761,391 1762,391 1763,391 1764,391 1765,391 1766,391 1767,391 1768,391 1769,391 1770,391 1771,391 1772,391 1773,391 1774,391 1775,391 1776,391 1777,391 1778,391 1779,391 1780,391 1781,391 1782,391 1783,391 1784,391 1785,391 1786,391 1787,391 1788,391 1789,391 1790,391 1791,391 1792,391 1793,391 1794,391 1795,391 1796,391 1797,391 1798,391 1799,391 1800,391 1801,391 1802,391 1803,391 1804,391 1805,391 1806,391 1807,391 1808,391 1809,391 1810,391 1811,391 1812,391 1813,391 1814,391 1815,391 1816,391 1817,391 1818,391 1819,391 1820,391 1821,391 1822,391 1823,391 1824,391 1825,391 1826,391 1827,391 1828,391 1829,391 1830,391 1831,391 1832,391 1833,391 1834,391 1835,391 1836,391 1837,391 1838,391 1839,391 1840,391 1841,391 1842,391 1843,391 1844,391 1845,391 1846,391 1847,391 1848,391 1849,391 1850,391 1851,391 1852,391 1853,391 1854,391 1855,391 1856,391 1857,391 1858,391 1859,391 1860,391 1861,391 1862,391 1863,391 1864,391 1865,391 1866,391 1867,391 1868,391 1869,391 1870,391 1871,391 1872,391 1873,391 1874,391 1875,391 1876,391 1877,391 1878,391 1879,391 1880,391 1881,391 1882,391 1883,391 1884,391 1885,391 1886,391 1887,391 1888,391 1889,391 1890,391 1891,391 1892,391 1893,391 1894,391 1895,391" fill="none" stroke="#00a000" stroke-width="1.6" stroke-linejoin="round" /><polygon points="1050.5,391.6 1051.5,391.2 1052.5,391.3 1053.5,391.2 1054.5,390.9 1055.5,391.2 1056.5,390.3 1057.5,391.1 1058.5,390.9 1059.5,390.9 1060.5,390.3 1061.4,390.7 1062.4,390.3 1063.4,390.1 1064.4,390.1 1065.4,390 1066.4,390 1067.4,389.7 1068.4,389.7 1069.4,390 1070.4,389.4 1071.4,389.4 1072.4,389.3 1073.4,389.4 1074.4,389.4 1075.4,389 1076.4,388.7 1077.4,388.8 1078.4,388.9 1079.4,388.5 1080.3,388.7 1081.3,388.5 1082.3,388.4 1083.3,388.5 1084.3,388 1085.3,388.1 1086.3,387.4 1087.3,387.7 1088.3,387.8 1089.3,387.6 1090.3,387.6 1090.3,338.6 1091.3,337.1 1092.3,334.7 1093.2,324.8 1094.1,314.8 1095,304.8 1095.8,300.8 1096.7,295.7 1097.7,292.7 1098.7,290.3 1099.7,286.9 1100.7,283.7 1101.6,280.5 1102.6,277.3 1103.6,274.1 1104.6,270.6 1105.6,267.2 1106.6,264 1107.6,261 1108.6,257.3 1109.6,254.1 1110.5,251.3 1111.5,247.6 1112.5,244.3 1113.5,241.3 1114.5,238.2 1115.5,234.8 1116.5,231.3 1117.5,227.9 1118.5,224.7 1119.4,221.8 1120.4,218.5 1121.4,215.2 1122.4,211.9 1123.4,208.6 1124.4,205.2 1125.4,202 1126.4,198.8 1127.4,195.4 1128.3,192.2 1129.3,189.2 1130.3,186.1 1131.3,182.3 1132.3,179.2 1133.3,176.2 1134.3,172.9 1135.3,169.3 1136.3,166 1137.2,163.1 1138.2,159.6 1139.2,156.4 1140.2,153.1 1141.2,150 1142.2,146.9 1143.2,143.4 1144.2,140 1145.2,137.1 1146.1,133.5 1147.1,130.5 1148.1,127.4 1149.1,124.1 1150.1,121 1151.1,117.3 1152.1,114.3 1153.1,110.7 1154.1,107.5 1155,104.7 1156,101 1157,97.6 1158,94.9 1159,91.3 1159.5,146.9 1160.3,149.8 1161.2,152.3 1162,155 1162.9,158.6 1163.9,161.5 1164.8,164.6 1165.8,168.6 1166.7,172.2 1167.5,172.1 1168.3,173.4 1169.2,174 1170,174.9 1171,174.9 1172,174.2 1173,175 1174,174 1175,174 1176,174.5 1177,173.8 1178,174.1 1179,173.1 1180,174 1181,173.5 1182,174 1183,173.3 1184,173.1 1185,171.7 1186,172 1187,171.5 1188,171.6 1189,171.8 1190,170.8 1191,171.7 1192,170.9 1193,171.1 1194,170.7 1195,170.7 1196,170.5 1197,170.4 1198,171 1199,170.7 1200,170 1201,170.6 1202,169.9 1203,169.5 1204,169.8 1205,168.5 1206,169.2 1207,168.9 1208,168.5 1209,169.2 1210,168.3 1211,169.3 1212,168.5 1213,168.5 1214,168.2 1215,168.3 1216,168.4 1217,168.1 1218,168.5 1219,168.2 1220,168.3 1221,167.3 1222,168.8 1223,168.5 1224,168.3 1225,167.8 1226,167.8 1227,167.6 1228,167.6 1229,167.6 1230,167.3 1231,167.8 1232,168 1233,168 1234,167.6 1235,167.2 1236,168.2 1237,168.3 1238,168.9 1239,167.8 1240,167.8 1241,168.3 1242,168.7 1243,168.6 1244,168.2 1245,168.7 1246,167.9 1247,168.3 1248,167.9 1249,167.5 1250,168.7 1251,168.1 1252,168.3 1253,167.6 1254,168.2 1255,168.1 1256,167.7 1257,168.1 1258,168.3 1259,167.5 1260,167.8 1261,167.5 1262,167.5 1263,167.6 1264,167.3 1265,167.9 1266,167.6 1267,168.3 1268,166.9 1269,167.8 1270,167.7 1271,167.3 1272,167.8 1273,167.3 1274,168 1275,168.1 1276,167.7 1277,167.3 1278,167.1 1279,168 1280,167.4 1281,167.4 1282,167.6 1283,167.5 1284,166.9 1285,167 1286,167.8 1287,167.5 1288,166.9 1289,167.7 1290,167.2 1291,167.2 1292,167 1293,167.5 1294,167 1295,167.4 1296,166.7 1297,167 1298,167.1 1299,166.9 1300,166.7 1301,167.7 1302,166.8 1303,166.6 1304,166.9 1305,167.2 1305.8,165.4 1306.7,164 1307.5,161.7 1308.3,160 1309.3,156.6 1310.3,152.9 1311.3,149 1312.3,144.6 1313.3,141 1314.3,138.8 1315.3,135.7 1316.3,134.3 1317.3,130.7 1318.3,128.7 1319.3,126.8 1320.2,126.2 1321.2,125 1322.1,123.3 1323.1,121.5 1324,121.3 1325,119.2 1326,118.6 1327,117.7 1328,117.3 1329,116.7 1330,115.7 1331,114.7 1332,114.6 1333,113.4 1334,112.5 1335,111.8 1336,111.2 1337,111.4 1338,111.4 1339,111.3 1340,111.6 1341,110.7 1342,110.9 1343,110.3 1344,110.5 1345,110.6 1346,109.5 1347,110 1348,110 1349,110 1350,109 1351,109.6 1352,108.8 1353,109.2 1354,108.9 1355,109.5 1356,108.9 1357,108.9 1358,108.9 1359,109.3 1360,109.3 1361,109.1 1362,109.4 1363,109.5 1364,109 1365,108.8 1366,109.5 1367,109.1 1368,108.6 1369,109.3 1370,109 1371,108.5 1372,109.1 1373,108.5 1374,108.8 1375,108.4 1376,108.6 1377,108.1 1378,108.2 1379,109.2 1380,108.3 1381,109.3 1382,109 1383,108.5 1384,109.2 1385,108.6 1386,108.9 1387,108.7 1388,109.1 1389,109 1390,108.7 1390.9,108.4 1391.9,108.6 1392.9,108.3 1393.9,108.2 1394.9,108.4 1395.9,108.3 1396.9,109 1397.9,107.8 1398.9,107.1 1399.9,108.9 1400.9,109.1 1401.9,108.6 1402.9,108.2 1403.9,108.7 1404.8,108.9 1405.8,108.3 1406.8,108.7 1407.8,108.4 1408.8,108.6 1409.8,108.8 1410.8,108.9 1411.8,108.4 1412.8,108.9 1413.8,107.4 1414.8,108.3 1415.8,108.3 1416.8,108.6 1417.8,108.3 1418.7,109.2 1419.7,108.6 1420.7,108.9 1421.7,109.1 1422.7,109 1423.7,108.7 1424.7,108.4 1425.7,108.9 1426.7,108.8 1427.7,109.2 1428.7,108.7 1429.7,108.3 1430.7,109.1 1431.7,108.3 1432.6,108.1 1433.6,109 1434.6,108.3 1435.6,108.6 1436.6,108.1 1437.6,109.2 1438.6,109.3 1439.6,109.2 1440.6,109.1 1441.6,108.5 1442.6,108.5 1443.6,109 1444.6,108.3 1445.6,108.8 1446.5,108.4 1447.5,108.8 1448.5,108.1 1449.5,108.1 1450.5,109.2 1451.5,108.9 1452.5,108.5 1453.5,108.1 1454.2,110 1455,110.7 1455.8,115.5 1456.7,120.8 1457.5,125.5 1458.3,128.5 1459.2,131.5 1460,134.8 1460.8,135.6 1461.7,137.3 1462.5,138.5 1463.3,140.8 1464.1,141.6 1465,142.7 1465.8,142.8 1466.7,143.2 1467.5,144.8 1468.5,146.3 1469.4,147.2 1470.4,147.6 1471.4,149.2 1472.3,150.4 1473.3,151 1474.2,151.3 1475.2,152.2 1476.1,153 1477,154.3 1478,155.2 1478.9,155.7 1479.8,156.2 1480.8,157.5 1481.7,158.4 1482.7,158.6 1483.7,158.4 1484.7,157.4 1485.7,158.7 1486.7,159.3 1487.7,159.5 1488.7,160.5 1489.7,161 1490.7,161.1 1491.7,161 1492.7,161.3 1493.7,161 1494.6,161 1495.6,161.6 1496.6,161.5 1497.6,161.8 1498.5,162 1499.5,162.6 1500.5,163 1501.5,162.5 1502.4,162.4 1503.4,162.8 1504.4,162.6 1505.4,162.8 1506.3,164 1507.3,164.1 1508.3,164.1 1509.3,164.2 1510.3,162.7 1511.3,164.3 1512.3,164.2 1513.3,164.3 1514.3,163.4 1515.3,163.4 1516.3,163.7 1517.3,164.2 1518.3,164.2 1519.2,164.4 1520.2,163.9 1521.2,163.7 1522.2,163.6 1523.2,163.9 1524.2,164.2 1525.2,164.6 1526.2,163.9 1527.2,164.2 1528.2,164.5 1529.2,163.6 1530,165.3 1530.8,166.4 1531.7,167 1532.5,167.9 1533.3,169.6 1534.1,169.4 1535,169.9 1535.8,170.7 1536.7,171.1 1537.5,170.8 1538.5,170.8 1539.4,171.4 1540.4,170.5 1541.4,170.7 1542.3,171.4 1543.3,171.4 1544.3,170.5 1545.2,171.1 1546.2,171.3 1547.2,170.9 1548.1,170.3 1549.1,170.3 1550.1,170.6 1551.1,170.5 1552,170.3 1553,170.1 1554,170.4 1554.9,171.1 1555.9,170.7 1556.9,170.2 1557.8,170.3 1558.8,171.1 1559.8,170.9 1560.7,171 1561.7,170.6 1562.3,171.1 1562.3,233 1563.2,233.5 1564,234.2 1564.9,234.7 1565.9,238.4 1566.9,242.3 1567.9,246 1568.9,249.5 1569.8,252.9 1570.8,256.5 1571.8,260.2 1572.8,264.2 1573.8,267.6 1574.8,271.3 1575.8,274.7 1576.8,278.2 1577.8,282.1 1578.8,285.7 1579.7,288.6 1580.7,292.7 1581.7,296.5 1582.7,300.2 1583.7,303.7 1584.7,307.3 1585.7,310.9 1586.7,314.9 1587.7,318.4 1588.7,322.3 1589.6,326 1590.6,329.6 1591.6,332.4 1592.6,336.6 1593.6,340.3 1594.6,344.1 1595.6,347.2 1596.6,351 1597.6,354.8 1598.5,358.3 1599.5,362.1 1600.5,365.9 1601.5,369.5 1602.5,373 1603.5,376 1604.5,380.4 1605.5,383.9 1606.5,387.7 1607.5,391.3 1608.4,394.6 1609.4,398.5 1610.4,401.7 1611.4,405.7 1612.4,409.2 1613.4,412.7 1614.4,416.7 1615.4,420 1616.4,423.9 1617.4,427.1 1618.3,430.7 1619.3,434.4 1620.3,438.2 1621.3,441.7 1622.3,445.6 1622.8,329.5 1623.4,340.9 1624,353.1 1624.9,363.7 1625.8,371.4 1626.6,380.3 1627.5,382.9 1628.3,385.2 1629.2,387.5 1630,390.3 1630.9,392.1 1631.7,391.1 1632.5,389.7 1633.4,389.1 1634.2,388.5 1635,387.4 1636,387.7 1637,388.6 1638,389 1639,389.7 1640,390.5 1641,390.9 1642,390.9 1643,390.5 1644,390.7 1645,390.6 1646,390.7 1647,390.9 1648,390.6 1649,390.6 1650,390.7 1651,390.8 1652,390.9 1653,390.3 1654,391 1655,391 1656,390.8 1657,391 1658,391 1659,390.5 1660,390.9 1661,390.7 1662,390.6 1663,390.7 1664,390.9 1665,390.6 1666,391 1667,390.9 1668,390.7 1669,390.7 1670,390.6 1671,390.9 1672,390.9 1673,390.8 1674,390.6 1675,390.6 1676,390.5 1677,390.7 1678,390.7 1679,390.8 1680,390.4 1681,390.8 1682,390.4 1683,390.6 1684,390.9 1685,390.6 1686,390.8 1687,390.6 1688,390.6 1689,390.6 1690,390.7 1691,390.5 1692,390.4 1693,390.6 1694,390.5 1695,390.1 1696,390.9 1697,390.8 1698,390.6 1699,390.9 1700,390.6 1701,390.7 1702,390.6 1703,390.6 1704,390.4 1705,390.9 1706,390.5 1707,390.8 1708,390.9 1709,391 1710,391 1711,390.5 1712,390.6 1713,390.9 1714,390.9 1715,390.8 1716,390.6 1717,390.9 1718,390.5 1719,390.6 1720,390.8 1721,391 1722,390.9 1723,390.6 1724,390.8 1725,390.7 1726,390.6 1727,390 1728,390.5 1729,390.8 1730,390.5 1731,390.3 1732,390.6 1733,390.8 1734,390.6 1735,390.7 1736,390.7 1737,390.9 1738,390.6 1739,390.8 1740,390.9 1741,390.6 1742,390.4 1743,390.8 1744,390.4 1745,390.5 1746,390.7 1747,390.8 1748,390.7 1749,390.4 1750,390.8 1751,390.4 1752,390.4 1753,390.5 1754,390.9 1755,390.6 1756,391 1757,390.6 1758,390.5 1759,390.7 1760,390.9 1761,390.6 1762,391 1763,390.7 1764,391 1765,390.9 1766,390.6 1767,390.9 1768,390.7 1769,391 1770,390.5 1771,390.7 1772,391 1773,390.7 1774,391 1775,391 1776,390.2 1777,390.5 1778,391 1779,391 1780,390.5 1781,390.8 1782,390.8 1783,390.4 1784,391 1785,390.9 1786,390.5 1787,391 1788,390.7 1789,390.6 1790,390.7 1791,390.6 1792,390.9 1793,390.4 1794,390.5 1795,390.4 1796,390.5 1797,390.6 1798,390.6 1799,390.7 1800,390.8 1801,390.4 1802,390.6 1803,390.4 1804,390.6 1805,390.7 1806,390.6 1807,390.9 1808,390.8 1809,390.7 1810,390.8 1811,390.5 1812,390.5 1813,390.4 1814,390.8 1815,390.6 1816,390.9 1817,390.6 1818,390.9 1819,390.9 1820,390.6 1821,390.9 1822,390.8 1823,390.6 1824,390.8 1825,390.7 1826,391 1827,390.9 1828,390.6 1829,390.8 1830,390.6 1831,390.7 1832,390.4 1833,390.8 1834,390.5 1835,390.6 1836,390.5 1837,390.7 1838,389.8 1839,390.8 1840,390.6 1841,390.7 1842,390.7 1843,390.5 1844,390.6 1845,390.6 1846,390.7 1847,391 1848,390.5 1849,390.8 1850,390.5 1851,390.6 1852,390.9 1853,390.6 1854,390.9 1855,390.7 1856,391 1857,390.4 1858,390.8 1859,390.5 1860,390.9 1861,390.9 1862,390.9 1863,390 1864,390.6 1865,390.5 1866,390.6 1867,390.9 1868,390.9 1869,390.6 1870,390.6 1871,390.7 1872,390.9 1873,390.7 1874,390.6 1875,390 1876,390.8 1877,390.7 1878,390.4 1879,390.4 1880,390.9 1881,390.8 1882,390.8 1883,390.6 1884,390.6 1885,390.7 1886,390.6 1887,390.6 1888,390.5 1889,390.6 1890,390.7 1891,390.5 1892,391 1893,390.8 1894,390.9 1895,390.4 1895,391 1894,391.2 1893,391.4 1892,391.1 1891,391.4 1890,391 1889,391.4 1888,391 1887,391.6 1886,391.3 1885,391.2 1884,391.4 1883,391.2 1882,391.1 1881,391.3 1880,391.4 1879,391.3 1878,391.6 1877,391.4 1876,391.1 1875,391.1 1874,391.1 1873,391.6 1872,391.2 1871,391.1 1870,391.6 1869,391.1 1868,391 1867,391.2 1866,391.3 1865,391.6 1864,391.1 1863,391.3 1862,391.6 1861,391.5 1860,391.6 1859,391.1 1858,391.6 1857,391.5 1856,391.2 1855,391.4 1854,391.1 1853,391.3 1852,391.2 1851,391 1850,391.2 1849,391 1848,391.6 1847,391.3 1846,391.3 1845,391.3 1844,391.6 1843,391.4 1842,391.3 1841,391.1 1840,391.3 1839,391 1838,391.3 1837,391.4 1836,391.5 1835,391.4 1834,391.1 1833,391.4 1832,391.3 1831,391.2 1830,391.2 1829,391.2 1828,391.5 1827,391.3 1826,391.1 1825,391.1 1824,391.1 1823,391.3 1822,391.1 1821,391.4 1820,391.3 1819,391.4 1818,391.4 1817,391.3 1816,391.3 1815,391.2 1814,391.3 1813,391.3 1812,391.4 1811,391.2 1810,391.1 1809,391.1 1808,391.2 1807,391.2 1806,391 1805,391.4 1804,391.3 1803,391.3 1802,391.6 1801,391.2 1800,391.3 1799,391.5 1798,391.3 1797,391.1 1796,391.3 1795,391 1794,391.1 1793,391 1792,391.4 1791,391.3 1790,391 1789,391.2 1788,391.2 1787,391.2 1786,391.2 1785,391.1 1784,391.4 1783,391 1782,391.4 1781,391.3 1780,391.4 1779,391.2 1778,391.5 1777,391.3 1776,391 1775,391.4 1774,391.5 1773,391.1 1772,391.4 1771,391 1770,391.5 1769,391.6 1768,391.5 1767,391.2 1766,391.4 1765,391.3 1764,391.5 1763,391.2 1762,391.1 1761,391 1760,391.1 1759,391.1 1758,391.3 1757,391.1 1756,391.5 1755,391.2 1754,391.5 1753,391.3 1752,391.3 1751,391.1 1750,391.3 1749,391 1748,391.1 1747,391 1746,391.3 1745,391.2 1744,391 1743,391.6 1742,391.5 1741,391.1 1740,391.1 1739,391.5 1738,391.4 1737,391.1 1736,391.3 1735,391.3 1734,391.5 1733,391.3 1732,391.4 1731,391.5 1730,391.2 1729,391.3 1728,391.5 1727,391.1 1726,391.4 1725,391.6 1724,391.2 1723,391.1 1722,391.5 1721,391.5 1720,391.5 1719,391.1 1718,391.4 1717,391.2 1716,391.1 1715,391.5 1714,391.6 1713,391.5 1712,391.3 1711,391.3 1710,391.3 1709,391.6 1708,391.5 1707,391.4 1706,391.2 1705,391.4 1704,391.3 1703,391.1 1702,391.2 1701,391.4 1700,391.5 1699,391.4 1698,391.2 1697,391.1 1696,391.6 1695,391.4 1694,391.4 1693,391.5 1692,391.4 1691,391.2 1690,391 1689,391.1 1688,391 1687,391.3 1686,391.3 1685,391.3 1684,391.5 1683,391.5 1682,391.3 1681,391.4 1680,391.5 1679,391.5 1678,391.6 1677,391 1676,391.3 1675,391.3 1674,391 1673,391.3 1672,391 1671,391.6 1670,391 1669,391.1 1668,391.3 1667,391.5 1666,391.2 1665,391.4 1664,391.3 1663,391.2 1662,391.5 1661,391.1 1660,391.4 1659,391.2 1658,391.6 1657,391.2 1656,391.5 1655,391.4 1654,391.2 1653,391.1 1652,391.1 1651,391.6 1650,391.6 1649,391.3 1648,391.2 1647,391 1646,391.3 1645,391.5 1644,391.5 1643,391.2 1642,391.5 1641,391.5 1640,391.2 1639,390.4 1638,390.2 1637,389.2 1636,388.5 1635,388 1634.2,389 1633.4,389.8 1632.5,390.9 1631.7,392.1 1630.9,392.7 1630,390.9 1629.2,388.1 1628.3,385.9 1627.5,383.6 1626.6,381.2 1625.8,372.6 1624.9,364.1 1624,353.2 1623.4,342.1 1622.8,330.3 1622.3,446.3 1621.3,442.3 1620.3,438.7 1619.3,435 1618.3,431.8 1617.4,427.8 1616.4,424.3 1615.4,420.4 1614.4,417.3 1613.4,413.5 1612.4,409.7 1611.4,406.2 1610.4,402.7 1609.4,398.6 1608.4,395.4 1607.5,391.5 1606.5,388 1605.5,384.6 1604.5,380.9 1603.5,377.1 1602.5,373.5 1601.5,369.8 1600.5,366.4 1599.5,362.8 1598.5,358.7 1597.6,355.2 1596.6,351.5 1595.6,348.1 1594.6,344.6 1593.6,341.1 1592.6,337.2 1591.6,333.4 1590.6,329.9 1589.6,326.4 1588.7,322.6 1587.7,318.8 1586.7,315.5 1585.7,311.9 1584.7,308.2 1583.7,304.4 1582.7,300.7 1581.7,296.9 1580.7,293.8 1579.7,289.7 1578.8,286.5 1577.8,282.6 1576.8,279.2 1575.8,275.5 1574.8,272.1 1573.8,268 1572.8,264.4 1571.8,260.9 1570.8,257.3 1569.8,253.6 1568.9,250.2 1567.9,246.4 1566.9,242.5 1565.9,238.9 1564.9,235.6 1564,234.6 1563.2,234.2 1562.3,233.2 1562.3,171.8 1561.7,171.5 1560.7,171.4 1559.8,172.1 1558.8,171.6 1557.8,172.1 1556.9,171.6 1555.9,172.2 1554.9,172.1 1554,171.9 1553,172 1552,171.8 1551.1,172.3 1550.1,171.4 1549.1,172.1 1548.1,171.9 1547.2,171.6 1546.2,171.9 1545.2,171.7 1544.3,172.1 1543.3,172.2 1542.3,172.4 1541.4,172.2 1540.4,172.7 1539.4,172.3 1538.5,172.2 1537.5,172.6 1536.7,172.2 1535.8,171.9 1535,170.9 1534.1,170.7 1533.3,170.3 1532.5,169.9 1531.7,168.3 1530.8,167.1 1530,166.2 1529.2,165.3 1528.2,166 1527.2,164.9 1526.2,164.8 1525.2,164.8 1524.2,165 1523.2,165.3 1522.2,165.2 1521.2,164.9 1520.2,165.7 1519.2,164.9 1518.3,165.7 1517.3,165.4 1516.3,164.8 1515.3,165 1514.3,164.5 1513.3,165.4 1512.3,164.4 1511.3,164.7 1510.3,164.8 1509.3,164.7 1508.3,164.8 1507.3,164.2 1506.3,164.5 1505.4,164.5 1504.4,164.7 1503.4,163.9 1502.4,164.1 1501.5,163.7 1500.5,163.8 1499.5,163.5 1498.5,163.4 1497.6,163 1496.6,163.6 1495.6,163.2 1494.6,162.6 1493.7,162.2 1492.7,163.1 1491.7,162 1490.7,162.4 1489.7,161.5 1488.7,161.5 1487.7,161.4 1486.7,160.3 1485.7,160.8 1484.7,160 1483.7,159.8 1482.7,159.5 1481.7,159 1480.8,158.9 1479.8,157.3 1478.9,156.9 1478,156 1477,155.2 1476.1,154.9 1475.2,154.2 1474.2,153.5 1473.3,152.8 1472.3,151.7 1471.4,150.7 1470.4,148.7 1469.4,148.1 1468.5,146.6 1467.5,145.3 1466.7,144.6 1465.8,144.3 1465,142.8 1464.1,142.3 1463.3,141.3 1462.5,139.6 1461.7,138.5 1460.8,137.8 1460,136 1459.2,133 1458.3,129.2 1457.5,126 1456.7,122.2 1455.8,116.5 1455,111.8 1454.2,110.2 1453.5,109.7 1452.5,109.6 1451.5,109.9 1450.5,110 1449.5,109.9 1448.5,110.1 1447.5,110.2 1446.5,110.1 1445.6,110.3 1444.6,110.1 1443.6,110 1442.6,109.6 1441.6,110 1440.6,110.5 1439.6,109.7 1438.6,109.5 1437.6,110.3 1436.6,109.9 1435.6,109.4 1434.6,109.6 1433.6,109.6 1432.6,109.7 1431.7,110.3 1430.7,109.7 1429.7,109.9 1428.7,109.8 1427.7,109.8 1426.7,110.5 1425.7,109.8 1424.7,110.4 1423.7,109.3 1422.7,110.5 1421.7,109.7 1420.7,110.1 1419.7,109.9 1418.7,109.8 1417.8,109.7 1416.8,110.4 1415.8,110.1 1414.8,109.9 1413.8,110.1 1412.8,109.5 1411.8,110.2 1410.8,110.4 1409.8,109.6 1408.8,109.7 1407.8,110.1 1406.8,109.9 1405.8,109.3 1404.8,109.4 1403.9,110 1402.9,109.9 1401.9,109.8 1400.9,110.1 1399.9,109.8 1398.9,109.7 1397.9,109.5 1396.9,109.6 1395.9,110.2 1394.9,110.2 1393.9,110.4 1392.9,110.3 1391.9,110.1 1390.9,110.3 1390,109.8 1389,110.1 1388,110.4 1387,109.3 1386,109.8 1385,109.6 1384,109.9 1383,109.8 1382,110.2 1381,109.7 1380,110 1379,110.3 1378,110.5 1377,109.8 1376,110 1375,110.6 1374,110.2 1373,110 1372,109.7 1371,109.6 1370,110.3 1369,110.2 1368,110.2 1367,109.9 1366,110.4 1365,110.4 1364,110 1363,110.1 1362,110.4 1361,109.9 1360,110.3 1359,110.6 1358,109.9 1357,109.9 1356,110.2 1355,110.3 1354,110.7 1353,110.3 1352,111.2 1351,110.5 1350,110.1 1349,110.4 1348,110.4 1347,111.1 1346,111.7 1345,111.3 1344,111.4 1343,111.2 1342,111.8 1341,111.8 1340,112.8 1339,112 1338,112.6 1337,112.5 1336,113.4 1335,113.6 1334,113.7 1333,114.6 1332,115 1331,116.5 1330,116.8 1329,117.7 1328,118.2 1327,118.8 1326,119.8 1325,120.1 1324,122.2 1323.1,123.6 1322.1,125.1 1321.2,126 1320.2,127 1319.3,129.1 1318.3,130.3 1317.3,132 1316.3,134.6 1315.3,137.4 1314.3,139.3 1313.3,142.2 1312.3,146.2 1311.3,149.7 1310.3,153.4 1309.3,158.2 1308.3,161.1 1307.5,163 1306.7,164.9 1305.8,167.2 1305,167.9 1304,168.7 1303,168.4 1302,167.8 1301,168.4 1300,167.9 1299,168.9 1298,168.1 1297,168.3 1296,168.1 1295,168.2 1294,168.5 1293,168.5 1292,169.1 1291,168.4 1290,168.6 1289,168.3 1288,168.7 1287,168.3 1286,168.8 1285,168.1 1284,168.7 1283,168.8 1282,168.4 1281,169.2 1280,168.3 1279,168.3 1278,169.1 1277,168.2 1276,169.2 1275,168.7 1274,169.2 1273,168.5 1272,169 1271,168.5 1270,169.5 1269,168.9 1268,168.7 1267,169 1266,169.6 1265,168.7 1264,168.8 1263,168.6 1262,168.6 1261,168.7 1260,168.9 1259,169 1258,169.6 1257,169.4 1256,168.6 1255,169 1254,169.4 1253,169.2 1252,169.7 1251,169.4 1250,169.8 1249,169.6 1248,169.7 1247,169.2 1246,169.5 1245,169.7 1244,169 1243,169.9 1242,169.2 1241,169 1240,169.2 1239,170 1238,169.1 1237,169.1 1236,169.7 1235,169.3 1234,169.2 1233,169.4 1232,168.9 1231,169.3 1230,169.1 1229,169.5 1228,169 1227,169.6 1226,168.9 1225,169.1 1224,169.5 1223,169.6 1222,169.2 1221,169.2 1220,170 1219,170.1 1218,169.2 1217,170 1216,170.1 1215,170.3 1214,169.2 1213,169.6 1212,169.6 1211,169.4 1210,170 1209,170 1208,170.6 1207,170.5 1206,170.3 1205,170.6 1204,171.7 1203,170.8 1202,171.5 1201,172 1200,171.4 1199,171.3 1198,172.4 1197,171.5 1196,172.5 1195,172.3 1194,171.7 1193,172.2 1192,172.8 1191,172.5 1190,172.6 1189,172.3 1188,172 1187,172.2 1186,172.4 1185,173.4 1184,173.3 1183,174.8 1182,175.4 1181,175.4 1180,175.2 1179,175.2 1178,174.9 1177,175.1 1176,176 1175,175.4 1174,175.6 1173,175.7 1172,175.4 1171,175.9 1170,175.8 1169.2,175.9 1168.3,174.9 1167.5,173.9 1166.7,172.8 1165.8,169.2 1164.8,166.7 1163.9,163.2 1162.9,158.9 1162,155.7 1161.2,152.8 1160.3,150.2 1159.5,147.4 1159,91.8 1158,95.1 1157,98.4 1156,101.9 1155,105.1 1154.1,108.2 1153.1,111.3 1152.1,115 1151.1,117.8 1150.1,121.3 1149.1,124.4 1148.1,127.6 1147.1,131.1 1146.1,134.6 1145.2,137.6 1144.2,141.1 1143.2,143.9 1142.2,147.1 1141.2,150.6 1140.2,153.6 1139.2,157.4 1138.2,160.6 1137.2,163.4 1136.3,167.1 1135.3,170.4 1134.3,173.2 1133.3,176.6 1132.3,180 1131.3,183.1 1130.3,186.5 1129.3,189.7 1128.3,193.3 1127.4,196.1 1126.4,199.4 1125.4,202.8 1124.4,205.8 1123.4,209.1 1122.4,212.4 1121.4,215.8 1120.4,218.8 1119.4,222.5 1118.5,225.8 1117.5,229 1116.5,231.9 1115.5,235.6 1114.5,238.3 1113.5,242 1112.5,244.8 1111.5,248.5 1110.5,251.8 1109.6,254.6 1108.6,258.3 1107.6,261.4 1106.6,264.8 1105.6,268 1104.6,271 1103.6,274.6 1102.6,277.9 1101.6,281 1100.7,284.4 1099.7,287.2 1098.7,290.9 1097.7,294.1 1096.7,297.4 1095.8,301.1 1095,305.3 1094.1,315.3 1093.2,325.4 1092.3,335.7 1091.3,337.7 1090.3,339.7 1090.3,388.2 1089.3,388.1 1088.3,388.3 1087.3,388.7 1086.3,388.9 1085.3,388.8 1084.3,388.9 1083.3,389.1 1082.3,388.9 1081.3,388.9 1080.3,389 1079.4,389.5 1078.4,389.7 1077.4,389.4 1076.4,389.5 1075.4,389.7 1074.4,389.8 1073.4,390.1 1072.4,390.2 1071.4,389.9 1070.4,390.4 1069.4,390 1068.4,390.3 1067.4,390.5 1066.4,390.7 1065.4,390.6 1064.4,390.7 1063.4,390.7 1062.4,390.8 1061.4,390.9 1060.5,391.3 1059.5,391.3 1058.5,391.5 1057.5,391.7 1056.5,391.6 1055.5,391.8 1054.5,391.7 1053.5,392 1052.5,391.8 1051.5,392.1 1050.5,391.9" fill="#00a000"/><polyline points="1050.5,390.6 1051.5,390.6 1052.5,390.6 1053.5,390.6 1054.5,390.6 1055.5,390.6 1056.5,390.6 1057.5,390.6 1058.5,390.6 1059.5,390.6 1060.5,390.6 1061.4,390.6 1062.4,390.6 1063.4,390.6 1064.4,390.6 1065.4,390.6 1066.4,390.6 1067.4,390.6 1068.4,390.6 1069.4,390.6 1070.4,390.6 1071.4,390.6 1072.4,390.6 1073.4,390.6 1074.4,390.6 1075.4,390.6 1076.4,390.6 1077.4,390.6 1078.4,390.6 1079.4,390.6 1080.3,390.6 1081.3,390.6 1082.3,390.6 1083.3,390.6 1084.3,390.6 1085.3,390.6 1086.3,390.6 1087.3,390.6 1088.3,390.6 1089.3,390.6 1090.3,390.6 1090.3,341.8 1091.3,339.8 1092.3,337.8 1093.2,327.8 1094.1,317.8 1095,307.8 1095.8,303.6 1096.7,299.5 1097.7,296.3 1098.7,293 1099.7,289.8 1100.7,286.6 1101.6,283.3 1102.6,280.1 1103.6,276.9 1104.6,273.7 1105.6,270.4 1106.6,267.2 1107.6,264 1108.6,260.7 1109.6,257.5 1110.5,254.3 1111.5,251 1112.5,247.8 1113.5,244.6 1114.5,241.4 1115.5,238.1 1116.5,234.9 1117.5,231.7 1118.5,228.4 1119.4,225.2 1120.4,222 1121.4,218.7 1122.4,215.5 1123.4,212.3 1124.4,209.1 1125.4,205.8 1126.4,202.6 1127.4,199.4 1128.3,196.1 1129.3,192.9 1130.3,189.7 1131.3,186.4 1132.3,183.2 1133.3,180 1134.3,176.8 1135.3,173.5 1136.3,170.3 1137.2,167.1 1138.2,163.8 1139.2,160.6 1140.2,157.4 1141.2,154.1 1142.2,150.9 1143.2,147.7 1144.2,144.5 1145.2,141.2 1146.1,138 1147.1,134.8 1148.1,131.5 1149.1,128.3 1150.1,125.1 1151.1,121.8 1152.1,118.6 1153.1,115.4 1154.1,112.2 1155,108.9 1156,105.7 1157,102.5 1158,99.2 1159,96 1159.5,149.8 1160.3,152.5 1161.2,155.1 1162,157.8 1162.9,161.9 1163.9,166.1 1164.8,170.2 1165.8,174.4 1166.7,178.5 1167.5,179.2 1168.3,180 1169.2,180.8 1170,181.5 1171,181.4 1172,181.3 1173,181.2 1174,181.2 1175,181.1 1176,181 1177,180.9 1178,180.8 1179,180.8 1180,180.7 1181,180.6 1182,180.5 1183,179.9 1184,179.2 1185,178.6 1186,178 1187,177.9 1188,177.9 1189,177.8 1190,177.8 1191,177.7 1192,177.6 1193,177.6 1194,177.5 1195,177.4 1196,177.4 1197,177.3 1198,177.2 1199,177.2 1200,177.1 1201,177.1 1202,177 1203,176.8 1204,176.5 1205,176.2 1206,176 1207,175.8 1208,175.5 1209,175.5 1210,175.4 1211,175.4 1212,175.3 1213,175.3 1214,175.2 1215,175.2 1216,175.1 1217,175.1 1218,175 1219,175 1220,174.9 1221,174.9 1222,174.8 1223,174.8 1224,174.7 1225,174.7 1226,174.6 1227,174.6 1228,174.5 1229,174.5 1230,174.4 1231,174.4 1232,174.3 1233,174.3 1234,174.5 1235,174.8 1236,175 1237,175 1238,175 1239,174.9 1240,174.9 1241,174.9 1242,174.9 1243,174.9 1244,174.8 1245,174.8 1246,174.8 1247,174.8 1248,174.8 1249,174.7 1250,174.7 1251,174.7 1252,174.7 1253,174.6 1254,174.6 1255,174.6 1256,174.6 1257,174.6 1258,174.5 1259,174.5 1260,174.5 1261,174.5 1262,174.5 1263,174.4 1264,174.4 1265,174.4 1266,174.4 1267,174.4 1268,174.4 1269,174.3 1270,174.3 1271,174.3 1272,174.3 1273,174.3 1274,174.3 1275,174.2 1276,174.2 1277,174.2 1278,174.2 1279,174.2 1280,174.1 1281,174.1 1282,174.1 1283,174.1 1284,174.1 1285,174.1 1286,174 1287,174 1288,174 1289,174 1290,174 1291,173.9 1292,173.9 1293,173.9 1294,173.9 1295,173.9 1296,173.9 1297,173.8 1298,173.8 1299,173.8 1300,173.8 1301,173.8 1302,173.8 1303,173.7 1304,173.7 1305,173.7 1305.8,172 1306.7,170.3 1307.5,168.7 1308.3,167 1309.3,163.5 1310.3,159.9 1311.3,156.4 1312.3,152.8 1313.3,149.3 1314.3,146.8 1315.3,144.3 1316.3,141.8 1317.3,139.3 1318.3,136.8 1319.3,135.5 1320.2,134.1 1321.2,132.8 1322.1,131.5 1323.1,130.2 1324,128.8 1325,127.5 1326,126.8 1327,126 1328,125.2 1329,124.5 1330,123.8 1331,123 1332,122.2 1333,121.5 1334,120.8 1335,120 1336,119.8 1337,119.7 1338,119.5 1339,119.3 1340,119.2 1341,119 1342,118.8 1343,118.7 1344,118.5 1345,118.3 1346,118.2 1347,118 1348,117.8 1349,117.7 1350,117.5 1351,117.5 1352,117.5 1353,117.4 1354,117.4 1355,117.4 1356,117.4 1357,117.4 1358,117.3 1359,117.3 1360,117.3 1361,117.3 1362,117.2 1363,117.2 1364,117.2 1365,117.2 1366,117.2 1367,117.1 1368,117.1 1369,117.1 1370,117.1 1371,117.1 1372,117 1373,117 1374,117 1375,117 1376,116.9 1377,116.9 1378,116.9 1379,116.9 1380,116.9 1381,116.8 1382,116.8 1383,116.8 1384,116.8 1385,116.8 1386,116.8 1387,116.8 1388,116.8 1389,116.8 1390,116.8 1390.9,116.8 1391.9,116.8 1392.9,116.8 1393.9,116.8 1394.9,116.8 1395.9,116.8 1396.9,116.8 1397.9,116.8 1398.9,116.8 1399.9,116.8 1400.9,116.8 1401.9,116.8 1402.9,116.8 1403.9,116.8 1404.8,116.8 1405.8,116.8 1406.8,116.8 1407.8,116.8 1408.8,116.8 1409.8,116.8 1410.8,116.8 1411.8,116.8 1412.8,116.8 1413.8,116.8 1414.8,116.8 1415.8,116.8 1416.8,116.8 1417.8,116.8 1418.7,116.8 1419.7,116.8 1420.7,116.8 1421.7,116.8 1422.7,116.8 1423.7,116.8 1424.7,116.8 1425.7,116.8 1426.7,116.8 1427.7,116.8 1428.7,116.8 1429.7,116.8 1430.7,116.8 1431.7,116.8 1432.6,116.8 1433.6,116.8 1434.6,116.8 1435.6,116.8 1436.6,116.8 1437.6,116.8 1438.6,116.8 1439.6,116.8 1440.6,116.8 1441.6,116.8 1442.6,116.8 1443.6,116.8 1444.6,116.8 1445.6,116.8 1446.5,116.8 1447.5,116.8 1448.5,116.8 1449.5,116.8 1450.5,116.8 1451.5,116.8 1452.5,116.8 1453.5,116.8 1454.2,117.7 1455,118.5 1455.8,123 1456.7,127.5 1457.5,132 1458.3,135.1 1459.2,138.1 1460,141.2 1460.8,142.6 1461.7,144.1 1462.5,145.6 1463.3,147 1464.1,147.8 1465,148.7 1465.8,149.5 1466.7,150.4 1467.5,151.2 1468.5,152.3 1469.4,153.4 1470.4,154.5 1471.4,155.6 1472.3,156.7 1473.3,157.8 1474.2,158.5 1475.2,159.3 1476.1,160 1477,160.8 1478,161.5 1478.9,162.3 1479.8,163 1480.8,163.8 1481.7,164.5 1482.7,164.8 1483.7,165.2 1484.7,165.5 1485.7,165.8 1486.7,166.2 1487.7,166.5 1488.7,166.8 1489.7,167.1 1490.7,167.5 1491.7,167.8 1492.7,167.9 1493.7,168.1 1494.6,168.2 1495.6,168.4 1496.6,168.5 1497.6,168.7 1498.5,168.8 1499.5,169 1500.5,169.1 1501.5,169.3 1502.4,169.4 1503.4,169.6 1504.4,169.7 1505.4,169.9 1506.3,170 1507.3,170.2 1508.3,170.3 1509.3,170.3 1510.3,170.3 1511.3,170.4 1512.3,170.4 1513.3,170.4 1514.3,170.4 1515.3,170.5 1516.3,170.5 1517.3,170.5 1518.3,170.5 1519.2,170.6 1520.2,170.6 1521.2,170.6 1522.2,170.6 1523.2,170.7 1524.2,170.7 1525.2,170.7 1526.2,170.7 1527.2,170.8 1528.2,170.8 1529.2,170.8 1530,171.9 1530.8,173 1531.7,174 1532.5,175.1 1533.3,176.2 1534.1,176.5 1535,176.8 1535.8,177.2 1536.7,177.5 1537.5,177.8 1538.5,177.8 1539.4,177.7 1540.4,177.7 1541.4,177.7 1542.3,177.6 1543.3,177.6 1544.3,177.6 1545.2,177.5 1546.2,177.5 1547.2,177.5 1548.1,177.4 1549.1,177.4 1550.1,177.4 1551.1,177.4 1552,177.3 1553,177.3 1554,177.3 1554.9,177.2 1555.9,177.2 1556.9,177.2 1557.8,177.1 1558.8,177.1 1559.8,177.1 1560.7,177 1561.7,177 1562.3,174.3 1562.3,235.6 1563.2,236.3 1564,237.1 1564.9,237.8 1565.9,241.4 1566.9,245.1 1567.9,248.7 1568.9,252.3 1569.8,256 1570.8,259.6 1571.8,263.2 1572.8,266.8 1573.8,270.5 1574.8,274.1 1575.8,277.7 1576.8,281.4 1577.8,285 1578.8,288.6 1579.7,292.3 1580.7,295.9 1581.7,299.5 1582.7,303.2 1583.7,306.8 1584.7,310.4 1585.7,314.1 1586.7,317.7 1587.7,321.3 1588.7,324.9 1589.6,328.6 1590.6,332.2 1591.6,335.8 1592.6,339.5 1593.6,343.1 1594.6,346.7 1595.6,350.4 1596.6,354 1597.6,357.6 1598.5,361.3 1599.5,364.9 1600.5,368.5 1601.5,372.1 1602.5,375.8 1603.5,379.4 1604.5,383 1605.5,386.7 1606.5,390.3 1607.5,393.9 1608.4,397.6 1609.4,401.2 1610.4,404.8 1611.4,408.5 1612.4,412.1 1613.4,415.7 1614.4,419.4 1615.4,423 1616.4,426.6 1617.4,430.2 1618.3,433.9 1619.3,437.5 1620.3,441.1 1621.3,444.8 1622.3,448.4 1622.8,332.4 1623.4,344.1 1624,355.8 1624.9,366.5 1625.8,375 1626.6,383.5 1627.5,385.9 1628.3,388.2 1629.2,390.6 1630,392.9 1630.9,395.3 1631.7,394.3 1632.5,393.2 1633.4,392.2 1634.2,391.1 1635,390.1 1636,390.1 1637,390.1 1638,390 1639,390 1640,390 1641,390 1642,390 1643,390 1644,390 1645,390 1646,390 1647,390 1648,390 1649,390 1650,390 1651,390 1652,390 1653,390 1654,390 1655,390 1656,390 1657,390 1658,390 1659,390 1660,390 1661,390 1662,390 1663,390 1664,390 1665,390 1666,390 1667,390 1668,390 1669,390 1670,390 1671,390 1672,390 1673,390 1674,390 1675,390 1676,390 1677,390 1678,390 1679,390 1680,390 1681,390 1682,390 1683,390 1684,390 1685,390 1686,390 1687,390 1688,390 1689,390 1690,390 1691,390 1692,390 1693,390 1694,390 1695,390 1696,390 1697,390 1698,390 1699,390 1700,390 1701,390 1702,390 1703,390 1704,390 1705,390 1706,390 1707,390 1708,390 1709,390 1710,390 1711,390 1712,390 1713,390 1714,390 1715,390 1716,390 1717,390 1718,390 1719,390 1720,390 1721,390 1722,390 1723,390 1724,390 1725,390 1726,390 1727,390 1728,390 1729,390 1730,390 1731,390 1732,390 1733,390 1734,390 1735,390 1736,390 1737,390 1738,390 1739,390 1740,390 1741,390 1742,390 1743,390 1744,390 1745,390 1746,390 1747,390 1748,390 1749,390 1750,390 1751,390 1752,390 1753,390 1754,390 1755,390 1756,390 1757,390 1758,390 1759,390 1760,390 1761,390 1762,390 1763,390 1764,390 1765,390 1766,390 1767,390 1768,390 1769,390 1770,390 1771,390 1772,390 1773,390 1774,390 1775,390 1776,390 1777,390 1778,390 1779,390 1780,390 1781,390 1782,390 1783,390 1784,390 1785,390 1786,390 1787,390 1788,390 1789,390 1790,390 1791,390 1792,390 1793,390 1794,390 1795,390 1796,390 1797,390 1798,390 1799,390 1800,390 1801,390 1802,390 1803,390 1804,390 1805,390 1806,390 1807,390 1808,390 1809,390 1810,390 1811,390 1812,390 1813,390 1814,390 1815,390 1816,390 1817,390 1818,390 1819,390 1820,390 1821,390 1822,390 1823,390 1824,390 1825,390 1826,390 1827,390 1828,390 1829,390 1830,390 1831,390 1832,390 1833,390 1834,390 1835,390 1836,390 1837,390 1838,390 1839,390 1840,390 1841,390 1842,390 1843,390 1844,390 1845,390 1846,390 1847,390 1848,390 1849,390 1850,390 1851,390 1852,390 1853,390 1854,390 1855,390 1856,390 1857,390 1858,390 1859,390 1860,390 1861,390 1862,390 1863,390 1864,390 1865,390 1866,390 1867,390 1868,390 1869,390 1870,390 1871,390 1872,390 1873,390 1874,390 1875,390 1876,390 1877,390 1878,390 1879,390 1880,390 1881,390 1882,390 1883,390 1884,390 1885,390 1886,390 1887,390 1888,390 1889,390 1890,390 1891,390 1892,390 1893,390 1894,390 1895,390" fill="none" stroke="#ffc000" stroke-width="1.7" stroke-linejoin="round" /><polygon points="1163.9,163.9 1164.8,168.5 1165.8,172 1166.7,177 1167.5,177.7 1168.3,178 1169.2,178.4 1170,179.3 1171,179 1172,179.7 1173,178.9 1174,178.7 1175,178.8 1176,178.6 1177,179.1 1178,179.2 1179,178.9 1180,178.9 1181,178.5 1182,178.8 1183,177.7 1184,176.9 1185,177.1 1186,176.3 1187,176.1 1188,175.5 1189,176.1 1190,175.7 1191,176 1192,176 1193,175.4 1194,175.9 1195,175.4 1196,175.9 1197,175.3 1198,175.6 1199,174.7 1200,175.1 1201,174.7 1202,174.9 1203,174.7 1204,173.9 1205,173.9 1206,174.4 1207,174.2 1208,173.2 1209,173.5 1210,173 1211,173.3 1212,173.5 1213,173.3 1214,173.5 1215,173.4 1216,173 1217,172.7 1218,172.9 1219,172.5 1220,172.6 1221,173.3 1222,172.9 1223,172.3 1224,172.9 1225,173 1226,172.9 1227,172.6 1228,173 1229,172 1230,172.8 1231,172.5 1232,171.9 1233,172.3 1234,172 1235,173.1 1236,172.9 1237,173.4 1238,172.6 1239,173.4 1240,172.7 1241,172.5 1242,172.8 1243,172.8 1244,172.6 1245,172.6 1246,172.5 1247,172.3 1248,173 1249,172.3 1250,173.1 1251,172.6 1252,173.2 1253,172.5 1254,173 1255,172.8 1256,172.9 1257,172.6 1258,172.9 1259,173 1260,172.7 1261,172.6 1262,172.1 1263,172.1 1264,172.8 1265,172.1 1266,172.7 1267,172.1 1268,172.2 1269,172 1270,171.9 1271,172.5 1272,171.9 1273,172 1274,171.9 1275,172.3 1276,172.5 1277,172.4 1278,172.4 1279,171.7 1280,172.5 1281,171.7 1282,172.2 1283,172 1284,172 1285,172.6 1286,171.8 1287,172.2 1288,172.2 1289,171.8 1290,172.1 1291,172.3 1292,171.8 1293,171.8 1294,172 1295,171.9 1296,171.9 1297,172.2 1298,171.7 1299,171.6 1300,172.1 1301,171.8 1302,171.8 1303,171.5 1304,171.6 1305,171.4 1305.8,170.3 1306.7,168.8 1307.5,166.7 1308.3,164.5 1309.3,161.1 1309.3,165.6 1308.3,169.1 1307.5,171 1306.7,172.1 1305.8,174.5 1305,175.3 1304,175.2 1303,175.7 1302,175.9 1301,176.1 1300,175.3 1299,176 1298,175.7 1297,175.4 1296,176.3 1295,175.8 1294,176 1293,176 1292,176.3 1291,175.9 1290,175.9 1289,175.8 1288,175.8 1287,175.6 1286,176.3 1285,176.5 1284,175.8 1283,176.1 1282,176.3 1281,175.9 1280,176.6 1279,176.2 1278,176.3 1277,176.6 1276,175.7 1275,176 1274,176 1273,175.9 1272,176.6 1271,176.7 1270,175.8 1269,176.8 1268,176 1267,176.8 1266,176.1 1265,176.8 1264,176.2 1263,176.5 1262,176.9 1261,176 1260,176.7 1259,176.8 1258,176.5 1257,177 1256,176.7 1255,176.7 1254,176.2 1253,177.1 1252,177 1251,177.2 1250,177 1249,177.1 1248,176.5 1247,177.3 1246,176.4 1245,176.6 1244,176.6 1243,177.3 1242,176.8 1241,176.6 1240,176.7 1239,176.6 1238,176.6 1237,177.1 1236,177 1235,176.6 1234,176.6 1233,176.2 1232,176.1 1231,176 1230,176.4 1229,176.9 1228,177 1227,176.9 1226,176.4 1225,176.6 1224,177.1 1223,176.4 1222,177.1 1221,176.8 1220,177.2 1219,177 1218,176.7 1217,176.6 1216,176.8 1215,176.9 1214,177.1 1213,177.3 1212,177.8 1211,177.6 1210,177.3 1209,177.5 1208,177.8 1207,177.7 1206,178.4 1205,178.6 1204,178.3 1203,179 1202,178.7 1201,178.9 1200,178.8 1199,179.6 1198,179.2 1197,179.1 1196,179.6 1195,179.9 1194,179.4 1193,179.9 1192,179.2 1191,180.2 1190,180.1 1189,179.9 1188,179.8 1187,180.1 1186,180.4 1185,180.4 1184,181.5 1183,181.9 1182,182.4 1181,182.3 1180,183.1 1179,182.6 1178,182.6 1177,182.5 1176,183.2 1175,183.2 1174,183 1173,183.5 1172,183.7 1171,183.3 1170,183.3 1169.2,182.3 1168.3,181.7 1167.5,180.9 1166.7,180.2 1165.8,175.9 1164.8,172.5 1163.9,167.6" fill="#ffc000"/><polygon points="1320.2,130.9 1321.2,128.6 1322.1,128.8 1323.1,126.2 1324,126.1 1325,124.8 1326,124.4 1327,122.2 1328,121.9 1329,121.4 1330,120 1331,120 1332,118.4 1333,118.5 1334,117.2 1335,116.9 1336,116.1 1337,116.5 1338,117.4 1339,117.3 1340,116 1341,116.5 1342,115.9 1343,114.4 1344,114 1345,114.4 1346,113.3 1347,115.7 1348,115.3 1349,115.2 1350,115.2 1351,115.2 1352,113.8 1353,113.6 1354,113.8 1355,113.3 1356,112.9 1357,114.3 1358,114.5 1359,115 1360,113.2 1361,113.4 1362,113.2 1363,114.1 1364,113.1 1365,113 1366,111.1 1367,114.7 1368,114.3 1369,114.4 1370,114.9 1371,113.2 1372,113.8 1373,114.5 1374,113.5 1375,113.9 1376,113.2 1377,114.6 1378,113.6 1379,114.3 1380,112.4 1381,114.6 1382,114.4 1383,114.1 1384,113.1 1385,113.6 1386,113.6 1387,114.7 1388,112.7 1389,113.2 1390,113.4 1390.9,114.5 1391.9,112.8 1392.9,113.7 1393.9,112.3 1394.9,113.3 1395.9,114.3 1396.9,114.4 1397.9,114.8 1398.9,114.1 1399.9,113 1400.9,112.5 1401.9,113.1 1402.9,113.4 1403.9,112.7 1404.8,114 1405.8,114.1 1406.8,113.1 1407.8,112.3 1408.8,114 1409.8,112.4 1410.8,112.4 1411.8,114.1 1412.8,113.6 1413.8,114.3 1414.8,113.6 1415.8,114 1416.8,114 1417.8,112.4 1418.7,113.7 1419.7,112.4 1420.7,112.3 1421.7,113.8 1422.7,112.9 1423.7,114.3 1424.7,113.7 1425.7,112.4 1426.7,114.4 1427.7,114.6 1428.7,113.6 1429.7,113.6 1430.7,114.1 1431.7,114.2 1432.6,112.5 1433.6,112.6 1434.6,113.8 1435.6,112.7 1436.6,113.3 1437.6,114.4 1438.6,113.4 1439.6,114 1440.6,113.4 1441.6,114.7 1442.6,112.8 1443.6,112.7 1444.6,114.7 1445.6,112.6 1446.5,113.5 1447.5,113.8 1448.5,113.6 1449.5,113.1 1450.5,112.7 1451.5,114 1452.5,112.6 1453.5,113.2 1454.2,113.8 1455,114.9 1455.8,119.9 1456.7,125.7 1457.5,130 1458.3,133.4 1459.2,136 1460,139.6 1460.8,140.9 1461.7,141.7 1462.5,143.6 1463.3,144.9 1464.1,145.5 1465,146.7 1465.8,147.4 1466.7,147.9 1467.5,149.1 1468.5,150.8 1469.4,151 1470.4,152.4 1471.4,153.5 1472.3,154.5 1473.3,155.4 1474.2,156.6 1475.2,157.7 1476.1,158.4 1477,158.3 1478,159.2 1478.9,160.3 1479.8,161.2 1480.8,162.1 1481.7,162.3 1482.7,162.5 1483.7,163.6 1484.7,163.3 1485.7,163.5 1486.7,164.4 1487.7,164.4 1488.7,165.2 1489.7,165.3 1490.7,165 1491.7,166.2 1492.7,166 1493.7,165.6 1494.6,166.6 1495.6,166.4 1496.6,167 1497.6,166.2 1498.5,166.6 1499.5,167.1 1500.5,167.5 1501.5,167.1 1502.4,167.9 1503.4,167.9 1504.4,167.4 1505.4,167.5 1506.3,167.6 1507.3,168.5 1508.3,168.6 1509.3,168 1510.3,168.7 1511.3,168.3 1512.3,168.1 1513.3,167.5 1514.3,168.1 1515.3,168 1516.3,168.6 1517.3,168.1 1518.3,168.4 1519.2,168.4 1520.2,168.1 1521.2,168.5 1522.2,168.3 1523.2,168.4 1524.2,169 1525.2,168.8 1526.2,168.6 1527.2,168.3 1528.2,169.2 1529.2,168.5 1530,169.8 1530.8,171.1 1531.7,171.7 1532.5,173 1533.3,174.5 1534.1,174.9 1535,174.6 1535.8,174.8 1536.7,174.3 1537.5,175.5 1538.5,175.6 1539.4,176.2 1540.4,175.8 1541.4,176.1 1542.3,175.7 1543.3,175.4 1544.3,176 1545.2,175.4 1546.2,175.4 1547.2,175.7 1548.1,175.5 1549.1,175 1550.1,175.3 1551.1,175.6 1552,175.5 1553,175.6 1554,175.3 1554.9,175.6 1555.9,174.8 1556.9,175.1 1557.8,175.5 1558.8,174.8 1559.8,174.6 1560.7,175.3 1561.7,175.1 1561.7,178.8 1560.7,179.1 1559.8,178.7 1558.8,179.2 1557.8,178.6 1556.9,179.4 1555.9,179.6 1554.9,179.6 1554,179.6 1553,179.2 1552,178.8 1551.1,179 1550.1,178.9 1549.1,179.6 1548.1,179.2 1547.2,179.7 1546.2,179.5 1545.2,179.7 1544.3,179.1 1543.3,179.9 1542.3,179.5 1541.4,179.9 1540.4,179.3 1539.4,180.1 1538.5,179.6 1537.5,179.6 1536.7,179.6 1535.8,179.6 1535,178.9 1534.1,178.9 1533.3,178.4 1532.5,177 1531.7,176.3 1530.8,175.1 1530,173.7 1529.2,172.9 1528.2,172.4 1527.2,172.3 1526.2,172.6 1525.2,172.3 1524.2,172.5 1523.2,172.4 1522.2,172.8 1521.2,172.2 1520.2,172.6 1519.2,172.6 1518.3,172.1 1517.3,172.1 1516.3,172.7 1515.3,172 1514.3,172.5 1513.3,172.9 1512.3,172.4 1511.3,172.6 1510.3,171.9 1509.3,172.1 1508.3,172.5 1507.3,171.8 1506.3,171.5 1505.4,171.7 1504.4,171.4 1503.4,171.6 1502.4,171.7 1501.5,171.4 1500.5,171.5 1499.5,170.9 1498.5,170.9 1497.6,171 1496.6,170.4 1495.6,170.3 1494.6,170.2 1493.7,170 1492.7,170.1 1491.7,170.2 1490.7,169.3 1489.7,169 1488.7,169.1 1487.7,168.9 1486.7,167.7 1485.7,168.3 1484.7,167.7 1483.7,167.2 1482.7,166.7 1481.7,167 1480.8,166.2 1479.8,164.6 1478.9,164.6 1478,163.3 1477,162.8 1476.1,161.7 1475.2,161.1 1474.2,160.6 1473.3,159.9 1472.3,159 1471.4,157.8 1470.4,156.4 1469.4,155.2 1468.5,154.4 1467.5,153.4 1466.7,152.5 1465.8,152 1465,150.4 1464.1,149.5 1463.3,148.9 1462.5,147.4 1461.7,146.3 1460.8,144.2 1460,143.2 1459.2,139.9 1458.3,136.6 1457.5,134.1 1456.7,129.4 1455.8,125.4 1455,122.7 1454.2,120.7 1453.5,121.1 1452.5,118.9 1451.5,120.6 1450.5,120.9 1449.5,120.4 1448.5,121.2 1447.5,120.4 1446.5,119.9 1445.6,121 1444.6,120.1 1443.6,121.3 1442.6,119.8 1441.6,120.7 1440.6,119.4 1439.6,119.3 1438.6,120.2 1437.6,120.1 1436.6,121.3 1435.6,119.5 1434.6,121.1 1433.6,119.5 1432.6,120.1 1431.7,120.2 1430.7,120.9 1429.7,120.6 1428.7,119.1 1427.7,121.3 1426.7,120.2 1425.7,120.3 1424.7,120.5 1423.7,120.2 1422.7,120.4 1421.7,119.3 1420.7,120.4 1419.7,119.8 1418.7,119.6 1417.8,120.8 1416.8,120.5 1415.8,120.5 1414.8,119 1413.8,120.3 1412.8,120.4 1411.8,118.9 1410.8,121.3 1409.8,120.9 1408.8,119.4 1407.8,119 1406.8,121.2 1405.8,119.1 1404.8,120.7 1403.9,119 1402.9,120.4 1401.9,121.1 1400.9,120.8 1399.9,119.9 1398.9,119.4 1397.9,119.9 1396.9,119.2 1395.9,119.3 1394.9,120.7 1393.9,119.6 1392.9,119.9 1391.9,119.4 1390.9,120.7 1390,119.6 1389,118.9 1388,119.8 1387,121.2 1386,119.9 1385,121 1384,119.1 1383,121.2 1382,118.9 1381,119.3 1380,120.2 1379,120.1 1378,120.8 1377,119.4 1376,119.6 1375,120.8 1374,120.2 1373,120.7 1372,121 1371,120.8 1370,120.9 1369,119.1 1368,121.3 1367,119.7 1366,120.1 1365,119.8 1364,121.3 1363,121.1 1362,120.6 1361,121.7 1360,121.1 1359,121.7 1358,121.5 1357,120.3 1356,121.3 1355,120.9 1354,119.7 1353,119.6 1352,121.9 1351,119.5 1350,121.5 1349,121.2 1348,121.6 1347,121.7 1346,120.7 1345,122 1344,121.4 1343,120.9 1342,122.7 1341,121.8 1340,121.3 1339,122.9 1338,122.5 1337,122 1336,122.8 1335,122.1 1334,123.3 1333,125.4 1332,126.4 1331,125 1330,127.9 1329,128.8 1328,128.3 1327,128.2 1326,129.3 1325,130.3 1324,131 1323.1,133.5 1322.1,134.1 1321.2,136.7 1320.2,138.2" fill="#ffc000"/><polyline points="1050.5,388.8 1051.5,388.8 1052.5,388.8 1053.5,388.8 1054.5,388.8 1055.5,388.8 1056.5,388.8 1057.5,388.8 1058.5,388.8 1059.5,388.8 1060.5,388.8 1061.4,388.8 1062.4,388.8 1063.4,388.8 1064.4,388.8 1065.4,388.8 1066.4,388.8 1067.4,388.8 1068.4,388.8 1069.4,388.8 1070.4,388.8 1071.4,388.8 1072.4,388.8 1073.4,388.8 1074.4,388.8 1075.4,388.8 1076.4,388.8 1077.4,388.8 1078.4,388.8 1079.4,388.8 1080.3,388.8 1081.3,388.8 1082.3,388.8 1083.3,388.8 1084.3,388.8 1085.3,388.8 1086.3,388.8 1087.3,388.8 1088.3,388.8 1089.3,388.8 1090.3,388.8 1090.3,340 1091.3,338 1092.3,336 1093.2,326 1094.1,316 1095,306 1095.8,301.9 1096.7,297.7 1097.7,294.4 1098.7,291.2 1099.7,287.9 1100.7,284.7 1101.6,281.4 1102.6,278.2 1103.6,274.9 1104.6,271.6 1105.6,268.4 1106.6,265.1 1107.6,261.9 1108.6,258.6 1109.6,255.4 1110.5,252.1 1111.5,248.8 1112.5,245.6 1113.5,242.3 1114.5,239.1 1115.5,235.8 1116.5,232.6 1117.5,229.3 1118.5,226 1119.4,222.8 1120.4,219.5 1121.4,216.3 1122.4,213 1123.4,209.8 1124.4,206.5 1125.4,203.2 1126.4,200 1127.4,196.7 1128.3,193.5 1129.3,190.2 1130.3,187 1131.3,183.7 1132.3,180.4 1133.3,177.2 1134.3,173.9 1135.3,170.7 1136.3,167.4 1137.2,164.2 1138.2,160.9 1139.2,157.6 1140.2,154.4 1141.2,151.1 1142.2,147.9 1143.2,144.6 1144.2,141.4 1145.2,138.1 1146.1,134.8 1147.1,131.6 1148.1,128.3 1149.1,125.1 1150.1,121.8 1151.1,118.6 1152.1,115.3 1153.1,112 1154.1,108.8 1155,105.5 1156,102.3 1157,99 1158,95.8 1159,92.5 1159.5,148 1160.3,150.7 1161.2,153.3 1162,156 1162.9,159.6 1163.9,163.2 1164.8,166.8 1165.8,170.4 1166.7,174 1167.5,174.8 1168.3,175.5 1169.2,176.2 1170,177 1171,176.9 1172,176.8 1173,176.8 1174,176.7 1175,176.6 1176,176.5 1177,176.4 1178,176.3 1179,176.2 1180,176.2 1181,176.1 1182,176 1183,175.4 1184,174.8 1185,174.1 1186,173.5 1187,173.4 1188,173.4 1189,173.3 1190,173.2 1191,173.2 1192,173.1 1193,173.1 1194,173 1195,172.9 1196,172.9 1197,172.8 1198,172.8 1199,172.7 1200,172.6 1201,172.6 1202,172.5 1203,172.2 1204,172 1205,171.8 1206,171.5 1207,171.2 1208,171 1209,171 1210,170.9 1211,170.9 1212,170.8 1213,170.8 1214,170.7 1215,170.7 1216,170.6 1217,170.6 1218,170.5 1219,170.5 1220,170.4 1221,170.4 1222,170.3 1223,170.3 1224,170.2 1225,170.2 1226,170.1 1227,170.1 1228,170 1229,170 1230,169.9 1231,169.9 1232,169.8 1233,169.8 1234,170 1235,170.3 1236,170.5 1237,170.5 1238,170.5 1239,170.4 1240,170.4 1241,170.4 1242,170.4 1243,170.4 1244,170.3 1245,170.3 1246,170.3 1247,170.3 1248,170.2 1249,170.2 1250,170.2 1251,170.2 1252,170.2 1253,170.1 1254,170.1 1255,170.1 1256,170.1 1257,170.1 1258,170 1259,170 1260,170 1261,170 1262,170 1263,169.9 1264,169.9 1265,169.9 1266,169.9 1267,169.9 1268,169.9 1269,169.8 1270,169.8 1271,169.8 1272,169.8 1273,169.8 1274,169.8 1275,169.7 1276,169.7 1277,169.7 1278,169.7 1279,169.7 1280,169.6 1281,169.6 1282,169.6 1283,169.6 1284,169.6 1285,169.6 1286,169.5 1287,169.5 1288,169.5 1289,169.5 1290,169.5 1291,169.4 1292,169.4 1293,169.4 1294,169.4 1295,169.4 1296,169.4 1297,169.3 1298,169.3 1299,169.3 1300,169.3 1301,169.3 1302,169.3 1303,169.2 1304,169.2 1305,169.2 1305.8,167.5 1306.7,165.8 1307.5,164.2 1308.3,162.5 1309.3,158.7 1310.3,154.8 1311.3,151 1312.3,147.1 1313.3,143.3 1314.3,140.8 1315.3,138.3 1316.3,135.8 1317.3,133.3 1318.3,130.8 1319.3,129.5 1320.2,128.1 1321.2,126.8 1322.1,125.5 1323.1,124.2 1324,122.8 1325,121.5 1326,120.8 1327,120 1328,119.2 1329,118.5 1330,117.8 1331,117 1332,116.2 1333,115.5 1334,114.8 1335,114 1336,113.8 1337,113.7 1338,113.5 1339,113.3 1340,113.2 1341,113 1342,112.8 1343,112.7 1344,112.5 1345,112.3 1346,112.2 1347,112 1348,111.8 1349,111.7 1350,111.5 1351,111.5 1352,111.5 1353,111.4 1354,111.4 1355,111.4 1356,111.4 1357,111.4 1358,111.3 1359,111.3 1360,111.3 1361,111.3 1362,111.2 1363,111.2 1364,111.2 1365,111.2 1366,111.2 1367,111.1 1368,111.1 1369,111.1 1370,111.1 1371,111.1 1372,111 1373,111 1374,111 1375,111 1376,110.9 1377,110.9 1378,110.9 1379,110.9 1380,110.9 1381,110.8 1382,110.8 1383,110.8 1384,110.8 1385,110.8 1386,110.8 1387,110.8 1388,110.8 1389,110.8 1390,110.8 1390.9,110.8 1391.9,110.8 1392.9,110.8 1393.9,110.8 1394.9,110.8 1395.9,110.8 1396.9,110.8 1397.9,110.8 1398.9,110.8 1399.9,110.8 1400.9,110.8 1401.9,110.8 1402.9,110.8 1403.9,110.8 1404.8,110.8 1405.8,110.8 1406.8,110.8 1407.8,110.8 1408.8,110.8 1409.8,110.8 1410.8,110.8 1411.8,110.8 1412.8,110.8 1413.8,110.8 1414.8,110.8 1415.8,110.8 1416.8,110.8 1417.8,110.8 1418.7,110.8 1419.7,110.8 1420.7,110.8 1421.7,110.8 1422.7,110.8 1423.7,110.8 1424.7,110.8 1425.7,110.8 1426.7,110.8 1427.7,110.8 1428.7,110.8 1429.7,110.8 1430.7,110.8 1431.7,110.8 1432.6,110.8 1433.6,110.8 1434.6,110.8 1435.6,110.8 1436.6,110.8 1437.6,110.8 1438.6,110.8 1439.6,110.8 1440.6,110.8 1441.6,110.8 1442.6,110.8 1443.6,110.8 1444.6,110.8 1445.6,110.8 1446.5,110.8 1447.5,110.8 1448.5,110.8 1449.5,110.8 1450.5,110.8 1451.5,110.8 1452.5,110.8 1453.5,110.8 1454.2,111.7 1455,112.5 1455.8,117.5 1456.7,122.5 1457.5,127.5 1458.3,130.6 1459.2,133.6 1460,136.7 1460.8,138.1 1461.7,139.6 1462.5,141.1 1463.3,142.5 1464.1,143.3 1465,144.2 1465.8,145 1466.7,145.9 1467.5,146.7 1468.5,147.8 1469.4,148.9 1470.4,150 1471.4,151.1 1472.3,152.2 1473.3,153.3 1474.2,154 1475.2,154.8 1476.1,155.5 1477,156.3 1478,157 1478.9,157.8 1479.8,158.5 1480.8,159.3 1481.7,160 1482.7,160.3 1483.7,160.7 1484.7,161 1485.7,161.3 1486.7,161.7 1487.7,162 1488.7,162.3 1489.7,162.6 1490.7,163 1491.7,163.3 1492.7,163.4 1493.7,163.6 1494.6,163.7 1495.6,163.9 1496.6,164 1497.6,164.2 1498.5,164.3 1499.5,164.5 1500.5,164.6 1501.5,164.8 1502.4,164.9 1503.4,165.1 1504.4,165.2 1505.4,165.4 1506.3,165.5 1507.3,165.7 1508.3,165.8 1509.3,165.8 1510.3,165.8 1511.3,165.9 1512.3,165.9 1513.3,165.9 1514.3,165.9 1515.3,166 1516.3,166 1517.3,166 1518.3,166 1519.2,166.1 1520.2,166.1 1521.2,166.1 1522.2,166.1 1523.2,166.2 1524.2,166.2 1525.2,166.2 1526.2,166.2 1527.2,166.3 1528.2,166.3 1529.2,166.3 1530,167.4 1530.8,168.5 1531.7,169.5 1532.5,170.6 1533.3,171.7 1534.1,172 1535,172.3 1535.8,172.7 1536.7,173 1537.5,173.3 1538.5,173.3 1539.4,173.2 1540.4,173.2 1541.4,173.2 1542.3,173.1 1543.3,173.1 1544.3,173.1 1545.2,173 1546.2,173 1547.2,173 1548.1,172.9 1549.1,172.9 1550.1,172.9 1551.1,172.9 1552,172.8 1553,172.8 1554,172.8 1554.9,172.7 1555.9,172.7 1556.9,172.7 1557.8,172.6 1558.8,172.6 1559.8,172.6 1560.7,172.5 1561.7,172.5 1562.3,172.5 1562.3,233.8 1563.2,234.5 1564,235.3 1564.9,236 1565.9,239.6 1566.9,243.3 1567.9,246.9 1568.9,250.5 1569.8,254.2 1570.8,257.8 1571.8,261.4 1572.8,265 1573.8,268.7 1574.8,272.3 1575.8,275.9 1576.8,279.6 1577.8,283.2 1578.8,286.8 1579.7,290.5 1580.7,294.1 1581.7,297.7 1582.7,301.4 1583.7,305 1584.7,308.6 1585.7,312.3 1586.7,315.9 1587.7,319.5 1588.7,323.1 1589.6,326.8 1590.6,330.4 1591.6,334 1592.6,337.7 1593.6,341.3 1594.6,344.9 1595.6,348.6 1596.6,352.2 1597.6,355.8 1598.5,359.5 1599.5,363.1 1600.5,366.7 1601.5,370.3 1602.5,374 1603.5,377.6 1604.5,381.2 1605.5,384.9 1606.5,388.5 1607.5,392.1 1608.4,395.8 1609.4,399.4 1610.4,403 1611.4,406.7 1612.4,410.3 1613.4,413.9 1614.4,417.6 1615.4,421.2 1616.4,424.8 1617.4,428.4 1618.3,432.1 1619.3,435.7 1620.3,439.3 1621.3,443 1622.3,446.6 1622.8,330.6 1623.4,342.3 1624,354 1624.9,364.7 1625.8,373.2 1626.6,381.7 1627.5,384.1 1628.3,386.4 1629.2,388.8 1630,391.1 1630.9,393.5 1631.7,392.5 1632.5,391.4 1633.4,390.4 1634.2,389.3 1635,388.3 1636,388.3 1637,388.4 1638,388.4 1639,388.5 1640,388.5 1641,388.5 1642,388.5 1643,388.5 1644,388.5 1645,388.5 1646,388.5 1647,388.5 1648,388.5 1649,388.5 1650,388.5 1651,388.5 1652,388.5 1653,388.5 1654,388.5 1655,388.5 1656,388.5 1657,388.5 1658,388.5 1659,388.5 1660,388.5 1661,388.5 1662,388.5 1663,388.5 1664,388.5 1665,388.5 1666,388.5 1667,388.5 1668,388.5 1669,388.5 1670,388.5 1671,388.5 1672,388.5 1673,388.5 1674,388.5 1675,388.5 1676,388.5 1677,388.5 1678,388.5 1679,388.5 1680,388.5 1681,388.5 1682,388.5 1683,388.5 1684,388.5 1685,388.5 1686,388.5 1687,388.5 1688,388.5 1689,388.5 1690,388.5 1691,388.5 1692,388.5 1693,388.5 1694,388.5 1695,388.5 1696,388.5 1697,388.5 1698,388.5 1699,388.5 1700,388.5 1701,388.5 1702,388.5 1703,388.5 1704,388.5 1705,388.5 1706,388.5 1707,388.5 1708,388.5 1709,388.5 1710,388.5 1711,388.5 1712,388.5 1713,388.5 1714,388.5 1715,388.5 1716,388.5 1717,388.5 1718,388.5 1719,388.5 1720,388.5 1721,388.5 1722,388.5 1723,388.5 1724,388.5 1725,388.5 1726,388.5 1727,388.5 1728,388.5 1729,388.5 1730,388.5 1731,388.5 1732,388.5 1733,388.5 1734,388.5 1735,388.5 1736,388.5 1737,388.5 1738,388.5 1739,388.5 1740,388.5 1741,388.5 1742,388.5 1743,388.5 1744,388.5 1745,388.5 1746,388.5 1747,388.5 1748,388.5 1749,388.5 1750,388.5 1751,388.5 1752,388.5 1753,388.5 1754,388.5 1755,388.5 1756,388.5 1757,388.5 1758,388.5 1759,388.5 1760,388.5 1761,388.5 1762,388.5 1763,388.5 1764,388.5 1765,388.5 1766,388.5 1767,388.5 1768,388.5 1769,388.5 1770,388.5 1771,388.5 1772,388.5 1773,388.5 1774,388.5 1775,388.5 1776,388.5 1777,388.5 1778,388.5 1779,388.5 1780,388.5 1781,388.5 1782,388.5 1783,388.5 1784,388.5 1785,388.5 1786,388.5 1787,388.5 1788,388.5 1789,388.5 1790,388.5 1791,388.5 1792,388.5 1793,388.5 1794,388.5 1795,388.5 1796,388.5 1797,388.5 1798,388.5 1799,388.5 1800,388.5 1801,388.5 1802,388.5 1803,388.5 1804,388.5 1805,388.5 1806,388.5 1807,388.5 1808,388.5 1809,388.5 1810,388.5 1811,388.5 1812,388.5 1813,388.5 1814,388.5 1815,388.5 1816,388.5 1817,388.5 1818,388.5 1819,388.5 1820,388.5 1821,388.5 1822,388.5 1823,388.5 1824,388.5 1825,388.5 1826,388.5 1827,388.5 1828,388.5 1829,388.5 1830,388.5 1831,388.5 1832,388.5 1833,388.5 1834,388.5 1835,388.5 1836,388.5 1837,388.5 1838,388.5 1839,388.5 1840,388.5 1841,388.5 1842,388.5 1843,388.5 1844,388.5 1845,388.5 1846,388.5 1847,388.5 1848,388.5 1849,388.5 1850,388.5 1851,388.5 1852,388.5 1853,388.5 1854,388.5 1855,388.5 1856,388.5 1857,388.5 1858,388.5 1859,388.5 1860,388.5 1861,388.5 1862,388.5 1863,388.5 1864,388.5 1865,388.5 1866,388.5 1867,388.5 1868,388.5 1869,388.5 1870,388.5 1871,388.5 1872,388.5 1873,388.5 1874,388.5 1875,388.5 1876,388.5 1877,388.5 1878,388.5 1879,388.5 1880,388.5 1881,388.5 1882,388.5 1883,388.5 1884,388.5 1885,388.5 1886,388.5 1887,388.5 1888,388.5 1889,388.5 1890,388.5 1891,388.5 1892,388.5 1893,388.5 1894,388.5 1895,388.5" fill="none" stroke="#2b8cf5" stroke-width="1.8" stroke-linejoin="round" /><polygon points="1163.9,162.7 1164.8,165.8 1165.8,168.9 1166.7,173.1 1167.5,173.5 1168.3,174.1 1169.2,175.7 1170,175.7 1171,175.8 1172,175.4 1173,175.4 1174,175.3 1175,175.4 1176,175.2 1177,175.4 1178,174.3 1179,175.4 1180,174.7 1181,175.1 1182,174.8 1183,174.3 1184,174.2 1185,172.8 1186,171.5 1187,172 1188,171.9 1189,172.5 1190,171.8 1191,171.8 1192,172.5 1193,172.2 1194,172.2 1195,172.1 1196,172.2 1197,171.3 1198,172 1199,171.8 1200,171 1201,171.4 1202,171.1 1203,171.5 1204,171.3 1205,171.1 1206,170.6 1207,170.4 1208,169.9 1209,170.4 1210,170.1 1211,169.7 1212,169.6 1213,170 1214,169.7 1215,169.4 1216,169.5 1217,169.5 1218,169.4 1219,169.9 1220,169.2 1221,169.6 1222,169.1 1223,169.3 1224,169.4 1225,169.5 1226,169.3 1227,169.1 1228,169.3 1229,168.5 1230,168.9 1231,168.5 1232,169.2 1233,168.6 1234,169 1235,169.5 1236,169.5 1237,169.7 1238,169.8 1239,169.6 1240,169.4 1241,169.2 1242,169.6 1243,169.2 1244,169.4 1245,168.7 1246,169 1247,169.6 1248,169.7 1249,168.8 1250,169.3 1251,169.4 1252,169 1253,169.4 1254,168.8 1255,168.8 1256,168.7 1257,169 1258,167.7 1259,169.4 1260,168.7 1261,169 1262,169.2 1263,168.9 1264,169.4 1265,169.3 1266,169.3 1267,168.7 1268,168.8 1269,168.3 1270,169 1271,169.3 1272,168.7 1273,169 1274,168.9 1275,168.6 1276,168.9 1277,169 1278,168.6 1279,168.8 1280,168.7 1281,168.5 1282,168.5 1283,168.8 1284,168.6 1285,168.6 1286,168.2 1287,168.1 1288,168.8 1289,168.4 1290,168.5 1291,168.7 1292,167.4 1293,168 1294,168.8 1295,168.1 1296,168.8 1297,168.7 1298,168.8 1299,168.3 1300,168 1301,168.4 1302,168.7 1303,168 1304,168.4 1305,168.1 1305.8,166 1306.7,164.4 1307.5,161.9 1308.3,161.1 1309.3,157.4 1309.3,160 1308.3,163.9 1307.5,165.4 1306.7,167.3 1305.8,168.6 1305,170.2 1304,170 1303,169.9 1302,170.7 1301,170.2 1300,170.1 1299,170.5 1298,170 1297,170.3 1296,170.7 1295,170.1 1294,170.9 1293,170 1292,170.7 1291,170.6 1290,170.9 1289,170.3 1288,170.2 1287,170 1286,170.4 1285,170.3 1284,170.5 1283,170.9 1282,170.2 1281,170.8 1280,170.6 1279,171.1 1278,170.5 1277,170.3 1276,170.6 1275,170.5 1274,170.6 1273,171.2 1272,170.3 1271,171 1270,170.6 1269,170.7 1268,171.3 1267,170.6 1266,170.5 1265,170.4 1264,170.7 1263,170.7 1262,171.2 1261,170.6 1260,170.6 1259,170.6 1258,171 1257,170.8 1256,171.2 1255,171 1254,171.3 1253,170.9 1252,171.5 1251,170.8 1250,171.5 1249,171.7 1248,171.4 1247,171.6 1246,171 1245,171.1 1244,171.8 1243,171.5 1242,171.5 1241,171.4 1240,171.6 1239,171.4 1238,171.7 1237,171.7 1236,171.1 1235,171.6 1234,171.4 1233,171.2 1232,171.3 1231,171.2 1230,170.5 1229,170.7 1228,171 1227,170.9 1226,171.4 1225,171.5 1224,171.2 1223,171.2 1222,171.3 1221,171.9 1220,171.8 1219,171.1 1218,171.8 1217,171.3 1216,171.8 1215,171.7 1214,171.7 1213,171.9 1212,171.8 1211,171.5 1210,172.1 1209,171.7 1208,172.2 1207,172 1206,172 1205,172.9 1204,172.5 1203,172.9 1202,174 1201,173.6 1200,173.2 1199,174.2 1198,173.4 1197,174 1196,174.2 1195,173.8 1194,174.1 1193,174.2 1192,173.8 1191,174.1 1190,174.5 1189,174.5 1188,174.8 1187,174.1 1186,174 1185,174.7 1184,175.9 1183,176 1182,176.5 1181,177.4 1180,177.2 1179,176.9 1178,177.6 1177,177.6 1176,177.9 1175,177.2 1174,177.8 1173,177.8 1172,178.2 1171,177.8 1170,178.1 1169.2,177.3 1168.3,176.8 1167.5,175.7 1166.7,175.4 1165.8,171.4 1164.8,168 1163.9,164.4" fill="#2b8cf5"/><polygon points="1320.2,124 1321.2,123 1322.1,121.5 1323.1,120.1 1324,120.1 1325,117.8 1326,118.2 1327,115.8 1328,114.5 1329,113.9 1330,115.1 1331,113.4 1332,113.1 1333,111.9 1334,110 1335,109.4 1336,110.5 1337,110.1 1338,110.1 1339,110.6 1340,110.5 1341,109.4 1342,108.5 1343,109.9 1344,109 1345,109 1346,108.3 1347,107.4 1348,107.7 1349,108.1 1350,108.4 1351,107.6 1352,106.5 1353,108.1 1354,108 1355,107.7 1356,108.8 1357,107.5 1358,106.5 1359,107.9 1360,106.4 1361,107.5 1362,108.1 1363,106.7 1364,107.5 1365,108.6 1366,106.6 1367,106.9 1368,107 1369,103.9 1370,107.7 1371,108.1 1372,105.4 1373,106 1374,107.6 1375,106.3 1376,108.2 1377,107.4 1378,107.4 1379,106.5 1380,106.5 1381,107.9 1382,108 1383,106.5 1384,107.4 1385,107.7 1386,107.5 1387,106.2 1388,107.6 1389,108.2 1390,107.5 1390.9,106.2 1391.9,107 1392.9,107 1393.9,107.5 1394.9,107.6 1395.9,107.4 1396.9,106.4 1397.9,107.2 1398.9,106.4 1399.9,107.6 1400.9,106.5 1401.9,106.9 1402.9,107.5 1403.9,106.9 1404.8,106.4 1405.8,106.3 1406.8,107.4 1407.8,106.6 1408.8,107.1 1409.8,107.4 1410.8,106 1411.8,106.5 1412.8,106.7 1413.8,106.1 1414.8,105.9 1415.8,105.8 1416.8,107.4 1417.8,106.3 1418.7,108.1 1419.7,106.7 1420.7,108.2 1421.7,107.6 1422.7,107.5 1423.7,106.2 1424.7,107 1425.7,106.9 1426.7,106.2 1427.7,107.7 1428.7,106.6 1429.7,108 1430.7,108 1431.7,108.2 1432.6,105.3 1433.6,107.4 1434.6,107.6 1435.6,107 1436.6,105.9 1437.6,108 1438.6,107.2 1439.6,107.8 1440.6,108.1 1441.6,107.2 1442.6,107.8 1443.6,107.7 1444.6,107.8 1445.6,107.6 1446.5,106.2 1447.5,106.4 1448.5,107.7 1449.5,106.8 1450.5,106.5 1451.5,107.2 1452.5,107 1453.5,106.2 1454.2,108.6 1455,108.3 1455.8,116.7 1456.7,122 1457.5,126.6 1458.3,129.3 1459.2,132.3 1460,135.7 1460.8,137.2 1461.7,137.4 1462.5,140.2 1463.3,141.6 1464.1,142.3 1465,142.9 1465.8,144 1466.7,144.5 1467.5,145.4 1468.5,147 1469.4,148.4 1470.4,148.5 1471.4,150.1 1472.3,151.7 1473.3,152.7 1474.2,152.8 1475.2,153.9 1476.1,154.6 1477,155.6 1478,155.5 1478.9,155.7 1479.8,158 1480.8,158 1481.7,158.8 1482.7,159.3 1483.7,159.8 1484.7,159.9 1485.7,160.5 1486.7,160.2 1487.7,161.5 1488.7,161.3 1489.7,161.7 1490.7,161.7 1491.7,161.9 1492.7,161.2 1493.7,162.3 1494.6,163.2 1495.6,162.6 1496.6,163.3 1497.6,163.3 1498.5,163.5 1499.5,163.6 1500.5,163.4 1501.5,164.1 1502.4,164.4 1503.4,164.1 1504.4,163.8 1505.4,164.3 1506.3,164.4 1507.3,164.3 1508.3,164.6 1509.3,165.2 1510.3,165.1 1511.3,164.8 1512.3,165 1513.3,165.2 1514.3,164.8 1515.3,164.8 1516.3,164.9 1517.3,164.8 1518.3,165.2 1519.2,165.2 1520.2,164.8 1521.2,165 1522.2,165.5 1523.2,165.4 1524.2,165.4 1525.2,165.3 1526.2,165 1527.2,165 1528.2,165.7 1529.2,165.2 1530,166.4 1530.8,167.3 1531.7,168.2 1532.5,170.1 1533.3,171 1534.1,170.8 1535,171.1 1535.8,171.4 1536.7,171.7 1537.5,172.7 1538.5,172.5 1539.4,172.3 1540.4,172.3 1541.4,172.3 1542.3,172.6 1543.3,171.9 1544.3,171.7 1545.2,171.9 1546.2,171.8 1547.2,171.8 1548.1,172 1549.1,171.9 1550.1,172.1 1551.1,171.8 1552,171.9 1553,171.8 1554,171.9 1554.9,172 1555.9,171.4 1556.9,172.1 1557.8,171.8 1558.8,171.2 1559.8,171.3 1560.7,171.3 1561.7,171.4 1561.7,173.8 1560.7,173.4 1559.8,173.9 1558.8,173.3 1557.8,174 1556.9,173.3 1555.9,173.4 1554.9,173.5 1554,173.6 1553,173.6 1552,174.1 1551.1,173.9 1550.1,174 1549.1,174.2 1548.1,173.5 1547.2,174.2 1546.2,173.9 1545.2,173.8 1544.3,174.2 1543.3,174.2 1542.3,174.4 1541.4,173.9 1540.4,174.2 1539.4,174.4 1538.5,173.8 1537.5,174.4 1536.7,173.8 1535.8,173.6 1535,173 1534.1,172.7 1533.3,173.2 1532.5,171.7 1531.7,170.2 1530.8,169.9 1530,168.5 1529.2,167.3 1528.2,167.7 1527.2,167.6 1526.2,167.2 1525.2,167.5 1524.2,167.1 1523.2,167.1 1522.2,167.3 1521.2,167.1 1520.2,167.1 1519.2,167.1 1518.3,166.8 1517.3,166.6 1516.3,167.2 1515.3,167.2 1514.3,167 1513.3,166.9 1512.3,167 1511.3,166.7 1510.3,167.2 1509.3,166.4 1508.3,166.9 1507.3,166.8 1506.3,166.5 1505.4,166.2 1504.4,166.6 1503.4,166 1502.4,166.4 1501.5,166.3 1500.5,165.6 1499.5,165.2 1498.5,165.2 1497.6,165.3 1496.6,165.1 1495.6,164.6 1494.6,165.1 1493.7,164.5 1492.7,164.8 1491.7,164.5 1490.7,163.8 1489.7,163.7 1488.7,163.4 1487.7,162.9 1486.7,162.9 1485.7,162.3 1484.7,162.2 1483.7,161.3 1482.7,161.1 1481.7,161.4 1480.8,160 1479.8,159.9 1478.9,158.6 1478,158.4 1477,157.5 1476.1,156.8 1475.2,155.5 1474.2,154.7 1473.3,154.1 1472.3,153.3 1471.4,152.3 1470.4,151 1469.4,149.5 1468.5,148.7 1467.5,147.8 1466.7,146.4 1465.8,146.3 1465,145.6 1464.1,144.6 1463.3,143.9 1462.5,141.7 1461.7,140.1 1460.8,138.7 1460,137.7 1459.2,134.5 1458.3,131.3 1457.5,128.4 1456.7,123.7 1455.8,118.7 1455,116.7 1454.2,116.1 1453.5,115.6 1452.5,115.2 1451.5,113.9 1450.5,115.6 1449.5,114 1448.5,114.4 1447.5,115 1446.5,114.1 1445.6,113.5 1444.6,114.4 1443.6,115.2 1442.6,114 1441.6,114.5 1440.6,115.1 1439.6,115.4 1438.6,115.4 1437.6,114.7 1436.6,113.4 1435.6,114.1 1434.6,115.2 1433.6,115.3 1432.6,114.4 1431.7,115.8 1430.7,114.1 1429.7,115.4 1428.7,115.6 1427.7,114 1426.7,114 1425.7,114.3 1424.7,113.7 1423.7,114.7 1422.7,113.5 1421.7,113.8 1420.7,114.7 1419.7,115.3 1418.7,113.4 1417.8,114.4 1416.8,113.3 1415.8,114.6 1414.8,114 1413.8,114.6 1412.8,115 1411.8,115.7 1410.8,115.4 1409.8,114.6 1408.8,113.4 1407.8,115.2 1406.8,113.7 1405.8,113.5 1404.8,114.1 1403.9,113.8 1402.9,115.7 1401.9,115.5 1400.9,113.4 1399.9,114.6 1398.9,114.3 1397.9,114.6 1396.9,115.1 1395.9,114.5 1394.9,113.6 1393.9,115.8 1392.9,114.6 1391.9,113.3 1390.9,114.1 1390,114.8 1389,114 1388,115.7 1387,114.9 1386,115.2 1385,113.6 1384,115 1383,115.1 1382,115.2 1381,113.9 1380,115.4 1379,115 1378,115.5 1377,113.9 1376,115 1375,115.8 1374,115.3 1373,114 1372,114.8 1371,114.2 1370,115.1 1369,114.1 1368,114.3 1367,114.2 1366,115.4 1365,113.9 1364,115 1363,114.5 1362,114 1361,114 1360,114.2 1359,114.3 1358,115.5 1357,113.9 1356,115.3 1355,115 1354,114.2 1353,116.2 1352,116.1 1351,115.5 1350,116.2 1349,114.5 1348,115.7 1347,115.5 1346,115 1345,116 1344,115.6 1343,116 1342,117.2 1341,117.5 1340,115.9 1339,117.9 1338,117 1337,116.9 1336,117.3 1335,118.2 1334,119.1 1333,120 1332,120.7 1331,120.4 1330,122 1329,121.6 1328,121.9 1327,124 1326,125.7 1325,124.8 1324,126.1 1323.1,127.5 1322.1,128.9 1321.2,129.9 1320.2,131.6" fill="#2b8cf5"/><path d="M1562.5 172V264" stroke="#2b8cf5" stroke-width="1.3"/><polyline points="1050.5,765.5 1051.5,765.5 1052.5,765.5 1053.5,765.5 1054.5,765.5 1055.5,765.5 1056.5,765.5 1057.5,765.5 1058.5,765.5 1059.5,765.5 1060.5,765.5 1061.5,765.5 1062.5,765.5 1063.5,765.5 1064.5,765.5 1065.5,765.5 1066.5,765.5 1067.5,765.5 1068.5,765.5 1069.5,765.5 1070.5,765.5 1071.4,765.5 1072.4,765.5 1073.4,765.5 1074.4,765.5 1075.4,765.5 1076.4,765.5 1077.4,765.5 1078.4,765.5 1079.4,765.5 1080.4,765.5 1081.4,765.5 1082.4,765.5 1083.4,765.5 1084.4,765.5 1085.4,765.5 1086.4,765.5 1087.4,765.5 1088.4,765.5 1089.4,765.5 1090.4,765.5 1090.4,627 1091.1,650 1092,650.9 1093,651.9 1093.9,652.8 1094.8,654.8 1095.7,656.9 1096.5,659 1097.4,661 1098.2,660 1099.1,659 1100,658 1100.8,657 1101.8,655.8 1102.8,654.6 1103.8,653.4 1104.8,652.2 1105.8,651 1106.8,649.8 1107.8,648.6 1108.7,647.8 1109.6,647.1 1110.5,646.3 1111.4,645.5 1112.4,644.8 1113.3,644 1114.2,643.2 1115.1,642.5 1116,641.7 1117,640.6 1118,639.5 1118.9,638.4 1119.9,637.3 1120.9,636.2 1121.9,635 1122.9,633.9 1123.8,632.8 1124.8,631.7 1125.8,630.6 1126.7,628.9 1127.7,627.1 1128.6,625.4 1129.5,623.7 1130.5,621.9 1131.4,620.2 1132.3,618.5 1133.3,616.7 1134.2,615 1135.2,614.1 1136.1,613.3 1137.1,612.4 1138.1,611.6 1139.1,610.7 1140,609.9 1141,609 1141.9,608.3 1142.9,607.6 1143.8,606.9 1144.7,606.2 1145.7,605.6 1146.6,604.9 1147.5,604.2 1148.5,603.5 1149.4,602.8 1150.4,601.7 1151.4,600.6 1152.3,599.5 1153.3,598.4 1154.3,597.2 1155.3,596.1 1156.3,595 1157.2,593.9 1158.2,592.8 1159.2,591.7 1159.4,591.7 1159.4,724.4 1160,707.2 1160.6,690 1161,706 1161.8,711.3 1162.5,716.7 1163.3,722 1163.8,729.8 1164.4,737.6 1165,744.3 1165.6,751 1166.4,756.2 1167.2,761.5 1168.1,761.5 1169.1,761.5 1170,761.5 1171,761.5 1171.9,761.5 1172.9,761.5 1173.8,761.5 1174.8,761.5 1175.7,761.5 1176.7,761.5 1177.6,761.5 1178.6,761.5 1179.5,761.5 1180.5,761.5 1181.4,761.5 1182.4,761.5 1183.3,761.5 1184.2,761 1185,760.5 1185.8,760 1186.7,759.5 1187.7,759.5 1188.6,759.5 1189.5,759.5 1190.5,759.5 1191.5,759.5 1192.4,759.5 1193.3,759.5 1194.3,759.5 1195.2,759.5 1196.2,759.5 1197.2,759.5 1198.1,759.5 1199,759.5 1200,759.5 1201,759.1 1202,758.6 1203,758.2 1204,757.7 1204.9,757.3 1205.9,756.8 1206.9,756.4 1207.9,755.9 1208.9,755.5 1209.9,755.4 1210.9,755.3 1211.8,755.1 1212.8,755 1213.8,754.9 1214.8,754.8 1215.7,754.7 1216.7,754.5 1217.7,754.4 1218.7,754.3 1219.6,754.2 1220.6,754.1 1221.6,753.9 1222.6,753.8 1223.5,753.7 1224.5,753.6 1225.5,753.5 1226.5,753.3 1227.4,753.2 1228.4,753.1 1229.4,753 1230.4,752.9 1231.3,752.7 1232.3,752.6 1233.3,752.5 1234.2,752 1235,751.5 1236,752.4 1237,753.2 1237.9,754.1 1238.9,755 1239.8,754.9 1240.8,754.8 1241.7,754.6 1242.6,754.5 1243.5,754.4 1244.5,754.2 1245.4,754.1 1246.3,754 1247.2,753.9 1248.2,753.8 1249.1,753.6 1250,753.5 1251,753.5 1252,753.4 1253,753.4 1253.9,753.4 1254.9,753.3 1255.9,753.3 1256.9,753.2 1257.9,753.2 1258.9,753.2 1259.9,753.1 1260.9,753.1 1261.8,753.1 1262.8,753 1263.8,753 1264.8,752.9 1265.8,752.9 1266.8,752.9 1267.8,752.8 1268.8,752.8 1269.7,752.8 1270.7,752.7 1271.7,752.7 1272.7,752.6 1273.7,752.6 1274.7,752.6 1275.7,752.5 1276.7,752.5 1277.6,752.5 1278.6,752.4 1279.6,752.4 1280.6,752.4 1281.6,752.3 1282.6,752.3 1283.6,752.2 1284.5,752.2 1285.5,752.2 1286.5,752.1 1287.5,752.1 1288.5,752.1 1289.5,752 1290.5,752 1291.5,751.9 1292.4,751.9 1293.4,751.9 1294.4,751.8 1295.4,751.8 1296.4,751.8 1297.4,751.7 1298.4,751.7 1299.4,751.6 1300.3,751.6 1301.3,751.6 1302.3,751.5 1303.3,751.5 1304.1,750.5 1304.8,749.5 1305.6,748.5 1306.3,746.3 1307.1,744.2 1307.8,742 1308.6,735 1309.4,728 1310.3,721 1311.1,714 1311.9,706.8 1312.8,699.5 1313.6,692.2 1314.4,685 1315.2,678.8 1316.1,672.5 1317,666.2 1317.8,660 1318.7,655.1 1319.6,650.2 1320.4,645.4 1321.3,640.5 1322.2,635.6 1323.1,634.2 1324,632.8 1325,631.4 1325.9,630 1326.8,628.6 1327.8,627.2 1328.7,625.9 1329.6,624.5 1330.5,623.1 1331.5,621.7 1332.4,620.3 1333.3,618.9 1334.3,618.4 1335.3,618 1336.2,617.5 1337.2,617 1338.2,616.6 1339.2,616.1 1340.2,615.6 1341.2,615.2 1342.1,614.7 1343.1,614.3 1344.1,613.8 1345.1,613.3 1346.1,612.9 1347.1,612.4 1348,611.9 1349,611.5 1350,611 1351,610.9 1352,610.8 1353,610.7 1354,610.6 1355,610.5 1356,610.4 1357,610.2 1357.9,610.1 1358.9,610 1359.9,609.9 1360.9,609.8 1361.9,609.7 1362.9,609.6 1363.9,609.5 1364.9,609.4 1365.9,609.3 1366.9,609.2 1367.9,609.1 1368.9,609 1369.9,608.9 1370.8,608.8 1371.8,608.6 1372.8,608.5 1373.8,608.4 1374.8,608.3 1375.8,608.2 1376.8,608.1 1377.8,608 1378.8,608 1379.8,607.9 1380.8,607.9 1381.8,607.9 1382.8,607.9 1383.8,607.8 1384.8,607.8 1385.7,607.8 1386.7,607.8 1387.7,607.7 1388.7,607.7 1389.7,607.7 1390.7,607.7 1391.7,607.6 1392.7,607.6 1393.7,607.6 1394.7,607.6 1395.7,607.5 1396.7,607.5 1397.7,607.5 1398.7,607.4 1399.7,607.4 1400.6,607.4 1401.6,607.4 1402.6,607.3 1403.6,607.3 1404.6,607.3 1405.6,607.3 1406.6,607.2 1407.6,607.2 1408.6,607.2 1409.6,607.2 1410.6,607.1 1411.6,607.1 1412.6,607.1 1413.6,607.1 1414.6,607 1415.5,607 1416.5,607 1417.5,606.9 1418.5,606.9 1419.5,606.9 1420.5,606.9 1421.5,606.8 1422.5,606.8 1423.5,606.8 1424.5,606.8 1425.5,606.7 1426.5,606.7 1427.5,606.7 1428.5,606.7 1429.5,606.6 1430.5,606.6 1431.4,606.6 1432.4,606.6 1433.4,606.5 1434.4,606.5 1435.4,606.5 1436.4,606.4 1437.4,606.4 1438.4,606.4 1439.4,606.4 1440.4,606.3 1441.4,606.3 1442.4,606.3 1443.4,606.3 1444.4,606.2 1445.4,606.2 1446.3,606.2 1447.3,606.2 1448.3,606.1 1449.3,606.1 1450.3,606.1 1451.3,606.1 1452.3,606 1453.3,606 1453.9,606.5 1454.6,607 1455.4,616.7 1456.2,626.3 1457,636 1457.8,644.8 1458.7,653.5 1459.6,662.2 1460.4,671 1461.3,673.9 1462.2,676.8 1463,679.6 1463.9,682.5 1464.8,686.7 1465.7,690.8 1466.7,695 1467.6,699.1 1468.5,703.3 1469.5,705.9 1470.5,708.6 1471.5,711.2 1472.5,713.9 1473.5,716.5 1474.5,719.2 1475.5,721.8 1476.4,723.2 1477.3,724.6 1478.3,726 1479.2,727.4 1480.1,728.8 1481,730.1 1481.9,731.5 1482.9,732.9 1483.8,734.3 1484.7,735.7 1485.7,736.3 1486.6,736.9 1487.6,737.4 1488.6,738 1489.5,738.6 1490.5,739.2 1491.5,739.7 1492.4,740.3 1493.4,740.9 1494.4,741.5 1495.3,742 1496.3,742.6 1497.3,742.8 1498.2,742.9 1499.2,743.1 1500.2,743.2 1501.2,743.4 1502.1,743.5 1503.1,743.7 1504.1,743.8 1505,744 1506,744.1 1507,744.3 1508,744.4 1508.9,744.6 1509.9,744.7 1510.9,744.9 1511.8,745 1512.8,745.2 1513.8,745.3 1514.7,745.5 1515.7,745.6 1516.7,745.8 1517.7,745.9 1518.6,746.1 1519.6,746.2 1520.6,746.4 1521.5,746.5 1522.5,746.7 1523.5,746.8 1524.5,747 1525.4,747.1 1526.4,747.3 1527.3,747.6 1528.2,747.8 1529,748.1 1529.9,748.4 1530.8,751 1531.6,753.7 1532.5,756.4 1533.3,759 1534.2,759.3 1535.2,759.6 1536.1,759.9 1537.1,760.2 1538,760.5 1539,760.5 1539.9,760.5 1540.9,760.5 1541.9,760.5 1542.9,760.5 1543.8,760.5 1544.8,760.5 1545.8,760.5 1546.7,760.5 1547.7,760.5 1548.7,760.5 1549.7,760.5 1550.6,760.5 1551.6,760.5 1552.6,760.5 1553.6,760.5 1554.5,760.5 1555.5,760.5 1556.5,760.5 1557.4,760.5 1558.4,760.5 1559.4,760.5 1560.4,760.5 1561.3,760.5 1562.3,760.5 1562.7,548.5 1563.4,627.2 1564.4,627.9 1565.4,628.5 1566.4,629.2 1567.4,629.9 1568.4,630.6 1569.4,631.2 1570.4,631.9 1571.4,632.4 1572.4,632.9 1573.4,633.4 1574.4,633.9 1575.4,634.4 1576.3,634.9 1577.3,635.4 1578.3,635.9 1579.3,636.4 1580.3,636.9 1581.3,637.3 1582.3,637.8 1583.3,638.3 1584.3,638.8 1585.3,639.3 1586.2,639.8 1587.2,640.3 1588.2,640.8 1589.2,641.3 1590.2,641.8 1591.2,642.3 1592.1,642.1 1593.1,641.8 1594,641.6 1594.9,641.4 1595.8,641.1 1596.8,640.9 1597.7,640.7 1598.6,640.5 1599.6,640.2 1600.5,640 1601.5,639.1 1602.4,638.2 1603.4,637.4 1604.3,636.5 1605.3,635.6 1606.2,634.8 1607.2,633.9 1608.2,633 1609.1,632.1 1610.1,631.2 1611,630.4 1612,629.5 1612.9,628.4 1613.9,627.2 1614.8,626 1615.7,624.9 1616.7,623.8 1617.6,622.6 1618.5,621.5 1619.4,620.3 1620.4,619.1 1621.3,618 1621.9,618 1622.5,618 1623.5,700 1624.2,725 1625,750 1625.8,755.8 1626.5,761.5 1627.3,767.3 1628.3,767.3 1629.3,767.3 1630.3,767.3 1631.3,767.3 1632.3,767.3 1633.3,767.3 1634.3,767.3 1635.3,767.3 1636.3,767.3 1637.3,767.3 1638.3,767.3 1639.3,767.3 1640.3,767.3 1641.3,767.3 1642.3,767.3 1643.3,767.3 1644.3,767.3 1645.3,767.3 1646.3,767.3 1647.3,767.3 1648.3,767.3 1649.3,767.3 1650.3,767.3 1651.3,767.3 1652.3,767.3 1653.3,767.3 1654.3,767.3 1655.3,767.3 1656.3,767.3 1657.3,767.3 1658.3,767.3 1659.3,767.3 1660.3,767.3 1661.3,767.3 1662.3,767.3 1663.3,767.3 1664.3,767.3 1665.3,767.3 1666.3,767.3 1667.3,767.3 1668.3,767.3 1669.3,767.3 1670.3,767.3 1671.3,767.3 1672.2,767.3 1673.2,767.3 1674.2,767.3 1675.2,767.3 1676.2,767.3 1677.2,767.3 1678.2,767.3 1679.2,767.3 1680.2,767.3 1681.2,767.3 1682.2,767.3 1683.2,767.3 1684.2,767.3 1685.2,767.3 1686.2,767.3 1687.2,767.3 1688.2,767.3 1689.2,767.3 1690.2,767.3 1691.2,767.3 1692.2,767.3 1693.2,767.3 1694.2,767.3 1695.2,767.3 1696.2,767.3 1697.2,767.3 1698.2,767.3 1699.2,767.3 1700.2,767.3 1701.2,767.3 1702.2,767.3 1703.2,767.3 1704.2,767.3 1705.2,767.3 1706.2,767.3 1707.2,767.3 1708.2,767.3 1709.2,767.3 1710.2,767.3 1711.2,767.3 1712.2,767.3 1713.2,767.3 1714.2,767.3 1715.2,767.3 1716.2,767.3 1717.2,767.3 1718.2,767.3 1719.2,767.3 1720.2,767.3 1721.2,767.3 1722.2,767.3 1723.2,767.3 1724.2,767.3 1725.2,767.3 1726.2,767.3 1727.2,767.3 1728.2,767.3 1729.2,767.3 1730.2,767.3 1731.2,767.3 1732.2,767.3 1733.2,767.3 1734.2,767.3 1735.2,767.3 1736.2,767.3 1737.2,767.3 1738.2,767.3 1739.2,767.3 1740.2,767.3 1741.2,767.3 1742.2,767.3 1743.2,767.3 1744.2,767.3 1745.2,767.3 1746.2,767.3 1747.2,767.3 1748.2,767.3 1749.2,767.3 1750.2,767.3 1751.2,767.3 1752.2,767.3 1753.2,767.3 1754.2,767.3 1755.2,767.3 1756.2,767.3 1757.2,767.3 1758.2,767.3 1759.2,767.3 1760.2,767.3 1761.2,767.3 1762.1,767.3 1763.1,767.3 1764.1,767.3 1765.1,767.3 1766.1,767.3 1767.1,767.3 1768.1,767.3 1769.1,767.3 1770.1,767.3 1771.1,767.3 1772.1,767.3 1773.1,767.3 1774.1,767.3 1775.1,767.3 1776.1,767.3 1777.1,767.3 1778.1,767.3 1779.1,767.3 1780.1,767.3 1781.1,767.3 1782.1,767.3 1783.1,767.3 1784.1,767.3 1785.1,767.3 1786.1,767.3 1787.1,767.3 1788.1,767.3 1789.1,767.3 1790.1,767.3 1791.1,767.3 1792.1,767.3 1793.1,767.3 1794.1,767.3 1795.1,767.3 1796.1,767.3 1797.1,767.3 1798.1,767.3 1799.1,767.3 1800.1,767.3 1801.1,767.3 1802.1,767.3 1803.1,767.3 1804.1,767.3 1805.1,767.3 1806.1,767.3 1807.1,767.3 1808.1,767.3 1809.1,767.3 1810.1,767.3 1811.1,767.3 1812.1,767.3 1813.1,767.3 1814.1,767.3 1815.1,767.3 1816.1,767.3 1817.1,767.3 1818.1,767.3 1819.1,767.3 1820.1,767.3 1821.1,767.3 1822.1,767.3 1823.1,767.3 1824.1,767.3 1825.1,767.3 1826.1,767.3 1827.1,767.3 1828.1,767.3 1829.1,767.3 1830.1,767.3 1831.1,767.3 1832.1,767.3 1833.1,767.3 1834.1,767.3 1835.1,767.3 1836.1,767.3 1837.1,767.3 1838.1,767.3 1839.1,767.3 1840.1,767.3 1841.1,767.3 1842.1,767.3 1843.1,767.3 1844.1,767.3 1845.1,767.3 1846.1,767.3 1847.1,767.3 1848.1,767.3 1849.1,767.3 1850.1,767.3 1851,767.3 1852,767.3 1853,767.3 1854,767.3 1855,767.3 1856,767.3 1857,767.3 1858,767.3 1859,767.3 1860,767.3 1861,767.3 1862,767.3 1863,767.3 1864,767.3 1865,767.3 1866,767.3 1867,767.3 1868,767.3 1869,767.3 1870,767.3 1871,767.3 1872,767.3 1873,767.3 1874,767.3 1875,767.3 1876,767.3 1877,767.3 1878,767.3 1879,767.3 1880,767.3 1881,767.3 1882,767.3 1883,767.3 1884,767.3 1885,767.3 1886,767.3 1887,767.3 1888,767.3 1889,767.3 1890,767.3 1891,767.3 1892,767.3 1893,767.3 1894,767.3 1895,767.3" fill="none" stroke="#9fcc24" stroke-width="1.5" stroke-linejoin="round" /><polygon points="1093.9,649.7 1094.8,650.3 1095.7,652.1 1096.5,654.6 1097.4,657 1098.2,656.5 1099.1,656.4 1100,653.5 1100.8,653.6 1101.8,651.4 1102.8,651 1103.8,648.6 1104.8,647.6 1105.8,648.1 1106.8,647.3 1107.8,645.6 1108.7,643.1 1109.6,643.7 1110.5,641.9 1111.4,641 1112.4,639.9 1113.3,640.2 1114.2,637.4 1115.1,639.7 1116,637.8 1117,636.3 1118,634.5 1118.9,634.5 1119.9,633.4 1120.9,632.4 1121.9,631.5 1122.9,628.3 1123.8,628.6 1124.8,628 1125.8,626.3 1126.7,625.2 1127.7,623.9 1128.6,621 1129.5,620.2 1130.5,617.8 1131.4,616.7 1132.3,614.5 1133.3,612.1 1134.2,612.4 1135.2,611.5 1136.1,608.9 1137.1,609.7 1138.1,607.1 1139.1,607.5 1140,605.9 1141,605.4 1141.9,605.5 1142.9,602.8 1143.8,602.5 1144.7,602.3 1145.7,601.7 1146.6,600 1147.5,601.5 1148.5,599.7 1149.4,598.7 1150.4,596.7 1151.4,596.1 1152.3,596.8 1153.3,595.3 1154.3,594.2 1155.3,593.4 1156.3,588.7 1157.2,590.7 1158.2,588.3 1158.2,596.1 1157.2,596.6 1156.3,597.6 1155.3,599.8 1154.3,600.2 1153.3,602.9 1152.3,602.1 1151.4,605.4 1150.4,606.2 1149.4,606.8 1148.5,607.4 1147.5,609.1 1146.6,609.5 1145.7,609.1 1144.7,610.3 1143.8,609.8 1142.9,611.7 1141.9,612.2 1141,613.3 1140,612.4 1139.1,615.1 1138.1,614.4 1137.1,616.1 1136.1,615.8 1135.2,617.3 1134.2,619.4 1133.3,619.8 1132.3,621 1131.4,624.6 1130.5,626.1 1129.5,627 1128.6,628.9 1127.7,631.6 1126.7,631.4 1125.8,634.8 1124.8,636.6 1123.8,637.1 1122.9,638.8 1121.9,639.5 1120.9,639 1119.9,642 1118.9,642.4 1118,642.1 1117,644.6 1116,646.3 1115.1,646.4 1114.2,647.8 1113.3,648.5 1112.4,648.9 1111.4,650 1110.5,650.4 1109.6,650.7 1108.7,651.7 1107.8,653.5 1106.8,653.4 1105.8,656 1104.8,656.7 1103.8,658.4 1102.8,659.2 1101.8,658.8 1100.8,661.5 1100,660.9 1099.1,662.1 1098.2,665 1097.4,664.4 1096.5,662.8 1095.7,660.4 1094.8,657.9 1093.9,656.6" fill="#9fcc24"/><polygon points="1167.2,760.5 1168.1,760.5 1169.1,760.5 1170,760.5 1171,760.5 1171.9,760.5 1172.9,760.5 1173.8,760.5 1174.8,760.5 1175.7,760.5 1176.7,760.5 1177.6,760.5 1178.6,760.5 1179.5,760.5 1180.5,760.5 1181.4,760.5 1182.4,760.5 1183.3,760.5 1184.2,760 1185,759.5 1185.8,759 1186.7,758.5 1187.7,758.5 1188.6,758.5 1189.5,758.5 1190.5,758.5 1191.5,758.5 1192.4,758.5 1193.3,758.5 1194.3,758.5 1195.2,758.5 1196.2,758.5 1197.2,758.5 1198.1,758.5 1199,758.5 1200,758.5 1201,758.1 1202,757.6 1203,757.2 1204,756.7 1204.9,756.3 1205.9,755.8 1206.9,755.4 1207.9,754.9 1208.9,754.5 1209.9,754.4 1210.9,754.3 1211.8,754.1 1212.8,754 1213.8,753.9 1214.8,753.8 1215.7,753.7 1216.7,753.5 1217.7,753.4 1218.7,753.3 1219.6,753.2 1220.6,753.1 1221.6,752.9 1222.6,752.8 1223.5,752.7 1224.5,752.6 1225.5,752.5 1226.5,752.3 1227.4,752.2 1228.4,752.1 1229.4,752 1230.4,751.9 1231.3,751.7 1232.3,751.6 1233.3,751.5 1234.2,751 1235,750.5 1236,751.4 1237,752.2 1237.9,753.1 1238.9,754 1239.8,753.9 1240.8,753.8 1241.7,753.6 1242.6,753.5 1243.5,753.4 1244.5,753.2 1245.4,753.1 1246.3,753 1247.2,752.9 1248.2,752.8 1249.1,752.6 1250,752.5 1251,752.5 1252,752.4 1253,752.4 1253.9,752.4 1254.9,752.3 1255.9,752.3 1256.9,752.2 1257.9,752.2 1258.9,752.2 1259.9,752.1 1260.9,752.1 1261.8,752.1 1262.8,752 1263.8,752 1264.8,751.9 1265.8,751.9 1266.8,751.9 1267.8,751.8 1268.8,751.8 1269.7,751.8 1270.7,751.7 1271.7,751.7 1272.7,751.6 1273.7,751.6 1274.7,751.6 1275.7,751.5 1276.7,751.5 1277.6,751.5 1278.6,751.4 1279.6,751.4 1280.6,751.4 1281.6,751.3 1282.6,751.3 1283.6,751.2 1284.5,751.2 1285.5,751.2 1286.5,751.1 1287.5,751.1 1288.5,751.1 1289.5,751 1290.5,751 1291.5,750.9 1292.4,750.9 1293.4,750.9 1294.4,750.8 1295.4,750.8 1296.4,750.8 1297.4,750.7 1298.4,750.7 1299.4,750.6 1300.3,750.6 1301.3,750.6 1302.3,750.5 1303.3,750.5 1304.1,749.5 1304.8,748.5 1304.8,750.5 1304.1,751.5 1303.3,752.5 1302.3,752.5 1301.3,752.6 1300.3,752.6 1299.4,752.6 1298.4,752.7 1297.4,752.7 1296.4,752.8 1295.4,752.8 1294.4,752.8 1293.4,752.9 1292.4,752.9 1291.5,752.9 1290.5,753 1289.5,753 1288.5,753.1 1287.5,753.1 1286.5,753.1 1285.5,753.2 1284.5,753.2 1283.6,753.2 1282.6,753.3 1281.6,753.3 1280.6,753.4 1279.6,753.4 1278.6,753.4 1277.6,753.5 1276.7,753.5 1275.7,753.5 1274.7,753.6 1273.7,753.6 1272.7,753.6 1271.7,753.7 1270.7,753.7 1269.7,753.8 1268.8,753.8 1267.8,753.8 1266.8,753.9 1265.8,753.9 1264.8,753.9 1263.8,754 1262.8,754 1261.8,754.1 1260.9,754.1 1259.9,754.1 1258.9,754.2 1257.9,754.2 1256.9,754.2 1255.9,754.3 1254.9,754.3 1253.9,754.4 1253,754.4 1252,754.4 1251,754.5 1250,754.5 1249.1,754.6 1248.2,754.8 1247.2,754.9 1246.3,755 1245.4,755.1 1244.5,755.2 1243.5,755.4 1242.6,755.5 1241.7,755.6 1240.8,755.8 1239.8,755.9 1238.9,756 1237.9,755.1 1237,754.2 1236,753.4 1235,752.5 1234.2,753 1233.3,753.5 1232.3,753.6 1231.3,753.7 1230.4,753.9 1229.4,754 1228.4,754.1 1227.4,754.2 1226.5,754.3 1225.5,754.5 1224.5,754.6 1223.5,754.7 1222.6,754.8 1221.6,754.9 1220.6,755.1 1219.6,755.2 1218.7,755.3 1217.7,755.4 1216.7,755.5 1215.7,755.7 1214.8,755.8 1213.8,755.9 1212.8,756 1211.8,756.1 1210.9,756.3 1209.9,756.4 1208.9,756.5 1207.9,756.9 1206.9,757.4 1205.9,757.8 1204.9,758.3 1204,758.7 1203,759.2 1202,759.6 1201,760.1 1200,760.5 1199,760.5 1198.1,760.5 1197.2,760.5 1196.2,760.5 1195.2,760.5 1194.3,760.5 1193.3,760.5 1192.4,760.5 1191.5,760.5 1190.5,760.5 1189.5,760.5 1188.6,760.5 1187.7,760.5 1186.7,760.5 1185.8,761 1185,761.5 1184.2,762 1183.3,762.5 1182.4,762.5 1181.4,762.5 1180.5,762.5 1179.5,762.5 1178.6,762.5 1177.6,762.5 1176.7,762.5 1175.7,762.5 1174.8,762.5 1173.8,762.5 1172.9,762.5 1171.9,762.5 1171,762.5 1170,762.5 1169.1,762.5 1168.1,762.5 1167.2,762.5" fill="#9fcc24"/><polygon points="1320.4,635.4 1321.3,632.4 1322.2,625.4 1323.1,628.1 1324,625.1 1325,623.9 1325.9,623.9 1326.8,622.1 1327.8,619.8 1328.7,618 1329.6,615.6 1330.5,615.9 1331.5,612.7 1332.4,610.5 1333.3,612.3 1334.3,610.8 1335.3,609.7 1336.2,609.9 1337.2,610.3 1338.2,607.2 1339.2,608.7 1340.2,608.6 1341.2,608.6 1342.1,606.3 1343.1,607.5 1344.1,605.1 1345.1,604.4 1346.1,604.9 1347.1,606 1348,601 1349,605.1 1350,603.7 1351,604.5 1352,602.5 1353,604.6 1354,602.7 1355,601.6 1356,601.9 1357,602.2 1357.9,603.9 1358.9,601.8 1359.9,602.7 1360.9,602.9 1361.9,601.7 1362.9,603.2 1363.9,602.4 1364.9,602.1 1365.9,602 1366.9,601.5 1367.9,600.9 1368.9,602.7 1369.9,602 1370.8,600.7 1371.8,600.7 1372.8,600.8 1373.8,599.5 1374.8,599.9 1375.8,599.5 1376.8,599.1 1377.8,601.1 1378.8,600.6 1379.8,601.2 1380.8,599.4 1381.8,600.4 1382.8,601 1383.8,600.4 1384.8,600 1385.7,601.1 1386.7,600.2 1387.7,599.3 1388.7,600.8 1389.7,598.8 1390.7,599.7 1391.7,599 1392.7,599 1393.7,600.5 1394.7,600.4 1395.7,601 1396.7,600.7 1397.7,599.7 1398.7,599.8 1399.7,599.9 1400.6,600.2 1401.6,600.9 1402.6,595.4 1403.6,600.3 1404.6,600.6 1405.6,600.1 1406.6,600.7 1407.6,601.1 1408.6,599 1409.6,599.5 1410.6,598.9 1411.6,598.3 1412.6,599.5 1413.6,600.9 1414.6,599.9 1415.5,600.1 1416.5,600.7 1417.5,599.3 1418.5,599.4 1419.5,598.9 1420.5,600.2 1421.5,598.4 1422.5,599.7 1423.5,598.5 1424.5,598.2 1425.5,599.6 1426.5,600.5 1427.5,598.1 1428.5,599.2 1429.5,598.5 1430.5,598.7 1431.4,598.1 1432.4,600.5 1433.4,598.6 1434.4,599.9 1435.4,598 1436.4,600.1 1437.4,600 1438.4,600.1 1439.4,600 1440.4,598.4 1441.4,599.5 1442.4,599.9 1443.4,598.1 1444.4,597.6 1445.4,599 1446.3,597.7 1447.3,600.1 1448.3,599.4 1449.3,598 1450.3,599.7 1451.3,598.4 1452.3,597.9 1453.3,599.3 1453.9,597.5 1454.6,600.9 1454.6,614.3 1453.9,614.4 1453.3,613.8 1452.3,614.3 1451.3,612.6 1450.3,614.4 1449.3,613.6 1448.3,614.5 1447.3,614.1 1446.3,614 1445.4,614.9 1444.4,613.7 1443.4,613 1442.4,612.8 1441.4,612.7 1440.4,615 1439.4,614 1438.4,613.9 1437.4,613.3 1436.4,615 1435.4,613.4 1434.4,612.6 1433.4,614.6 1432.4,613.9 1431.4,613 1430.5,614.5 1429.5,613.9 1428.5,614.2 1427.5,615.3 1426.5,614 1425.5,614 1424.5,613.6 1423.5,613.6 1422.5,615.4 1421.5,613 1420.5,613.7 1419.5,614.3 1418.5,615.9 1417.5,615.2 1416.5,615.8 1415.5,614.3 1414.6,614.2 1413.6,613.3 1412.6,614.5 1411.6,615.3 1410.6,614.2 1409.6,614.5 1408.6,615 1407.6,613.3 1406.6,616.2 1405.6,613.8 1404.6,615.9 1403.6,614.8 1402.6,614.5 1401.6,614.5 1400.6,616 1399.7,616.3 1398.7,615.8 1397.7,613.9 1396.7,615.1 1395.7,614.6 1394.7,615.6 1393.7,614.6 1392.7,616.2 1391.7,615.1 1390.7,615.1 1389.7,615.3 1388.7,616.2 1387.7,614 1386.7,614.8 1385.7,614.3 1384.8,615.4 1383.8,615.6 1382.8,616.8 1381.8,616.8 1380.8,615 1379.8,615.9 1378.8,616.9 1377.8,616.5 1376.8,615.5 1375.8,615.8 1374.8,616.9 1373.8,616.7 1372.8,615 1371.8,617.4 1370.8,614.8 1369.9,616.2 1368.9,615.6 1367.9,615.8 1366.9,617.5 1365.9,616.5 1364.9,616.7 1363.9,617.9 1362.9,616.7 1361.9,616.1 1360.9,617.9 1359.9,618.4 1358.9,618.9 1357.9,617.6 1357,617.1 1356,616.4 1355,616.6 1354,619.1 1353,617.8 1352,618.1 1351,619.7 1350,618.6 1349,619.9 1348,618.3 1347.1,619.6 1346.1,621.1 1345.1,622 1344.1,622.6 1343.1,620.4 1342.1,621.2 1341.2,622.4 1340.2,622.1 1339.2,623.8 1338.2,624 1337.2,623.1 1336.2,624.6 1335.3,626.9 1334.3,625.7 1333.3,626.2 1332.4,626.6 1331.5,629.1 1330.5,630.4 1329.6,632 1328.7,634.7 1327.8,634.7 1326.8,636.1 1325.9,636.8 1325,637.7 1324,639.2 1323.1,640.8 1322.2,643.1 1321.3,648.2 1320.4,653.7" fill="#9fcc24"/><polygon points="1460.4,670 1461.3,672.9 1462.2,675.8 1463,678.6 1463.9,681.5 1464.8,685.7 1465.7,689.8 1466.7,694 1467.6,698.1 1468.5,702.3 1469.5,704.9 1470.5,707.6 1471.5,710.2 1472.5,712.9 1473.5,715.5 1474.5,718.2 1475.5,720.8 1476.4,722.2 1477.3,723.6 1478.3,725 1479.2,726.4 1480.1,727.8 1481,729.1 1481.9,730.5 1482.9,731.9 1483.8,733.3 1484.7,734.7 1485.7,735.3 1486.6,735.9 1487.6,736.4 1488.6,737 1489.5,737.6 1490.5,738.2 1491.5,738.7 1492.4,739.3 1493.4,739.9 1494.4,740.5 1495.3,741 1496.3,741.6 1497.3,741.8 1498.2,741.9 1499.2,742.1 1500.2,742.2 1501.2,742.4 1502.1,742.5 1503.1,742.7 1504.1,742.8 1505,743 1506,743.1 1507,743.3 1508,743.4 1508.9,743.6 1509.9,743.7 1510.9,743.9 1511.8,744 1512.8,744.2 1513.8,744.3 1514.7,744.5 1515.7,744.6 1516.7,744.8 1517.7,744.9 1518.6,745.1 1519.6,745.2 1520.6,745.4 1521.5,745.5 1522.5,745.7 1523.5,745.8 1524.5,746 1525.4,746.1 1526.4,746.3 1527.3,746.6 1528.2,746.8 1529,747.1 1529.9,747.4 1530.8,750 1531.6,752.7 1532.5,755.4 1533.3,758 1534.2,758.3 1535.2,758.6 1536.1,758.9 1537.1,759.2 1538,759.5 1539,759.5 1539.9,759.5 1540.9,759.5 1541.9,759.5 1542.9,759.5 1543.8,759.5 1544.8,759.5 1545.8,759.5 1546.7,759.5 1547.7,759.5 1548.7,759.5 1549.7,759.5 1550.6,759.5 1551.6,759.5 1552.6,759.5 1553.6,759.5 1554.5,759.5 1555.5,759.5 1556.5,759.5 1557.4,759.5 1558.4,759.5 1559.4,759.5 1560.4,759.5 1561.3,759.5 1561.3,761.5 1560.4,761.5 1559.4,761.5 1558.4,761.5 1557.4,761.5 1556.5,761.5 1555.5,761.5 1554.5,761.5 1553.6,761.5 1552.6,761.5 1551.6,761.5 1550.6,761.5 1549.7,761.5 1548.7,761.5 1547.7,761.5 1546.7,761.5 1545.8,761.5 1544.8,761.5 1543.8,761.5 1542.9,761.5 1541.9,761.5 1540.9,761.5 1539.9,761.5 1539,761.5 1538,761.5 1537.1,761.2 1536.1,760.9 1535.2,760.6 1534.2,760.3 1533.3,760 1532.5,757.4 1531.6,754.7 1530.8,752 1529.9,749.4 1529,749.1 1528.2,748.8 1527.3,748.6 1526.4,748.3 1525.4,748.1 1524.5,748 1523.5,747.8 1522.5,747.7 1521.5,747.5 1520.6,747.4 1519.6,747.2 1518.6,747.1 1517.7,746.9 1516.7,746.8 1515.7,746.6 1514.7,746.5 1513.8,746.3 1512.8,746.2 1511.8,746 1510.9,745.9 1509.9,745.7 1508.9,745.6 1508,745.4 1507,745.3 1506,745.1 1505,745 1504.1,744.8 1503.1,744.7 1502.1,744.5 1501.2,744.4 1500.2,744.2 1499.2,744.1 1498.2,743.9 1497.3,743.8 1496.3,743.6 1495.3,743 1494.4,742.5 1493.4,741.9 1492.4,741.3 1491.5,740.7 1490.5,740.2 1489.5,739.6 1488.6,739 1487.6,738.4 1486.6,737.9 1485.7,737.3 1484.7,736.7 1483.8,735.3 1482.9,733.9 1481.9,732.5 1481,731.1 1480.1,729.8 1479.2,728.4 1478.3,727 1477.3,725.6 1476.4,724.2 1475.5,722.8 1474.5,720.2 1473.5,717.5 1472.5,714.9 1471.5,712.2 1470.5,709.6 1469.5,706.9 1468.5,704.3 1467.6,700.1 1466.7,696 1465.7,691.8 1464.8,687.7 1463.9,683.5 1463,680.6 1462.2,677.8 1461.3,674.9 1460.4,672" fill="#9fcc24"/><polygon points="1564.4,626.6 1565.4,626.5 1566.4,628 1567.4,627.7 1568.4,628.6 1569.4,629.1 1570.4,629.4 1571.4,630.4 1572.4,630.9 1573.4,631.7 1574.4,632.8 1575.4,631.9 1576.3,632.5 1577.3,633.7 1578.3,634.7 1579.3,635.2 1580.3,634.8 1581.3,634.9 1582.3,635.7 1583.3,636.1 1584.3,636.4 1585.3,637.5 1586.2,638.1 1587.2,638.3 1588.2,638.9 1589.2,639 1590.2,639.6 1591.2,640.6 1592.1,640.8 1593.1,639.4 1594,639.5 1594.9,639.9 1595.8,638.5 1596.8,639.5 1597.7,638.3 1598.6,639.1 1599.6,639.2 1600.5,637.3 1601.5,637.4 1602.4,635.9 1603.4,635.2 1604.3,634.3 1605.3,633.6 1606.2,632.3 1607.2,631.2 1608.2,631.9 1609.1,629.7 1610.1,629.8 1611,628.3 1612,627.9 1612.9,626.9 1613.9,625.5 1614.8,623.6 1615.7,622.8 1616.7,622.4 1617.6,620.7 1618.5,619.7 1619.4,618.9 1620.4,616.8 1620.4,621.2 1619.4,622.5 1618.5,623.6 1617.6,623.8 1616.7,625 1615.7,626 1614.8,627.3 1613.9,629 1612.9,630.3 1612,631.2 1611,631.5 1610.1,633.4 1609.1,633.5 1608.2,634.5 1607.2,635.5 1606.2,636.6 1605.3,636.9 1604.3,637.9 1603.4,638.6 1602.4,640.3 1601.5,641.1 1600.5,642 1599.6,642.6 1598.6,641.9 1597.7,643 1596.8,642.6 1595.8,643.1 1594.9,642.6 1594,642.8 1593.1,643.8 1592.1,644.3 1591.2,643.9 1590.2,643.1 1589.2,643.2 1588.2,642.5 1587.2,642.2 1586.2,641.9 1585.3,641.1 1584.3,641.1 1583.3,639.6 1582.3,638.9 1581.3,639 1580.3,639 1579.3,637.9 1578.3,637.9 1577.3,636.5 1576.3,636.4 1575.4,636.3 1574.4,635.7 1573.4,635.1 1572.4,634.2 1571.4,634.5 1570.4,634 1569.4,632.3 1568.4,631.6 1567.4,631.9 1566.4,631.3 1565.4,630.8 1564.4,629.9" fill="#9fcc24"/><polyline points="1050.5,762 1051.5,762 1052.5,762 1053.5,762 1054.5,762 1055.5,762 1056.5,762 1057.5,762 1058.5,762 1059.5,762 1060.5,762 1061.4,762 1062.4,762 1063.4,762 1064.4,762 1065.4,762 1066.4,762 1067.4,762 1068.4,762 1069.4,762 1070.4,762 1071.4,762 1072.4,762 1073.4,762 1074.4,762 1075.4,762 1076.4,762 1077.4,762 1078.4,762 1079.4,762 1080.3,762 1081.3,762 1082.3,762 1083.3,762 1084.3,762 1085.3,762 1086.3,762 1087.3,762 1088.3,762 1089.3,762 1090.3,762 1091.3,721 1092.2,680 1093.2,639 1093.9,628.7 1094.6,618.3 1095.3,608 1096,597.8 1096.7,587.5 1097.5,585.8 1098.3,584.1 1099.2,582.4 1100,580.7 1100.8,579 1101.8,577.6 1102.8,576.3 1103.8,574.9 1104.8,573.5 1105.8,572.1 1106.8,570.8 1107.8,569.4 1108.7,568.3 1109.6,567.2 1110.5,566.2 1111.4,565.1 1112.4,564 1113.3,562.9 1114.2,561.9 1115.1,560.8 1116,559.7 1117,558.9 1118,558 1118.9,557.2 1119.9,556.4 1120.9,555.5 1121.9,554.7 1122.9,553.9 1123.8,553.1 1124.8,552.2 1125.8,551.4 1126.8,550.7 1127.8,550 1128.7,549.3 1129.7,548.6 1130.7,547.9 1131.7,547.2 1132.7,546.5 1133.6,545.8 1134.6,545.1 1135.6,544.4 1136.5,544.1 1137.4,543.7 1138.4,543.4 1139.3,543 1140.2,542.7 1141.2,542.3 1142.1,542 1143,541.7 1143.9,541.3 1144.8,541 1145.8,540.6 1146.7,540.3 1147.6,540.1 1148.6,539.8 1149.5,539.6 1150.5,539.4 1151.4,539.1 1152.3,538.9 1153.3,538.7 1154.2,538.4 1155.2,538.2 1156.1,538 1157.1,537.7 1158,537.5 1158.7,537.5 1159.4,537.5 1159.4,586 1160,635.8 1160.6,685.6 1161,702 1161.8,707.3 1162.5,712.7 1163.3,718 1163.8,726 1164.4,734 1165,740.8 1165.6,747.5 1166.4,752.8 1167.2,758 1168.1,758 1169.1,758 1170,758 1171,758 1171.9,758 1172.9,758 1173.8,758 1174.8,758 1175.7,758 1176.7,758 1177.6,758 1178.6,758 1179.5,758 1180.5,758 1181.4,758 1182.4,758 1183.3,758 1184.2,757.5 1185,757 1185.8,756.5 1186.7,756 1187.7,756 1188.6,756 1189.5,756 1190.5,756 1191.5,756 1192.4,756 1193.3,756 1194.3,756 1195.2,756 1196.2,756 1197.2,756 1198.1,756 1199,756 1200,756 1201,755.6 1202,755.1 1203,754.7 1204,754.2 1204.9,753.8 1205.9,753.3 1206.9,752.9 1207.9,752.4 1208.9,752 1209.9,751.9 1210.9,751.8 1211.8,751.6 1212.8,751.5 1213.8,751.4 1214.8,751.3 1215.7,751.2 1216.7,751 1217.7,750.9 1218.7,750.8 1219.6,750.7 1220.6,750.6 1221.6,750.4 1222.6,750.3 1223.5,750.2 1224.5,750.1 1225.5,750 1226.5,749.8 1227.4,749.7 1228.4,749.6 1229.4,749.5 1230.4,749.4 1231.3,749.2 1232.3,749.1 1233.3,749 1234.2,748.5 1235,748 1236,748.9 1237,749.8 1237.9,750.6 1238.9,751.5 1239.8,751.4 1240.8,751.2 1241.7,751.1 1242.6,751 1243.5,750.9 1244.5,750.8 1245.4,750.6 1246.3,750.5 1247.2,750.4 1248.2,750.2 1249.1,750.1 1250,750 1251,750 1252,749.9 1253,749.9 1253.9,749.9 1254.9,749.8 1255.9,749.8 1256.9,749.7 1257.9,749.7 1258.9,749.7 1259.9,749.6 1260.9,749.6 1261.8,749.6 1262.8,749.5 1263.8,749.5 1264.8,749.4 1265.8,749.4 1266.8,749.4 1267.8,749.3 1268.8,749.3 1269.7,749.3 1270.7,749.2 1271.7,749.2 1272.7,749.1 1273.7,749.1 1274.7,749.1 1275.7,749 1276.7,749 1277.6,749 1278.6,748.9 1279.6,748.9 1280.6,748.9 1281.6,748.8 1282.6,748.8 1283.6,748.7 1284.5,748.7 1285.5,748.7 1286.5,748.6 1287.5,748.6 1288.5,748.6 1289.5,748.5 1290.5,748.5 1291.5,748.4 1292.4,748.4 1293.4,748.4 1294.4,748.3 1295.4,748.3 1296.4,748.3 1297.4,748.2 1298.4,748.2 1299.4,748.1 1300.3,748.1 1301.3,748.1 1302.3,748 1303.3,748 1304.1,747 1304.8,746 1305.6,745 1306.3,742.7 1307.1,740.3 1307.8,738 1308.6,731 1309.4,724 1310.3,717 1311.1,710 1311.9,700.2 1312.8,690.5 1313.6,680.8 1314.4,671 1315.2,664 1316.1,657 1317,650 1317.8,643 1318.7,638.8 1319.6,634.6 1320.4,630.4 1321.3,626.2 1322.2,622 1323.2,619.5 1324.1,617 1325.1,614.5 1326,611.9 1327,609.4 1327.9,606.9 1328.9,604.4 1329.9,603.1 1330.9,601.7 1331.9,600.4 1332.9,599 1333.9,597.7 1334.9,596.4 1335.9,595 1336.9,593.7 1337.9,592.3 1338.9,591 1339.8,590.6 1340.8,590.2 1341.7,589.9 1342.6,589.5 1343.5,589.1 1344.5,588.8 1345.4,588.4 1346.3,588 1347.2,587.6 1348.2,587.2 1349.1,586.9 1350,586.5 1351,586.4 1352,586.3 1353,586.2 1354,586.1 1355,586 1356,586 1357,585.9 1358,585.8 1359,585.7 1360,585.6 1361,585.5 1362,585.5 1363,585.5 1364,585.5 1365,585.5 1366,585.5 1366.9,585.5 1367.9,585.5 1368.9,585.5 1369.9,585.5 1370.9,585.6 1371.9,585.6 1372.9,585.6 1373.9,585.6 1374.9,585.6 1375.9,585.6 1376.9,585.6 1377.9,585.6 1378.8,585.6 1379.8,585.6 1380.8,585.6 1381.8,585.6 1382.8,585.6 1383.8,585.6 1384.8,585.6 1385.8,585.6 1386.8,585.6 1387.8,585.6 1388.8,585.7 1389.7,585.7 1390.7,585.7 1391.7,585.7 1392.7,585.7 1393.7,585.7 1394.7,585.7 1395.7,585.7 1396.7,585.7 1397.7,585.7 1398.7,585.7 1399.7,585.7 1400.7,585.7 1401.6,585.7 1402.6,585.7 1403.6,585.7 1404.6,585.7 1405.6,585.7 1406.6,585.8 1407.6,585.8 1408.6,585.8 1409.6,585.8 1410.6,585.8 1411.6,585.8 1412.5,585.8 1413.5,585.8 1414.5,585.8 1415.5,585.8 1416.5,585.8 1417.5,585.8 1418.5,585.8 1419.5,585.8 1420.5,585.8 1421.5,585.8 1422.5,585.8 1423.5,585.8 1424.4,585.8 1425.4,585.9 1426.4,585.9 1427.4,585.9 1428.4,585.9 1429.4,585.9 1430.4,585.9 1431.4,585.9 1432.4,585.9 1433.4,585.9 1434.4,585.9 1435.3,585.9 1436.3,585.9 1437.3,585.9 1438.3,585.9 1439.3,585.9 1440.3,585.9 1441.3,585.9 1442.3,585.9 1443.3,586 1444.3,586 1445.3,586 1446.3,586 1447.2,586 1448.2,586 1449.2,586 1450.2,586 1451.2,586 1452.2,586 1453,588.3 1453.8,590.7 1454.6,593 1455.4,606 1456.2,619 1457,632 1457.8,640.8 1458.7,649.5 1459.6,658.2 1460.4,667 1461.3,669.9 1462.2,672.8 1463,675.6 1463.9,678.5 1464.8,682.7 1465.7,686.8 1466.7,691 1467.6,695.1 1468.5,699.3 1469.5,701.9 1470.5,704.6 1471.5,707.2 1472.5,709.9 1473.5,712.5 1474.5,715.2 1475.5,717.8 1476.4,719.2 1477.3,720.6 1478.3,722 1479.2,723.4 1480.1,724.8 1481,726.1 1481.9,727.5 1482.9,728.9 1483.8,730.3 1484.7,731.7 1485.7,732.3 1486.6,732.9 1487.6,733.4 1488.6,734 1489.5,734.6 1490.5,735.2 1491.5,735.7 1492.4,736.3 1493.4,736.9 1494.4,737.5 1495.3,738 1496.3,738.6 1497.3,738.8 1498.2,738.9 1499.2,739.1 1500.2,739.2 1501.2,739.4 1502.1,739.5 1503.1,739.7 1504.1,739.8 1505,740 1506,740.1 1507,740.3 1508,740.4 1508.9,740.6 1509.9,740.7 1510.9,740.9 1511.8,741 1512.8,741.2 1513.8,741.3 1514.7,741.5 1515.7,741.6 1516.7,741.8 1517.7,741.9 1518.6,742.1 1519.6,742.2 1520.6,742.4 1521.5,742.5 1522.5,742.7 1523.5,742.8 1524.5,743 1525.4,743.1 1526.4,743.3 1527.3,743.6 1528.2,743.8 1529,744.1 1529.9,744.4 1530.8,747 1531.6,749.7 1532.5,752.4 1533.3,755 1534.2,755.2 1535.2,755.4 1536.1,755.6 1537.1,755.8 1538,756 1539,756 1539.9,756 1540.9,756 1541.9,756 1542.9,756 1543.8,756 1544.8,756 1545.8,756 1546.7,756 1547.7,756 1548.7,756 1549.7,756 1550.6,756 1551.6,756 1552.6,756 1553.6,756 1554.5,756 1555.5,756 1556.5,756 1557.4,756 1558.4,756 1559.4,756 1560.4,756 1561.3,756 1562.3,756 1562.7,537 1563.6,538.9 1564.5,540.8 1565.3,542.8 1566.2,544.7 1567.1,546.6 1568,548.5 1569,549.5 1570,550.6 1571,551.6 1571.9,552.6 1572.9,553.6 1573.9,554.7 1574.9,555.7 1575.9,556.7 1576.9,557.8 1577.9,558.8 1578.9,559.8 1579.8,560.8 1580.8,561.9 1581.8,562.9 1582.8,563.9 1583.8,564.9 1584.8,566 1585.8,567 1586.8,568 1587.7,569.1 1588.7,570.1 1589.7,571.1 1590.7,572.1 1591.7,573.2 1592.7,574.2 1593.7,575.2 1594.7,576.2 1595.6,577.3 1596.6,578.3 1597.6,579.3 1598.6,580.4 1599.6,581.4 1600.6,582.4 1601.6,583.4 1602.5,584.5 1603.5,585.5 1604.5,586.5 1605.5,587.6 1606.5,588.6 1607.5,589.6 1608.5,590.6 1609.5,591.7 1610.4,592.7 1611.4,593.7 1612.4,594.8 1613.4,595.8 1614.4,596.8 1615.4,597.8 1616.4,598.9 1617.4,599.9 1618.3,600.9 1619.3,601.9 1620.3,603 1621.3,604 1621.9,604 1622.5,604 1622.5,703.6 1623.3,711.3 1624,719.1 1624.8,726.8 1625.4,739.4 1626,752 1626.7,756 1627.5,760 1628.2,764 1629,762.3 1629.8,760.7 1630.6,759 1631.4,760.8 1632.1,762.7 1632.9,764.5 1633.9,764.5 1634.9,764.5 1635.9,764.5 1636.9,764.5 1637.9,764.5 1638.9,764.5 1639.9,764.5 1640.9,764.5 1641.9,764.5 1642.9,764.5 1643.9,764.5 1644.9,764.5 1645.9,764.5 1646.9,764.5 1647.8,764.5 1648.8,764.5 1649.8,764.5 1650.8,764.5 1651.8,764.5 1652.8,764.5 1653.8,764.5 1654.8,764.5 1655.8,764.5 1656.8,764.5 1657.8,764.5 1658.8,764.5 1659.8,764.5 1660.8,764.5 1661.8,764.5 1662.8,764.5 1663.8,764.5 1664.8,764.5 1665.8,764.5 1666.8,764.5 1667.8,764.5 1668.8,764.5 1669.8,764.5 1670.8,764.5 1671.8,764.5 1672.8,764.5 1673.8,764.5 1674.8,764.5 1675.8,764.5 1676.7,764.5 1677.7,764.5 1678.7,764.5 1679.7,764.5 1680.7,764.5 1681.7,764.5 1682.7,764.5 1683.7,764.5 1684.7,764.5 1685.7,764.5 1686.7,764.5 1687.7,764.5 1688.7,764.5 1689.7,764.5 1690.7,764.5 1691.7,764.5 1692.7,764.5 1693.7,764.5 1694.7,764.5 1695.7,764.5 1696.7,764.5 1697.7,764.5 1698.7,764.5 1699.7,764.5 1700.7,764.5 1701.7,764.5 1702.7,764.5 1703.7,764.5 1704.7,764.5 1705.7,764.5 1706.6,764.5 1707.6,764.5 1708.6,764.5 1709.6,764.5 1710.6,764.5 1711.6,764.5 1712.6,764.5 1713.6,764.5 1714.6,764.5 1715.6,764.5 1716.6,764.5 1717.6,764.5 1718.6,764.5 1719.6,764.5 1720.6,764.5 1721.6,764.5 1722.6,764.5 1723.6,764.5 1724.6,764.5 1725.6,764.5 1726.6,764.5 1727.6,764.5 1728.6,764.5 1729.6,764.5 1730.6,764.5 1731.6,764.5 1732.6,764.5 1733.6,764.5 1734.6,764.5 1735.5,764.5 1736.5,764.5 1737.5,764.5 1738.5,764.5 1739.5,764.5 1740.5,764.5 1741.5,764.5 1742.5,764.5 1743.5,764.5 1744.5,764.5 1745.5,764.5 1746.5,764.5 1747.5,764.5 1748.5,764.5 1749.5,764.5 1750.5,764.5 1751.5,764.5 1752.5,764.5 1753.5,764.5 1754.5,764.5 1755.5,764.5 1756.5,764.5 1757.5,764.5 1758.5,764.5 1759.5,764.5 1760.5,764.5 1761.5,764.5 1762.5,764.5 1763.5,764.5 1764.4,764.5 1765.4,764.5 1766.4,764.5 1767.4,764.5 1768.4,764.5 1769.4,764.5 1770.4,764.5 1771.4,764.5 1772.4,764.5 1773.4,764.5 1774.4,764.5 1775.4,764.5 1776.4,764.5 1777.4,764.5 1778.4,764.5 1779.4,764.5 1780.4,764.5 1781.4,764.5 1782.4,764.5 1783.4,764.5 1784.4,764.5 1785.4,764.5 1786.4,764.5 1787.4,764.5 1788.4,764.5 1789.4,764.5 1790.4,764.5 1791.4,764.5 1792.4,764.5 1793.3,764.5 1794.3,764.5 1795.3,764.5 1796.3,764.5 1797.3,764.5 1798.3,764.5 1799.3,764.5 1800.3,764.5 1801.3,764.5 1802.3,764.5 1803.3,764.5 1804.3,764.5 1805.3,764.5 1806.3,764.5 1807.3,764.5 1808.3,764.5 1809.3,764.5 1810.3,764.5 1811.3,764.5 1812.3,764.5 1813.3,764.5 1814.3,764.5 1815.3,764.5 1816.3,764.5 1817.3,764.5 1818.3,764.5 1819.3,764.5 1820.3,764.5 1821.3,764.5 1822.2,764.5 1823.2,764.5 1824.2,764.5 1825.2,764.5 1826.2,764.5 1827.2,764.5 1828.2,764.5 1829.2,764.5 1830.2,764.5 1831.2,764.5 1832.2,764.5 1833.2,764.5 1834.2,764.5 1835.2,764.5 1836.2,764.5 1837.2,764.5 1838.2,764.5 1839.2,764.5 1840.2,764.5 1841.2,764.5 1842.2,764.5 1843.2,764.5 1844.2,764.5 1845.2,764.5 1846.2,764.5 1847.2,764.5 1848.2,764.5 1849.2,764.5 1850.2,764.5 1851.2,764.5 1852.1,764.5 1853.1,764.5 1854.1,764.5 1855.1,764.5 1856.1,764.5 1857.1,764.5 1858.1,764.5 1859.1,764.5 1860.1,764.5 1861.1,764.5 1862.1,764.5 1863.1,764.5 1864.1,764.5 1865.1,764.5 1866.1,764.5 1867.1,764.5 1868.1,764.5 1869.1,764.5 1870.1,764.5 1871.1,764.5 1872.1,764.5 1873.1,764.5 1874.1,764.5 1875.1,764.5 1876.1,764.5 1877.1,764.5 1878.1,764.5 1879.1,764.5 1880.1,764.5 1881,764.5 1882,764.5 1883,764.5 1884,764.5 1885,764.5 1886,764.5 1887,764.5 1888,764.5 1889,764.5 1890,764.5 1891,764.5 1892,764.5 1893,764.5 1894,764.5 1895,764.5" fill="none" stroke="#ff6090" stroke-width="1.5" stroke-linejoin="round" /><polygon points="1140.2,539.7 1141.2,540.1 1142.1,539.1 1143,539.5 1143.9,538.9 1144.8,539.5 1145.8,538.8 1146.7,538.2 1147.6,537.2 1148.6,537.3 1149.5,537.9 1150.5,537.6 1151.4,536.6 1152.3,535.6 1153.3,536.4 1154.2,536.7 1155.2,535.8 1156.1,535.8 1157.1,535.1 1158,534.7 1158.7,534.6 1158.7,540.2 1158,540.2 1157.1,539.5 1156.1,540.3 1155.2,540.2 1154.2,540.2 1153.3,540.9 1152.3,540.4 1151.4,541.9 1150.5,541 1149.5,541.9 1148.6,542.7 1147.6,543 1146.7,543.1 1145.8,542.6 1144.8,542.6 1143.9,542.9 1143,543.4 1142.1,543.7 1141.2,545.3 1140.2,544.3" fill="#ff6090"/><polygon points="1320.4,625.9 1321.3,621.2 1322.2,619.1 1323.2,614.9 1324.1,614 1325.1,611.3 1326,607.9 1327,605.5 1327.9,602.2 1328.9,599.2 1329.9,599.7 1330.9,597 1331.9,595.4 1332.9,594.9 1333.9,594.2 1334.9,593.4 1335.9,591.5 1336.9,590.3 1337.9,588.2 1338.9,586.1 1339.8,586.2 1340.8,587.2 1341.7,587 1342.6,585.2 1343.5,585.7 1344.5,585.2 1345.4,584.8 1346.3,583.2 1347.2,582.9 1348.2,583.2 1349.1,581.6 1350,583.4 1351,582.2 1352,581.2 1353,581.7 1354,581 1355,582.3 1356,581.3 1357,580.9 1358,580.8 1359,582.7 1360,582.1 1361,580.8 1362,580.8 1363,581.2 1364,582.1 1365,582.3 1366,581.7 1366.9,580.8 1367.9,581.5 1368.9,579.9 1369.9,582 1370.9,582.4 1371.9,580.5 1372.9,582.3 1373.9,582 1374.9,581.4 1375.9,580.4 1376.9,581.4 1377.9,580.4 1378.8,580.5 1379.8,581.6 1380.8,581.2 1381.8,580.7 1382.8,581.3 1383.8,581.3 1384.8,581.5 1385.8,582.3 1386.8,580.8 1387.8,581.3 1388.8,582 1389.7,582.7 1390.7,581.1 1391.7,581.1 1392.7,582.3 1393.7,582.1 1394.7,581.8 1395.7,578.2 1396.7,581.6 1397.7,582.9 1398.7,581.2 1399.7,582.4 1400.7,582.4 1401.6,581.2 1402.6,580.5 1403.6,581.5 1404.6,581.6 1405.6,580.9 1406.6,582.5 1407.6,581.3 1408.6,581 1409.6,582.6 1410.6,580.7 1411.6,582.4 1412.5,581.6 1413.5,581.8 1414.5,580.9 1415.5,581.7 1416.5,581.2 1417.5,580.6 1418.5,582.3 1419.5,581 1420.5,582.4 1421.5,582.1 1422.5,581.4 1423.5,581.7 1424.4,582.1 1425.4,583 1426.4,580.7 1427.4,582.2 1428.4,583 1429.4,582.8 1430.4,581.1 1431.4,582.4 1432.4,582.2 1433.4,582.2 1434.4,582.9 1435.3,582.3 1436.3,580.7 1437.3,581.6 1438.3,581.5 1439.3,581.9 1440.3,583.1 1441.3,582 1442.3,581.4 1443.3,583 1444.3,582.2 1445.3,581.1 1446.3,581.6 1447.2,583.1 1448.2,581 1449.2,582.4 1450.2,580.9 1451.2,581.9 1452.2,581.9 1453,585.3 1453.8,585.7 1454.6,586.5 1454.6,596.3 1453.8,595.3 1453,593 1452.2,589.2 1451.2,590.9 1450.2,591.1 1449.2,589.5 1448.2,590.3 1447.2,590.9 1446.3,590.4 1445.3,590.4 1444.3,589.2 1443.3,590.3 1442.3,590.3 1441.3,591 1440.3,591 1439.3,589.1 1438.3,589.5 1437.3,589.4 1436.3,590.4 1435.3,590.2 1434.4,589.9 1433.4,589.4 1432.4,589 1431.4,590.2 1430.4,591.1 1429.4,588.7 1428.4,589.8 1427.4,590.5 1426.4,589 1425.4,590 1424.4,590.3 1423.5,590.2 1422.5,589 1421.5,589.9 1420.5,589.6 1419.5,589.8 1418.5,590 1417.5,590.9 1416.5,591 1415.5,589.8 1414.5,588.7 1413.5,589 1412.5,590.3 1411.6,589.2 1410.6,590.6 1409.6,589.8 1408.6,588.8 1407.6,588.9 1406.6,590.6 1405.6,589.7 1404.6,590.1 1403.6,590.8 1402.6,590.7 1401.6,588.8 1400.7,589.6 1399.7,589.6 1398.7,590.4 1397.7,588.7 1396.7,590 1395.7,590.3 1394.7,589.6 1393.7,590.3 1392.7,589.9 1391.7,588.8 1390.7,589.7 1389.7,588.5 1388.8,590.3 1387.8,590.7 1386.8,588.4 1385.8,589.2 1384.8,588.6 1383.8,588.4 1382.8,590.3 1381.8,588.5 1380.8,589.2 1379.8,588.7 1378.8,590.1 1377.9,589.3 1376.9,588.5 1375.9,589.8 1374.9,590.8 1373.9,590.7 1372.9,589.3 1371.9,588.3 1370.9,590.6 1369.9,590.3 1368.9,589.3 1367.9,589.5 1366.9,590.6 1366,589.1 1365,590.6 1364,590.2 1363,589.5 1362,589.9 1361,589.6 1360,589.6 1359,590.9 1358,590.5 1357,589.8 1356,588.9 1355,589.8 1354,589.7 1353,590 1352,591.1 1351,589.8 1350,589.3 1349.1,591.9 1348.2,591.7 1347.2,592.3 1346.3,590.9 1345.4,591.4 1344.5,592.1 1343.5,593.2 1342.6,592.4 1341.7,594.4 1340.8,594.1 1339.8,594.6 1338.9,595.5 1337.9,596.7 1336.9,598.4 1335.9,598.2 1334.9,599.7 1333.9,600.9 1332.9,602.6 1331.9,605.2 1330.9,605.1 1329.9,607.9 1328.9,608 1327.9,610 1327,612.3 1326,616.4 1325.1,619.1 1324.1,619.8 1323.2,624.5 1322.2,626.4 1321.3,630.3 1320.4,635.3" fill="#ff6090"/><polyline points="1050.5,763.5 1051.5,763.5 1052.5,763.5 1053.5,763.5 1054.5,763.5 1055.5,763.5 1056.5,763.5 1057.5,763.5 1058.5,763.5 1059.5,763.5 1060.5,763.5 1061.4,763.5 1062.4,763.5 1063.4,763.5 1064.4,763.5 1065.4,763.5 1066.4,763.5 1067.4,763.5 1068.4,763.5 1069.4,763.5 1070.4,763.5 1071.4,763.5 1072.4,763.5 1073.4,763.5 1074.4,763.5 1075.4,763.5 1076.4,763.5 1077.4,763.5 1078.4,763.5 1079.4,763.5 1080.3,763.5 1081.3,763.5 1082.3,763.5 1083.3,763.5 1084.3,763.5 1085.3,763.5 1086.3,763.5 1087.3,763.5 1088.3,763.5 1089.3,763.5 1090.3,763.5 1091.2,705.2 1092.2,647 1093.1,630.5 1093.9,614 1094.6,600.8 1095.3,587.5 1096,564 1096.7,545.8 1097.7,545.8 1098.7,545.8 1099.7,545.8 1100.7,545.8 1101.7,545.8 1102.7,545.8 1103.7,545.8 1104.7,545.8 1105.7,545.8 1106.7,545.8 1107.6,545.8 1108.6,545.8 1109.6,545.8 1110.6,545.8 1111.6,545.8 1112.6,545.8 1113.6,545.8 1114.6,545.8 1115.6,545.8 1116.6,545.8 1117.6,545.8 1118.6,545.8 1119.6,545.8 1120.6,545.8 1121.6,545.8 1122.6,545.8 1123.6,545.8 1124.6,545.8 1125.6,545.8 1126.6,545.8 1127.6,545.8 1128.5,545.8 1129.5,545.8 1130.5,545.8 1131.5,545.8 1132.5,545.8 1133.5,545.8 1134.5,545.8 1135.5,545.8 1136.5,545.8 1137.5,545.8 1138.5,545.8 1139.5,545.8 1140.5,545.8 1141.5,545.8 1142.5,545.8 1143.5,545.8 1144.5,545.8 1145.5,545.8 1146.5,545.8 1147.5,545.8 1148.5,545.8 1149.4,545.8 1150.4,545.8 1151.4,545.8 1152.4,545.8 1153.4,545.8 1154.4,545.8 1155.4,545.8 1156.4,545.8 1157.4,545.8 1158.4,545.8 1159.4,545.8 1159.4,586 1160,636.5 1160.6,687 1161,704 1161.8,709.3 1162.5,714.7 1163.3,720 1163.8,727.8 1164.4,735.6 1165,742.3 1165.6,749 1166.4,754.2 1167.2,759.5 1168.1,759.5 1169.1,759.5 1170,759.5 1171,759.5 1171.9,759.5 1172.9,759.5 1173.8,759.5 1174.8,759.5 1175.7,759.5 1176.7,759.5 1177.6,759.5 1178.6,759.5 1179.5,759.5 1180.5,759.5 1181.4,759.5 1182.4,759.5 1183.3,759.5 1184.2,759 1185,758.5 1185.8,758 1186.7,757.5 1187.7,757.5 1188.6,757.5 1189.5,757.5 1190.5,757.5 1191.5,757.5 1192.4,757.5 1193.3,757.5 1194.3,757.5 1195.2,757.5 1196.2,757.5 1197.2,757.5 1198.1,757.5 1199,757.5 1200,757.5 1201,757.1 1202,756.6 1203,756.2 1204,755.7 1204.9,755.3 1205.9,754.8 1206.9,754.4 1207.9,753.9 1208.9,753.5 1209.9,753.4 1210.9,753.3 1211.8,753.1 1212.8,753 1213.8,752.9 1214.8,752.8 1215.7,752.7 1216.7,752.5 1217.7,752.4 1218.7,752.3 1219.6,752.2 1220.6,752.1 1221.6,751.9 1222.6,751.8 1223.5,751.7 1224.5,751.6 1225.5,751.5 1226.5,751.3 1227.4,751.2 1228.4,751.1 1229.4,751 1230.4,750.9 1231.3,750.7 1232.3,750.6 1233.3,750.5 1234.2,750 1235,749.5 1236,750.4 1237,751.2 1237.9,752.1 1238.9,753 1239.8,752.9 1240.8,752.8 1241.7,752.6 1242.6,752.5 1243.5,752.4 1244.5,752.2 1245.4,752.1 1246.3,752 1247.2,751.9 1248.2,751.8 1249.1,751.6 1250,751.5 1251,751.5 1252,751.4 1253,751.4 1253.9,751.4 1254.9,751.3 1255.9,751.3 1256.9,751.2 1257.9,751.2 1258.9,751.2 1259.9,751.1 1260.9,751.1 1261.8,751.1 1262.8,751 1263.8,751 1264.8,750.9 1265.8,750.9 1266.8,750.9 1267.8,750.8 1268.8,750.8 1269.7,750.8 1270.7,750.7 1271.7,750.7 1272.7,750.6 1273.7,750.6 1274.7,750.6 1275.7,750.5 1276.7,750.5 1277.6,750.5 1278.6,750.4 1279.6,750.4 1280.6,750.4 1281.6,750.3 1282.6,750.3 1283.6,750.2 1284.5,750.2 1285.5,750.2 1286.5,750.1 1287.5,750.1 1288.5,750.1 1289.5,750 1290.5,750 1291.5,749.9 1292.4,749.9 1293.4,749.9 1294.4,749.8 1295.4,749.8 1296.4,749.8 1297.4,749.7 1298.4,749.7 1299.4,749.6 1300.3,749.6 1301.3,749.6 1302.3,749.5 1303.3,749.5 1304.1,748.5 1304.8,747.5 1305.6,746.5 1306.3,744.3 1307.1,742.2 1307.8,740 1308.6,733 1309.4,726 1310.3,719 1311.1,712 1311.9,703.8 1312.8,695.5 1313.6,687.2 1314.4,679 1315.2,672.2 1316.1,665.5 1317,658.8 1317.8,652 1318.5,647.3 1319.3,642.5 1320,637.8 1321,634.9 1322,632.1 1323,629.2 1324,626.3 1324.9,623.5 1325.9,620.6 1326.9,617.7 1327.9,614.9 1328.9,612 1329.9,611 1330.8,610.1 1331.8,609.1 1332.8,608.2 1333.7,607.2 1334.7,606.3 1335.7,605.3 1336.7,604.4 1337.6,603.4 1338.6,602.4 1339.6,601.5 1340.5,600.5 1341.5,599.6 1342.5,598.6 1343.4,597.7 1344.4,596.7 1345.4,596.6 1346.3,596.4 1347.3,596.3 1348.3,596.2 1349.2,596.1 1350.2,595.9 1351.2,595.8 1352.2,595.7 1353.1,595.6 1354.1,595.4 1355.1,595.3 1356,595.2 1357,595.1 1358,594.9 1358.9,594.8 1359.9,594.7 1360.9,594.6 1361.9,594.4 1362.8,594.3 1363.8,594.2 1364.8,594.1 1365.7,593.9 1366.7,593.8 1367.7,593.8 1368.7,593.8 1369.7,593.8 1370.7,593.8 1371.7,593.8 1372.7,593.8 1373.7,593.8 1374.7,593.9 1375.7,593.9 1376.7,593.9 1377.6,593.9 1378.6,593.9 1379.6,593.9 1380.6,593.9 1381.6,593.9 1382.6,593.9 1383.6,593.9 1384.6,593.9 1385.6,593.9 1386.6,593.9 1387.6,593.9 1388.6,594 1389.6,594 1390.6,594 1391.6,594 1392.6,594 1393.6,594 1394.6,594 1395.6,594 1396.6,594 1397.6,594 1398.6,594 1399.5,594 1400.5,594 1401.5,594 1402.5,594 1403.5,594.1 1404.5,594.1 1405.5,594.1 1406.5,594.1 1407.5,594.1 1408.5,594.1 1409.5,594.1 1410.5,594.1 1411.5,594.1 1412.5,594.1 1413.5,594.1 1414.5,594.1 1415.5,594.1 1416.5,594.1 1417.5,594.2 1418.5,594.2 1419.5,594.2 1420.5,594.2 1421.4,594.2 1422.4,594.2 1423.4,594.2 1424.4,594.2 1425.4,594.2 1426.4,594.2 1427.4,594.2 1428.4,594.2 1429.4,594.2 1430.4,594.2 1431.4,594.2 1432.4,594.3 1433.4,594.3 1434.4,594.3 1435.4,594.3 1436.4,594.3 1437.4,594.3 1438.4,594.3 1439.4,594.3 1440.4,594.3 1441.4,594.3 1442.4,594.3 1443.3,594.3 1444.3,594.3 1445.3,594.3 1446.3,594.4 1447.3,594.4 1448.3,594.4 1449.3,594.4 1450.3,594.4 1451.3,594.4 1452.3,594.4 1453.3,594.4 1453.9,596.9 1454.6,599.4 1455.4,610.9 1456.2,622.5 1457,634 1457.8,642.7 1458.7,651.5 1459.6,660.2 1460.4,668.9 1461.3,671.8 1462.2,674.7 1463,677.6 1463.9,680.5 1464.8,684.7 1465.7,688.8 1466.7,693 1467.6,697.1 1468.5,701.3 1469.5,703.9 1470.5,706.6 1471.5,709.2 1472.5,711.9 1473.5,714.5 1474.5,717.2 1475.5,719.8 1476.4,721.2 1477.3,722.6 1478.3,724 1479.2,725.4 1480.1,726.8 1481,728.1 1481.9,729.5 1482.9,730.9 1483.8,732.3 1484.7,733.7 1485.7,734.3 1486.6,734.9 1487.6,735.4 1488.6,736 1489.5,736.6 1490.5,737.2 1491.5,737.7 1492.4,738.3 1493.4,738.9 1494.4,739.5 1495.3,740 1496.3,740.6 1497.3,740.8 1498.2,740.9 1499.2,741.1 1500.2,741.2 1501.2,741.4 1502.1,741.5 1503.1,741.7 1504.1,741.8 1505,742 1506,742.1 1507,742.3 1508,742.4 1508.9,742.6 1509.9,742.7 1510.9,742.9 1511.8,743 1512.8,743.2 1513.8,743.3 1514.7,743.5 1515.7,743.6 1516.7,743.8 1517.7,743.9 1518.6,744.1 1519.6,744.2 1520.6,744.4 1521.5,744.5 1522.5,744.7 1523.5,744.8 1524.5,745 1525.4,745.1 1526.4,745.3 1527.3,745.6 1528.2,745.8 1529,746.1 1529.9,746.4 1530.8,749 1531.6,751.6 1532.5,754.3 1533.3,756.9 1534.2,757.1 1535.2,757.3 1536.1,757.6 1537.1,757.8 1538,758 1539,758 1539.9,758 1540.9,758 1541.9,758 1542.9,758 1543.8,758 1544.8,758 1545.8,758 1546.7,758 1547.7,758 1548.7,758 1549.7,758 1550.6,758 1551.6,758 1552.6,758 1553.6,758 1554.5,758 1555.5,758 1556.5,758 1557.4,758 1558.4,758 1559.4,758 1560.4,758 1561.3,758 1562.3,758 1562.7,547.4 1563.6,547.5 1564.4,547.6 1565.3,547.8 1566.1,547.9 1567,548 1568,548 1569,548 1570,547.9 1571,547.9 1572,547.9 1572.9,547.9 1573.9,547.8 1574.9,547.8 1575.9,547.8 1576.9,547.8 1577.9,547.7 1578.9,547.7 1579.9,547.7 1580.9,547.7 1581.9,547.7 1582.9,547.6 1583.8,547.6 1584.8,547.6 1585.8,547.6 1586.8,547.5 1587.8,547.5 1588.8,547.5 1589.8,547.5 1590.8,547.4 1591.8,547.4 1592.8,547.4 1593.8,547.4 1594.8,547.4 1595.7,547.3 1596.7,547.3 1597.7,547.3 1598.7,547.3 1599.7,547.2 1600.7,547.2 1601.7,547.2 1602.7,547.2 1603.7,547.1 1604.7,547.1 1605.7,547.1 1606.6,547.1 1607.6,547 1608.6,547 1609.6,547 1610.6,547 1611.6,547 1612.6,546.9 1613.6,546.9 1614.6,546.9 1615.6,546.9 1616.6,546.8 1617.5,546.8 1618.5,546.8 1619.5,546.8 1620.5,546.7 1621.5,546.7 1622.5,546.7 1622.5,703.6 1623.3,711.3 1624,719.1 1624.8,726.8 1625.4,739.4 1626,752 1626.7,755.9 1627.5,759.9 1628.2,763.8 1629,761.9 1629.8,759.9 1630.6,758 1631.4,759.9 1632.1,761.9 1632.9,763.8 1633.9,763.8 1634.9,763.8 1635.9,763.8 1636.9,763.8 1637.9,763.8 1638.9,763.8 1639.9,763.8 1640.9,763.8 1641.9,763.8 1642.9,763.8 1643.9,763.8 1644.9,763.8 1645.9,763.8 1646.9,763.8 1647.8,763.8 1648.8,763.8 1649.8,763.8 1650.8,763.8 1651.8,763.8 1652.8,763.8 1653.8,763.8 1654.8,763.8 1655.8,763.8 1656.8,763.8 1657.8,763.8 1658.8,763.8 1659.8,763.8 1660.8,763.8 1661.8,763.8 1662.8,763.8 1663.8,763.8 1664.8,763.8 1665.8,763.8 1666.8,763.8 1667.8,763.8 1668.8,763.8 1669.8,763.8 1670.8,763.8 1671.8,763.8 1672.8,763.8 1673.8,763.8 1674.8,763.8 1675.8,763.8 1676.7,763.8 1677.7,763.8 1678.7,763.8 1679.7,763.8 1680.7,763.8 1681.7,763.8 1682.7,763.8 1683.7,763.8 1684.7,763.8 1685.7,763.8 1686.7,763.8 1687.7,763.8 1688.7,763.8 1689.7,763.8 1690.7,763.8 1691.7,763.8 1692.7,763.8 1693.7,763.8 1694.7,763.8 1695.7,763.8 1696.7,763.8 1697.7,763.8 1698.7,763.8 1699.7,763.8 1700.7,763.8 1701.7,763.8 1702.7,763.8 1703.7,763.8 1704.7,763.8 1705.7,763.8 1706.6,763.8 1707.6,763.8 1708.6,763.8 1709.6,763.8 1710.6,763.8 1711.6,763.8 1712.6,763.8 1713.6,763.8 1714.6,763.8 1715.6,763.8 1716.6,763.8 1717.6,763.8 1718.6,763.8 1719.6,763.8 1720.6,763.8 1721.6,763.8 1722.6,763.8 1723.6,763.8 1724.6,763.8 1725.6,763.8 1726.6,763.8 1727.6,763.8 1728.6,763.8 1729.6,763.8 1730.6,763.8 1731.6,763.8 1732.6,763.8 1733.6,763.8 1734.6,763.8 1735.5,763.8 1736.5,763.8 1737.5,763.8 1738.5,763.8 1739.5,763.8 1740.5,763.8 1741.5,763.8 1742.5,763.8 1743.5,763.8 1744.5,763.8 1745.5,763.8 1746.5,763.8 1747.5,763.8 1748.5,763.8 1749.5,763.8 1750.5,763.8 1751.5,763.8 1752.5,763.8 1753.5,763.8 1754.5,763.8 1755.5,763.8 1756.5,763.8 1757.5,763.8 1758.5,763.8 1759.5,763.8 1760.5,763.8 1761.5,763.8 1762.5,763.8 1763.5,763.8 1764.4,763.8 1765.4,763.8 1766.4,763.8 1767.4,763.8 1768.4,763.8 1769.4,763.8 1770.4,763.8 1771.4,763.8 1772.4,763.8 1773.4,763.8 1774.4,763.8 1775.4,763.8 1776.4,763.8 1777.4,763.8 1778.4,763.8 1779.4,763.8 1780.4,763.8 1781.4,763.8 1782.4,763.8 1783.4,763.8 1784.4,763.8 1785.4,763.8 1786.4,763.8 1787.4,763.8 1788.4,763.8 1789.4,763.8 1790.4,763.8 1791.4,763.8 1792.4,763.8 1793.3,763.8 1794.3,763.8 1795.3,763.8 1796.3,763.8 1797.3,763.8 1798.3,763.8 1799.3,763.8 1800.3,763.8 1801.3,763.8 1802.3,763.8 1803.3,763.8 1804.3,763.8 1805.3,763.8 1806.3,763.8 1807.3,763.8 1808.3,763.8 1809.3,763.8 1810.3,763.8 1811.3,763.8 1812.3,763.8 1813.3,763.8 1814.3,763.8 1815.3,763.8 1816.3,763.8 1817.3,763.8 1818.3,763.8 1819.3,763.8 1820.3,763.8 1821.3,763.8 1822.2,763.8 1823.2,763.8 1824.2,763.8 1825.2,763.8 1826.2,763.8 1827.2,763.8 1828.2,763.8 1829.2,763.8 1830.2,763.8 1831.2,763.8 1832.2,763.8 1833.2,763.8 1834.2,763.8 1835.2,763.8 1836.2,763.8 1837.2,763.8 1838.2,763.8 1839.2,763.8 1840.2,763.8 1841.2,763.8 1842.2,763.8 1843.2,763.8 1844.2,763.8 1845.2,763.8 1846.2,763.8 1847.2,763.8 1848.2,763.8 1849.2,763.8 1850.2,763.8 1851.2,763.8 1852.1,763.8 1853.1,763.8 1854.1,763.8 1855.1,763.8 1856.1,763.8 1857.1,763.8 1858.1,763.8 1859.1,763.8 1860.1,763.8 1861.1,763.8 1862.1,763.8 1863.1,763.8 1864.1,763.8 1865.1,763.8 1866.1,763.8 1867.1,763.8 1868.1,763.8 1869.1,763.8 1870.1,763.8 1871.1,763.8 1872.1,763.8 1873.1,763.8 1874.1,763.8 1875.1,763.8 1876.1,763.8 1877.1,763.8 1878.1,763.8 1879.1,763.8 1880.1,763.8 1881,763.8 1882,763.8 1883,763.8 1884,763.8 1885,763.8 1886,763.8 1887,763.8 1888,763.8 1889,763.8 1890,763.8 1891,763.8 1892,763.8 1893,763.8 1894,763.8 1895,763.8" fill="none" stroke="#00c0ff" stroke-width="1.3" stroke-linejoin="round" /><polygon points="1100.7,544.4 1101.7,544.3 1102.7,544.3 1103.7,545 1104.7,544.3 1105.7,544.9 1106.7,544.8 1107.6,544.4 1108.6,544.1 1109.6,545 1110.6,544.6 1111.6,544.3 1112.6,544.8 1113.6,544 1114.6,544.2 1115.6,544.7 1116.6,544.7 1117.6,544.9 1118.6,544.4 1119.6,544.1 1120.6,544.7 1121.6,544.7 1122.6,544.4 1123.6,544.8 1124.6,544.1 1125.6,544.8 1126.6,544.9 1127.6,544.7 1128.5,544.2 1129.5,544.3 1130.5,544.8 1131.5,544.4 1132.5,544.4 1133.5,544.2 1134.5,545 1135.5,544.2 1136.5,544.5 1137.5,544.4 1138.5,544.2 1139.5,544.5 1140.5,544.7 1141.5,543.7 1142.5,544.1 1143.5,544.2 1144.5,544.6 1145.5,544.9 1146.5,545 1147.5,544.6 1148.5,544.4 1149.4,544.8 1150.4,544.7 1151.4,544 1152.4,544.3 1153.4,544.4 1154.4,544.3 1155.4,544.5 1156.4,544.5 1157.4,544.6 1158.4,544.7 1158.4,546.9 1157.4,546.7 1156.4,546.9 1155.4,547.1 1154.4,547 1153.4,547 1152.4,546.8 1151.4,547 1150.4,547 1149.4,546.7 1148.5,547.4 1147.5,547.5 1146.5,547.3 1145.5,547.3 1144.5,547.1 1143.5,547.2 1142.5,547.1 1141.5,547.1 1140.5,546.9 1139.5,546.6 1138.5,546.6 1137.5,547.2 1136.5,547 1135.5,547.3 1134.5,547.1 1133.5,547.5 1132.5,547.1 1131.5,547.5 1130.5,547.2 1129.5,547.1 1128.5,546.8 1127.6,547 1126.6,546.7 1125.6,547.4 1124.6,547.2 1123.6,546.9 1122.6,546.8 1121.6,546.6 1120.6,547.3 1119.6,546.7 1118.6,547 1117.6,547.1 1116.6,546.7 1115.6,546.9 1114.6,546.6 1113.6,546.7 1112.6,546.9 1111.6,547 1110.6,546.8 1109.6,547.2 1108.6,546.6 1107.6,546.9 1106.7,546.7 1105.7,546.9 1104.7,546.8 1103.7,546.7 1102.7,547.3 1101.7,547.5 1100.7,547.4" fill="#00c0ff"/><polygon points="1320,632.6 1321,630.2 1322,626.6 1323,625 1324,621.6 1324.9,619.8 1325.9,616.3 1326.9,613 1327.9,611.3 1328.9,608.4 1329.9,605.6 1330.8,606.1 1331.8,603.7 1332.8,603.7 1333.7,602.4 1334.7,602.7 1335.7,601.4 1336.7,600.2 1337.6,599.2 1338.6,597.9 1339.6,597.2 1340.5,594.3 1341.5,595.3 1342.5,593.3 1343.4,593.9 1344.4,593.1 1345.4,592.6 1346.3,591.7 1347.3,592.6 1348.3,591.4 1349.2,590.9 1350.2,591.3 1351.2,590.4 1352.2,591.9 1353.1,591.9 1354.1,590.9 1355.1,590.1 1356,590.3 1357,589.9 1358,591.2 1358.9,589.7 1359.9,590.1 1360.9,590.9 1361.9,589.9 1362.8,589.7 1363.8,589.7 1364.8,589.6 1365.7,589.7 1366.7,589.9 1367.7,588.5 1368.7,589.5 1369.7,589.7 1370.7,589.3 1371.7,590.3 1372.7,589.1 1373.7,589.3 1374.7,589.5 1375.7,588.8 1376.7,588.8 1377.6,590.1 1378.6,588 1379.6,590.3 1380.6,588.5 1381.6,588.4 1382.6,589.6 1383.6,589.3 1384.6,588.6 1385.6,589.7 1386.6,589.4 1387.6,589.8 1388.6,589.6 1389.6,590.3 1390.6,588.6 1391.6,590.3 1392.6,589.1 1393.6,588.8 1394.6,590.5 1395.6,588.8 1396.6,590.4 1397.6,589.1 1398.6,588.6 1399.5,590 1400.5,590.4 1401.5,588.9 1402.5,588.2 1403.5,589.5 1404.5,590.4 1405.5,590.1 1406.5,589.8 1407.5,589.7 1408.5,590.2 1409.5,589.1 1410.5,588.8 1411.5,590.1 1412.5,589.4 1413.5,588.6 1414.5,589.9 1415.5,589.1 1416.5,588.9 1417.5,590.6 1418.5,589.5 1419.5,589.4 1420.5,588.7 1421.4,590.1 1422.4,589.2 1423.4,589.4 1424.4,589.9 1425.4,589.2 1426.4,590.2 1427.4,588.8 1428.4,590.6 1429.4,588.8 1430.4,589.4 1431.4,589.7 1432.4,589 1433.4,590.7 1434.4,589.1 1435.4,589.8 1436.4,590.5 1437.4,589.1 1438.4,590.6 1439.4,590.1 1440.4,590.6 1441.4,590.8 1442.4,589.3 1443.3,589.8 1444.3,590.1 1445.3,589.9 1446.3,589.9 1447.3,588.9 1448.3,589.3 1449.3,590.6 1450.3,590 1451.3,589.9 1452.3,590.1 1453.3,589.9 1453.9,592.5 1454.6,594.3 1454.6,604.7 1453.9,600.6 1453.3,598.6 1452.3,599.5 1451.3,598.1 1450.3,599.8 1449.3,599.5 1448.3,599.5 1447.3,599.7 1446.3,599.3 1445.3,599.3 1444.3,599.4 1443.3,599.7 1442.4,599.4 1441.4,598.9 1440.4,599.6 1439.4,599.1 1438.4,599.5 1437.4,598.8 1436.4,598.2 1435.4,599.7 1434.4,598.5 1433.4,599.6 1432.4,598.9 1431.4,599.1 1430.4,597.9 1429.4,599.3 1428.4,599.6 1427.4,599.3 1426.4,598.3 1425.4,598 1424.4,598.1 1423.4,599.2 1422.4,598 1421.4,597.8 1420.5,598.4 1419.5,597.7 1418.5,598.2 1417.5,599.2 1416.5,599.5 1415.5,597.6 1414.5,598.3 1413.5,599.5 1412.5,599.4 1411.5,598.5 1410.5,599 1409.5,599.2 1408.5,599.2 1407.5,598 1406.5,597.7 1405.5,599.5 1404.5,599.2 1403.5,598.1 1402.5,598.6 1401.5,598 1400.5,598.8 1399.5,598.7 1398.6,598.1 1397.6,598.6 1396.6,598 1395.6,599.4 1394.6,599.4 1393.6,598.2 1392.6,598.6 1391.6,598 1390.6,598.4 1389.6,597.8 1388.6,599 1387.6,598.1 1386.6,598.2 1385.6,598.7 1384.6,598.3 1383.6,597.7 1382.6,599.4 1381.6,599.1 1380.6,597.6 1379.6,598.8 1378.6,598.7 1377.6,598.9 1376.7,599 1375.7,599 1374.7,598.6 1373.7,598.7 1372.7,598.2 1371.7,598.8 1370.7,598.3 1369.7,599.2 1368.7,597.8 1367.7,598.5 1366.7,599.2 1365.7,598.6 1364.8,598.3 1363.8,599.5 1362.8,598.1 1361.9,598.2 1360.9,599.1 1359.9,599.4 1358.9,599.1 1358,600.1 1357,598.7 1356,599.5 1355.1,599.9 1354.1,600.7 1353.1,600.4 1352.2,600.7 1351.2,599.4 1350.2,599.6 1349.2,601.1 1348.3,600.2 1347.3,601 1346.3,600.5 1345.4,601.9 1344.4,602 1343.4,601.8 1342.5,603.2 1341.5,605 1340.5,605.8 1339.6,605.7 1338.6,606.3 1337.6,608.9 1336.7,609.7 1335.7,609.8 1334.7,610.8 1333.7,611 1332.8,613.5 1331.8,613.4 1330.8,613.9 1329.9,616.2 1328.9,616.2 1327.9,618.6 1326.9,621.8 1325.9,624.7 1324.9,627.9 1324,631.4 1323,633.4 1322,635.7 1321,640.1 1320,642.1" fill="#00c0ff"/><path d="M1562.7 760V549M1159.6 592V724M1622.6 618V765M1090.6 765V627" stroke="#9fcc24" stroke-width="1.4" fill="none"/><rect x="1050.5" y="86.5" width="845" height="361" fill="none" stroke="#7c7c7c" stroke-width="1"/><rect x="1050.5" y="490.5" width="845" height="361" fill="none" stroke="#7c7c7c" stroke-width="1"/><path d="M173.5 310 L177.5 318 L169.5 318 Z" fill="#e8e8e8"/><path d="M173.5 584 L177.5 592 L169.5 592 Z" fill="#8080ff"/><path d="M173.5 851 L177.5 859 L169.5 859 Z" fill="#ff1010"/><path d="M1130.5 448.5 L1134.5 456.5 L1126.5 456.5 Z" fill="#2e8df0"/><path d="M1130.5 852.5 L1134.5 860.5 L1126.5 860.5 Z" fill="#9acd32"/><path d="M940.5 180.5 L946.5 177 L946.5 184 Z" fill="none" stroke="#e0e0e0" stroke-width="1"/></svg>
<div class="t" style="right:1832px;top:87px;font-size:15px;line-height:17px;color:#e0e0e0;">80 A</div><div class="t" style="right:1832px;top:133px;font-size:15px;line-height:17px;color:#e0e0e0;">40 A</div><div class="t" style="right:1832px;top:189px;font-size:15px;line-height:17px;color:#e0e0e0;">0 A</div><div class="t" style="right:1832px;top:245px;font-size:15px;line-height:17px;color:#e0e0e0;">-40 A</div><div class="t" style="right:1832px;top:292px;font-size:15px;line-height:17px;color:#e0e0e0;">-80 A</div><div class="t" style="left:93px;top:312px;font-size:15px;line-height:17px;color:#e0e0e0;">-4.7 s</div><div class="t" style="left:-38.0px;width:600px;text-align:center;top:312px;font-size:15px;line-height:17px;color:#e0e0e0;">5.3 s</div><div class="t" style="left:131.0px;width:600px;text-align:center;top:312px;font-size:15px;line-height:17px;color:#e0e0e0;">15.3 s</div><div class="t" style="left:300.0px;width:600px;text-align:center;top:312px;font-size:15px;line-height:17px;color:#e0e0e0;">25.3 s</div><div class="t" style="left:469.0px;width:600px;text-align:center;top:312px;font-size:15px;line-height:17px;color:#e0e0e0;">35.3 s</div><div class="t" style="right:981px;top:312px;font-size:15px;line-height:17px;color:#e0e0e0;">45.3 s</div><div class="t" style="right:1832px;top:353px;font-size:15px;line-height:17px;color:#8080ff;">80 A</div><div class="t" style="right:1832px;top:401px;font-size:15px;line-height:17px;color:#8080ff;">40 A</div><div class="t" style="right:1832px;top:459px;font-size:15px;line-height:17px;color:#8080ff;">0 A</div><div class="t" style="right:1832px;top:517px;font-size:15px;line-height:17px;color:#8080ff;">-40 A</div><div class="t" style="right:1832px;top:566px;font-size:15px;line-height:17px;color:#8080ff;">-80 A</div><div class="t" style="left:93px;top:586px;font-size:15px;line-height:17px;color:#8080ff;">-4.7 s</div><div class="t" style="left:-38.0px;width:600px;text-align:center;top:586px;font-size:15px;line-height:17px;color:#8080ff;">5.3 s</div><div class="t" style="left:131.0px;width:600px;text-align:center;top:586px;font-size:15px;line-height:17px;color:#8080ff;">15.3 s</div><div class="t" style="left:300.0px;width:600px;text-align:center;top:586px;font-size:15px;line-height:17px;color:#8080ff;">25.3 s</div><div class="t" style="left:469.0px;width:600px;text-align:center;top:586px;font-size:15px;line-height:17px;color:#8080ff;">35.3 s</div><div class="t" style="right:981px;top:586px;font-size:15px;line-height:17px;color:#8080ff;">45.3 s</div><div class="t" style="right:1832px;top:628px;font-size:15px;line-height:17px;color:#ff1010;">80 A</div><div class="t" style="right:1832px;top:674px;font-size:15px;line-height:17px;color:#ff1010;">40 A</div><div class="t" style="right:1832px;top:730px;font-size:15px;line-height:17px;color:#ff1010;">0 A</div><div class="t" style="right:1832px;top:786px;font-size:15px;line-height:17px;color:#ff1010;">-40 A</div><div class="t" style="right:1832px;top:833px;font-size:15px;line-height:17px;color:#ff1010;">-80 A</div><div class="t" style="left:93px;top:853px;font-size:15px;line-height:17px;color:#ff1010;">-4.7 s</div><div class="t" style="left:-38.0px;width:600px;text-align:center;top:853px;font-size:15px;line-height:17px;color:#ff1010;">5.3 s</div><div class="t" style="left:131.0px;width:600px;text-align:center;top:853px;font-size:15px;line-height:17px;color:#ff1010;">15.3 s</div><div class="t" style="left:300.0px;width:600px;text-align:center;top:853px;font-size:15px;line-height:17px;color:#ff1010;">25.3 s</div><div class="t" style="left:469.0px;width:600px;text-align:center;top:853px;font-size:15px;line-height:17px;color:#ff1010;">35.3 s</div><div class="t" style="right:981px;top:853px;font-size:15px;line-height:17px;color:#ff1010;">45.3 s</div><div class="t" style="right:875px;top:87px;font-size:15px;line-height:17px;color:#2e8df0;">210 V</div><div class="t" style="right:875px;top:123px;font-size:15px;line-height:17px;color:#2e8df0;">190 V</div><div class="t" style="right:875px;top:169px;font-size:15px;line-height:17px;color:#2e8df0;">170 V</div><div class="t" style="right:875px;top:214px;font-size:15px;line-height:17px;color:#2e8df0;">150 V</div><div class="t" style="right:875px;top:259px;font-size:15px;line-height:17px;color:#2e8df0;">130 V</div><div class="t" style="right:875px;top:304px;font-size:15px;line-height:17px;color:#2e8df0;">110 V</div><div class="t" style="right:875px;top:349px;font-size:15px;line-height:17px;color:#2e8df0;">90 V</div><div class="t" style="right:875px;top:395px;font-size:15px;line-height:17px;color:#2e8df0;">70 V</div><div class="t" style="right:875px;top:491px;font-size:15px;line-height:17px;color:#9acd32;">40 A</div><div class="t" style="right:875px;top:527px;font-size:15px;line-height:17px;color:#9acd32;">35 A</div><div class="t" style="right:875px;top:573px;font-size:15px;line-height:17px;color:#9acd32;">30 A</div><div class="t" style="right:875px;top:618px;font-size:15px;line-height:17px;color:#9acd32;">25 A</div><div class="t" style="right:875px;top:663px;font-size:15px;line-height:17px;color:#9acd32;">20 A</div><div class="t" style="right:875px;top:708px;font-size:15px;line-height:17px;color:#9acd32;">15 A</div><div class="t" style="right:875px;top:753px;font-size:15px;line-height:17px;color:#9acd32;">10 A</div><div class="t" style="right:875px;top:799px;font-size:15px;line-height:17px;color:#9acd32;">5 A</div><div class="t" style="left:1050px;top:450px;font-size:15px;line-height:17px;color:#2e8df0;">-4.7 s</div><div class="t" style="left:919.0px;width:600px;text-align:center;top:450px;font-size:15px;line-height:17px;color:#2e8df0;">5.3 s</div><div class="t" style="left:1088.0px;width:600px;text-align:center;top:450px;font-size:15px;line-height:17px;color:#2e8df0;">15.3 s</div><div class="t" style="left:1257.0px;width:600px;text-align:center;top:450px;font-size:15px;line-height:17px;color:#2e8df0;">25.3 s</div><div class="t" style="left:1426.0px;width:600px;text-align:center;top:450px;font-size:15px;line-height:17px;color:#2e8df0;">35.3 s</div><div class="t" style="right:24px;top:450px;font-size:15px;line-height:17px;color:#2e8df0;">45.3 s</div><div class="t" style="left:1050px;top:854px;font-size:15px;line-height:17px;color:#9acd32;">-4.7 s</div><div class="t" style="left:919.0px;width:600px;text-align:center;top:854px;font-size:15px;line-height:17px;color:#9acd32;">5.3 s</div><div class="t" style="left:1088.0px;width:600px;text-align:center;top:854px;font-size:15px;line-height:17px;color:#9acd32;">15.3 s</div><div class="t" style="left:1257.0px;width:600px;text-align:center;top:854px;font-size:15px;line-height:17px;color:#9acd32;">25.3 s</div><div class="t" style="left:1426.0px;width:600px;text-align:center;top:854px;font-size:15px;line-height:17px;color:#9acd32;">35.3 s</div><div class="t" style="right:24px;top:854px;font-size:15px;line-height:17px;color:#9acd32;">45.3 s</div><div style="position:absolute;left:72px;top:182px;width:20px;height:13px;background:#e4e4e4;border:1px solid #000;border-right:none;border-radius:3px 0 0 3px;"></div><div style="position:absolute;left:75px;top:197px;width:18px;height:1px;background:#000;"></div><div style="position:absolute;left:75px;top:198px;width:18px;height:1px;background:#e4e4e4;"></div><div style="position:absolute;left:75px;top:199px;width:18px;height:1px;background:#000;"></div><div class="t" style="left:78px;top:184px;font-size:11px;line-height:13px;color:#000;">C5</div><div style="position:absolute;left:72px;top:452px;width:20px;height:13px;background:#8080ff;border:1px solid #000;border-right:none;border-radius:3px 0 0 3px;"></div><div style="position:absolute;left:75px;top:467px;width:18px;height:1px;background:#000;"></div><div style="position:absolute;left:75px;top:468px;width:18px;height:1px;background:#8080ff;"></div><div style="position:absolute;left:75px;top:469px;width:18px;height:1px;background:#000;"></div><div class="t" style="left:78px;top:454px;font-size:11px;line-height:13px;color:#000;">C6</div><div style="position:absolute;left:72px;top:723px;width:20px;height:13px;background:#ff0000;border:1px solid #000;border-right:none;border-radius:3px 0 0 3px;"></div><div style="position:absolute;left:75px;top:738px;width:18px;height:1px;background:#000;"></div><div style="position:absolute;left:75px;top:739px;width:18px;height:1px;background:#ff0000;"></div><div style="position:absolute;left:75px;top:740px;width:18px;height:1px;background:#000;"></div><div class="t" style="left:78px;top:725px;font-size:11px;line-height:13px;color:#000;">C7</div><div style="position:absolute;left:988px;top:432px;width:60px;height:13px;background:#2a8cff;border:1px solid #000;border-radius:3px;"></div><div class="t" style="left:995px;top:434px;font-size:11px;line-height:13px;color:#000040;">Vrms(Vr:Ir)</div><svg style="position:absolute;left:1035px;top:446px" width="12" height="8"><path d="M6.5 0V6.5M3 3.5L6.5 7L10 3.5" stroke="#2a8cff" fill="none" stroke-width="1.2"/></svg><div style="position:absolute;left:994px;top:836px;width:54px;height:13px;background:#9acd32;border:1px solid #000;border-radius:3px;"></div><div class="t" style="left:999px;top:838px;font-size:11px;line-height:13px;color:#102000;">Irms(Vt:It)</div><div style="position:absolute;left:1040px;top:851px;width:10px;height:2px;background:#9acd32;"></div>
<div style="position:absolute;left:9px;top:891px;width:87px;height:20px;background:#ffff00;"></div><div style="position:absolute;left:9px;top:911px;width:87px;height:42px;background:#404040;"></div><div class="t" style="left:12.5px;top:892px;font-size:16px;line-height:18px;color:#000;">C1</div><div style="position:absolute;left:53px;top:892px;width:14.7px;height:18px;background:#000;border-radius:3px;"></div><div class="t" style="left:-239.65px;width:600px;text-align:center;top:893px;font-size:13px;line-height:15px;color:#ffff00;">B</div><div style="position:absolute;left:69px;top:892px;width:23.7px;height:18px;background:#000;border-radius:3px;"></div><div class="t" style="left:-219.15px;width:600px;text-align:center;top:893px;font-size:13px;line-height:15px;color:#ffff00;">D1</div><div class="t" style="right:1827px;top:913px;font-size:16px;line-height:18px;color:#fff;">200 V</div><div class="t" style="right:1827px;top:931px;font-size:16px;line-height:18px;color:#fff;">0.00 V</div><div style="position:absolute;left:99px;top:891px;width:87px;height:20px;background:#ff66bb;"></div><div style="position:absolute;left:99px;top:911px;width:87px;height:42px;background:#404040;"></div><div class="t" style="left:102.5px;top:892px;font-size:16px;line-height:18px;color:#000;">C2</div><div style="position:absolute;left:143px;top:892px;width:14.7px;height:18px;background:#000;border-radius:3px;"></div><div class="t" style="left:-149.65px;width:600px;text-align:center;top:893px;font-size:13px;line-height:15px;color:#ff66bb;">B</div><div style="position:absolute;left:159px;top:892px;width:23.7px;height:18px;background:#000;border-radius:3px;"></div><div class="t" style="left:-129.15px;width:600px;text-align:center;top:893px;font-size:13px;line-height:15px;color:#ff66bb;">D1</div><div class="t" style="right:1737px;top:913px;font-size:16px;line-height:18px;color:#fff;">200 V</div><div class="t" style="right:1737px;top:931px;font-size:16px;line-height:18px;color:#fff;">0.00 V</div><div style="position:absolute;left:189px;top:891px;width:87px;height:20px;background:#00ffff;"></div><div style="position:absolute;left:189px;top:911px;width:87px;height:42px;background:#404040;"></div><div class="t" style="left:192.5px;top:892px;font-size:16px;line-height:18px;color:#000;">C3</div><div style="position:absolute;left:233px;top:892px;width:14.7px;height:18px;background:#000;border-radius:3px;"></div><div class="t" style="left:-59.650000000000006px;width:600px;text-align:center;top:893px;font-size:13px;line-height:15px;color:#00ffff;">B</div><div style="position:absolute;left:249px;top:892px;width:23.7px;height:18px;background:#000;border-radius:3px;"></div><div class="t" style="left:-39.14999999999998px;width:600px;text-align:center;top:893px;font-size:13px;line-height:15px;color:#00ffff;">D1</div><div class="t" style="right:1647px;top:913px;font-size:16px;line-height:18px;color:#fff;">200 V</div><div class="t" style="right:1647px;top:931px;font-size:16px;line-height:18px;color:#fff;">0.00 V</div><div style="position:absolute;left:279px;top:891px;width:122px;height:20px;background:#e0e0e0;"></div><div style="position:absolute;left:279px;top:911px;width:122px;height:42px;background:#404040;"></div><div class="t" style="left:282.5px;top:892px;font-size:16px;line-height:18px;color:#000;">C5</div><div style="position:absolute;left:318px;top:892px;width:33px;height:18px;background:#000;border-radius:3px;"></div><div class="t" style="left:34.5px;width:600px;text-align:center;top:893px;font-size:13px;line-height:15px;color:#e4e4e4;">BwL</div><div style="position:absolute;left:352px;top:892px;width:46px;height:18px;background:#000;border-radius:3px;"></div><div class="t" style="left:75.0px;width:600px;text-align:center;top:893px;font-size:13px;line-height:15px;color:#e4e4e4;">DC1M</div><div class="t" style="right:1522px;top:913px;font-size:16px;line-height:18px;color:#fff;">20.0 A/div</div><div class="t" style="right:1522px;top:931px;font-size:16px;line-height:18px;color:#fff;">0 mA offset</div><div style="position:absolute;left:404px;top:891px;width:87px;height:20px;background:#8080ff;"></div><div style="position:absolute;left:404px;top:911px;width:87px;height:42px;background:#404040;"></div><div class="t" style="left:407.5px;top:892px;font-size:16px;line-height:18px;color:#000;">C6</div><div style="position:absolute;left:448px;top:892px;width:14.7px;height:18px;background:#000;border-radius:3px;"></div><div class="t" style="left:155.35000000000002px;width:600px;text-align:center;top:893px;font-size:13px;line-height:15px;color:#8080ff;">B</div><div style="position:absolute;left:464px;top:892px;width:23.7px;height:18px;background:#000;border-radius:3px;"></div><div class="t" style="left:175.85000000000002px;width:600px;text-align:center;top:893px;font-size:13px;line-height:15px;color:#8080ff;">D1</div><div class="t" style="right:1432px;top:913px;font-size:16px;line-height:18px;color:#fff;">20.0 A</div><div class="t" style="right:1432px;top:931px;font-size:16px;line-height:18px;color:#fff;">0 mA</div><div style="position:absolute;left:494px;top:891px;width:87px;height:20px;background:#ff0000;"></div><div style="position:absolute;left:494px;top:911px;width:87px;height:42px;background:#404040;"></div><div class="t" style="left:497.5px;top:892px;font-size:16px;line-height:18px;color:#000;">C7</div><div style="position:absolute;left:538px;top:892px;width:14.7px;height:18px;background:#000;border-radius:3px;"></div><div class="t" style="left:245.35000000000002px;width:600px;text-align:center;top:893px;font-size:13px;line-height:15px;color:#ff0000;">B</div><div style="position:absolute;left:554px;top:892px;width:23.7px;height:18px;background:#000;border-radius:3px;"></div><div class="t" style="left:265.85px;width:600px;text-align:center;top:893px;font-size:13px;line-height:15px;color:#ff0000;">D1</div><div class="t" style="right:1342px;top:913px;font-size:16px;line-height:18px;color:#fff;">20.0 A</div><div class="t" style="right:1342px;top:931px;font-size:16px;line-height:18px;color:#fff;">0 mA</div><div style="position:absolute;left:584px;top:891px;width:85px;height:60px;border:1px dashed #e0e0e0;"></div><div style="position:absolute;left:619px;top:920px;width:14px;height:2px;background:#fff;"></div><div style="position:absolute;left:625px;top:914px;width:2px;height:14px;background:#fff;"></div><div style="position:absolute;left:965px;top:890px;width:124px;height:64px;background:#2a8aff;border-radius:2px;"></div><div style="position:absolute;left:967px;top:911px;width:120px;height:41px;background:#264a6a;"></div><div class="t" style="left:969px;top:892px;font-size:16px;line-height:18px;color:#000;">Vrms(Vr:Ir)</div><div class="t" style="right:834px;top:913px;font-size:16px;line-height:18px;color:#fff;">20.0 V/div</div><div class="t" style="right:834px;top:931px;font-size:16px;line-height:18px;color:#fff;">5.00 s/div</div><div style="position:absolute;left:1091px;top:891px;width:122px;height:20px;background:#009900;"></div><div style="position:absolute;left:1091px;top:911px;width:122px;height:42px;background:#404040;"></div><div class="t" style="left:1095px;top:892px;font-size:16px;line-height:18px;color:#000;">Vrms(Vt:It)</div><div class="t" style="right:710px;top:913px;font-size:16px;line-height:18px;color:#fff;">20.0 V/div</div><div class="t" style="right:710px;top:931px;font-size:16px;line-height:18px;color:#fff;">5.00 s/div</div><div style="position:absolute;left:1216px;top:891px;width:122px;height:20px;background:#ffc000;"></div><div style="position:absolute;left:1216px;top:911px;width:122px;height:42px;background:#404040;"></div><div class="t" style="left:1220px;top:892px;font-size:16px;line-height:18px;color:#000;">Vrms(Vs:Is)</div><div class="t" style="right:585px;top:913px;font-size:16px;line-height:18px;color:#fff;">20.0 V/div</div><div class="t" style="right:585px;top:931px;font-size:16px;line-height:18px;color:#fff;">5.00 s/div</div><div style="position:absolute;left:1341px;top:891px;width:122px;height:20px;background:#ff6090;"></div><div style="position:absolute;left:1341px;top:911px;width:122px;height:42px;background:#404040;"></div><div class="t" style="left:1345px;top:892px;font-size:16px;line-height:18px;color:#000;">Irms(Vr:Ir)</div><div class="t" style="right:460px;top:913px;font-size:16px;line-height:18px;color:#fff;">5.00 A/div</div><div class="t" style="right:460px;top:931px;font-size:16px;line-height:18px;color:#fff;">5.00 s/div</div><div style="position:absolute;left:1466px;top:891px;width:122px;height:20px;background:#00c0ff;"></div><div style="position:absolute;left:1466px;top:911px;width:122px;height:42px;background:#404040;"></div><div class="t" style="left:1470px;top:892px;font-size:16px;line-height:18px;color:#000;">Irms(Vs:Is)</div><div class="t" style="right:335px;top:913px;font-size:16px;line-height:18px;color:#fff;">5.00 A/div</div><div class="t" style="right:335px;top:931px;font-size:16px;line-height:18px;color:#fff;">5.00 s/div</div><div style="position:absolute;left:1591px;top:891px;width:122px;height:20px;background:#a0d020;"></div><div style="position:absolute;left:1591px;top:911px;width:122px;height:42px;background:#404040;"></div><div class="t" style="left:1595px;top:892px;font-size:16px;line-height:18px;color:#000;">Irms(Vt:It)</div><div class="t" style="right:210px;top:913px;font-size:16px;line-height:18px;color:#fff;">5.00 A/div</div><div class="t" style="right:210px;top:931px;font-size:16px;line-height:18px;color:#fff;">5.00 s/div</div><div style="position:absolute;left:0px;top:956px;width:1920px;height:124px;background:#000;"></div><div style="position:absolute;left:0px;top:957px;width:1612px;height:100px;background:#7a7a7a;"></div><div style="position:absolute;left:1px;top:958px;width:1610px;height:98px;background:#210419;"></div><div style="position:absolute;left:124.5px;top:978px;width:124.0px;height:19px;background:#5e0625;"></div><div style="position:absolute;left:248.5px;top:978px;width:124.0px;height:19px;background:#5e0625;"></div><div style="position:absolute;left:372.5px;top:978px;width:124.0px;height:19px;background:#5e0625;"></div><div style="position:absolute;left:620.5px;top:978px;width:124.0px;height:19px;background:#5e0625;"></div><div style="position:absolute;left:124.5px;top:998px;width:124.0px;height:19px;background:#5e0625;"></div><div style="position:absolute;left:248.5px;top:998px;width:124.0px;height:19px;background:#5e0625;"></div><div style="position:absolute;left:372.5px;top:998px;width:124.0px;height:19px;background:#5e0625;"></div><div style="position:absolute;left:620.5px;top:998px;width:124.0px;height:19px;background:#5e0625;"></div><div style="position:absolute;left:124.5px;top:1018px;width:124.0px;height:19px;background:#5e0625;"></div><div style="position:absolute;left:248.5px;top:1018px;width:124.0px;height:19px;background:#5e0625;"></div><div style="position:absolute;left:372.5px;top:1018px;width:124.0px;height:19px;background:#5e0625;"></div><div style="position:absolute;left:620.5px;top:1018px;width:124.0px;height:19px;background:#5e0625;"></div><svg style="position:absolute;left:0;top:0" width="1920" height="1080"><path d="M1 977.5H1611M1 997.5H1611M1 1017.5H1611M1 1037.5H1611M124.5 958V1056M248.5 958V1056M372.5 958V1056M496.5 958V1056M620.5 958V1056M744.5 958V1056M868.5 958V1056M992.5 958V1056M1116.5 958V1056M1240.5 958V1056M1364.5 958V1056M1488.5 958V1056" stroke="#9a9a9a" stroke-width="1" stroke-dasharray="1 2" fill="none" shape-rendering="crispEdges"/></svg><div class="t" style="left:2px;top:959px;font-size:16px;line-height:18px;color:#fff;font-weight:bold;">Numerics</div><div class="t" style="right:1673.5px;top:959px;font-size:16px;line-height:18px;color:#fff;font-weight:bold;">Vrms</div><div class="t" style="right:1549.5px;top:959px;font-size:16px;line-height:18px;color:#fff;font-weight:bold;">Irms</div><div class="t" style="right:1425.5px;top:959px;font-size:16px;line-height:18px;color:#fff;font-weight:bold;">P</div><div class="t" style="right:1301.5px;top:959px;font-size:16px;line-height:18px;color:#fff;font-weight:bold;">S</div><div class="t" style="right:1177.5px;top:959px;font-size:16px;line-height:18px;color:#fff;font-weight:bold;">Q</div><div class="t" style="right:1053.5px;top:959px;font-size:16px;line-height:18px;color:#fff;font-weight:bold;">PF</div><div class="t" style="right:929.5px;top:959px;font-size:16px;line-height:18px;color:#fff;font-weight:bold;">&#981;</div><div class="t" style="left:2px;top:979px;font-size:16px;line-height:18px;color:#fff;font-weight:bold;">Vr:Ir</div><div class="t" style="left:57px;top:978px;font-size:11px;line-height:13px;color:#fff;font-weight:bold;">LL to LN</div><div class="t" style="right:1673.5px;top:979px;font-size:16px;line-height:18px;color:#fff;">153.23 V</div><div class="t" style="right:1549.5px;top:979px;font-size:16px;line-height:18px;color:#fff;">18.225 A</div><div class="t" style="right:1425.5px;top:979px;font-size:16px;line-height:18px;color:#fff;">2.56269 kW</div><div class="t" style="right:1301.5px;top:979px;font-size:16px;line-height:18px;color:#fff;">2.9737 kVA</div><div class="t" style="right:1177.5px;top:979px;font-size:16px;line-height:18px;color:#fff;">-748.76 VAR</div><div class="t" style="right:1053.5px;top:979px;font-size:16px;line-height:18px;color:#fff;">900e-3</div><div class="t" style="right:929.5px;top:979px;font-size:16px;line-height:18px;color:#fff;">-2.6383 &#176;</div><div class="t" style="left:2px;top:999px;font-size:16px;line-height:18px;color:#fff;font-weight:bold;">Vs:Is</div><div class="t" style="left:64px;top:998px;font-size:11px;line-height:13px;color:#fff;font-weight:bold;">LL to LN</div><div class="t" style="right:1673.5px;top:999px;font-size:16px;line-height:18px;color:#fff;">152.13 V</div><div class="t" style="right:1549.5px;top:999px;font-size:16px;line-height:18px;color:#fff;">18.220 A</div><div class="t" style="right:1425.5px;top:999px;font-size:16px;line-height:18px;color:#fff;">2.57211 kW</div><div class="t" style="right:1301.5px;top:999px;font-size:16px;line-height:18px;color:#fff;">2.9299 kVA</div><div class="t" style="right:1177.5px;top:999px;font-size:16px;line-height:18px;color:#fff;">-498.45 VAR</div><div class="t" style="right:1053.5px;top:999px;font-size:16px;line-height:18px;color:#fff;">903e-3</div><div class="t" style="right:929.5px;top:999px;font-size:16px;line-height:18px;color:#fff;">1.7309 &#176;</div><div class="t" style="left:2px;top:1019px;font-size:16px;line-height:18px;color:#fff;font-weight:bold;">Vt:It</div><div class="t" style="left:56px;top:1018px;font-size:11px;line-height:13px;color:#fff;font-weight:bold;">LL to LN</div><div class="t" style="right:1673.5px;top:1019px;font-size:16px;line-height:18px;color:#fff;">152.65 V</div><div class="t" style="right:1549.5px;top:1019px;font-size:16px;line-height:18px;color:#fff;">16.471 A</div><div class="t" style="right:1425.5px;top:1019px;font-size:16px;line-height:18px;color:#fff;">2.35730 kW</div><div class="t" style="right:1301.5px;top:1019px;font-size:16px;line-height:18px;color:#fff;">2.6890 kVA</div><div class="t" style="right:1177.5px;top:1019px;font-size:16px;line-height:18px;color:#fff;">-585.96 VAR</div><div class="t" style="right:1053.5px;top:1019px;font-size:16px;line-height:18px;color:#fff;">897e-3</div><div class="t" style="right:929.5px;top:1019px;font-size:16px;line-height:18px;color:#fff;">-178.2 m&#176;</div><div class="t" style="left:2px;top:1039px;font-size:16px;line-height:18px;color:#fff;font-weight:bold;">&#931;rst</div><div class="t" style="left:56px;top:1038px;font-size:11px;line-height:13px;color:#fff;font-weight:bold;">LL to LN</div><div class="t" style="right:1673.5px;top:1039px;font-size:16px;line-height:18px;color:#fff;">152.67 V</div><div class="t" style="right:1549.5px;top:1039px;font-size:16px;line-height:18px;color:#fff;">17.638 A</div><div class="t" style="right:1425.5px;top:1039px;font-size:16px;line-height:18px;color:#fff;">7.49210 kW</div><div class="t" style="right:1301.5px;top:1039px;font-size:16px;line-height:18px;color:#fff;">8.5926 kVA</div><div class="t" style="right:1177.5px;top:1039px;font-size:16px;line-height:18px;color:#fff;">3.59866 kVAR</div><div class="t" style="right:1053.5px;top:1039px;font-size:16px;line-height:18px;color:#fff;">900e-3</div><div class="t" style="right:929.5px;top:1039px;font-size:16px;line-height:18px;color:#fff;">21.4799 &#176;</div><div style="position:absolute;left:1647px;top:994px;width:141px;height:62px;background:#404040;"></div><div style="position:absolute;left:1648px;top:994px;width:139px;height:19px;background:#fafafa;"></div><div class="t" style="left:1650px;top:995px;font-size:16px;line-height:18px;color:#000;">Timebase</div><div class="t" style="right:135px;top:995px;font-size:16px;line-height:18px;color:#000;">-20.3 s</div><div class="t" style="right:135px;top:1016px;font-size:16px;line-height:18px;color:#fff;">5.00 s/div</div><div class="t" style="left:1650px;top:1036px;font-size:16px;line-height:18px;color:#fff;">50 MS</div><div class="t" style="right:135px;top:1036px;font-size:16px;line-height:18px;color:#fff;">1 MS/s</div><div style="position:absolute;left:1791px;top:994px;width:122px;height:62px;background:#404040;"></div><div style="position:absolute;left:1792px;top:994px;width:120px;height:19px;background:#fafafa;"></div><div class="t" style="left:1795px;top:995px;font-size:16px;line-height:18px;color:#000;">Trigger</div><div style="position:absolute;left:1848px;top:995px;width:24px;height:17px;background:#000;border-radius:2px;"></div><div class="t" style="left:1560px;width:600px;text-align:center;top:996px;font-size:13px;line-height:15px;color:#fff;">C5</div><div style="position:absolute;left:1875px;top:995px;width:35px;height:17px;background:#000;border-radius:2px;"></div><div class="t" style="left:1592.5px;width:600px;text-align:center;top:996px;font-size:13px;line-height:15px;color:#fff;">HFR</div><div class="t" style="left:1795px;top:1016px;font-size:16px;line-height:18px;color:#fff;">Stop</div><div class="t" style="right:10px;top:1016px;font-size:16px;line-height:18px;color:#fff;">13.2 V</div><div class="t" style="left:1795px;top:1036px;font-size:16px;line-height:18px;color:#fff;">Edge</div><div class="t" style="right:9px;top:1036px;font-size:16px;line-height:18px;color:#fff;">Positive</div><div style="position:absolute;left:0px;top:1058px;width:1920px;height:1px;background:#6a6a6a;"></div><div class="t" style="left:6px;top:1058px;font-size:19px;line-height:22px;color:#fff;font-weight:bold;transform:scaleX(0.84);transform-origin:0 0;-webkit-text-stroke:0.4px #fff;">TELEDYNE</div><div class="t" style="left:96px;top:1058px;font-size:19px;line-height:22px;color:#fff;transform:scaleX(0.74);transform-origin:0 0;">LECROY</div><div class="t" style="right:17px;top:1061px;font-size:16px;line-height:18px;color:#fff;">7/25/2019 5:15:48 PM</div>
</body></html>
